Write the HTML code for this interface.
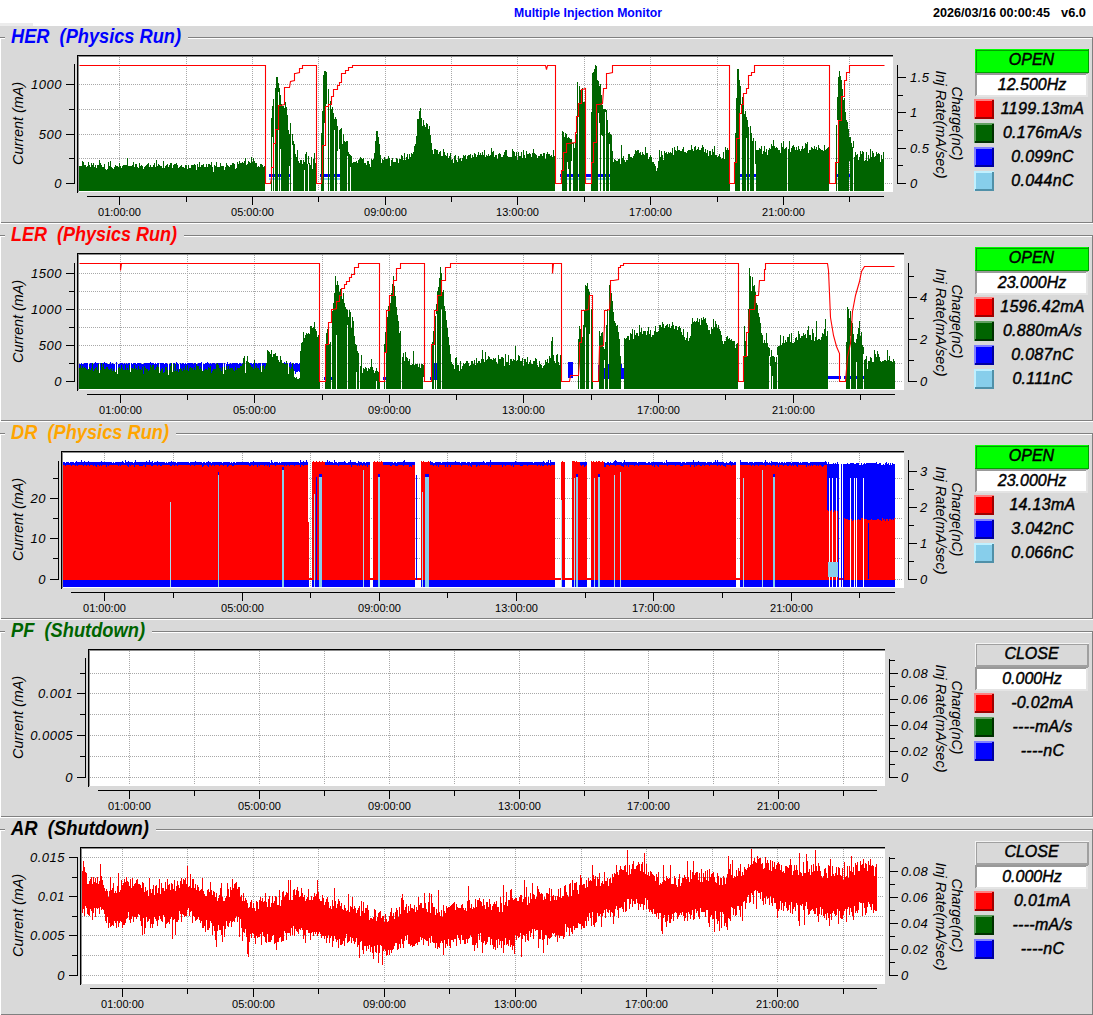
<!DOCTYPE html><html><head><meta charset="utf-8"><style>html,body{margin:0;padding:0;background:#d9d9d9;width:1093px;height:1015px;overflow:hidden}svg{position:absolute;left:0;top:0;display:block}text{font-family:'Liberation Sans', sans-serif}</style></head><body><svg width="1093" height="1015" viewBox="0 0 1093 1015"><rect x="0" y="0" width="1093" height="1015" fill="#d9d9d9"/><rect x="0" y="0" width="1093" height="26" fill="#ffffff"/><rect x="0" y="23" width="33" height="3" fill="#ececec"/><text x="514" y="17" font-size="12" font-weight="bold" fill="#0000ff" textLength="148" lengthAdjust="spacingAndGlyphs">Multiple Injection Monitor</text><text x="933" y="17" font-size="12" font-weight="bold" fill="#000" textLength="117" lengthAdjust="spacingAndGlyphs">2026/03/16 00:00:45</text><text x="1061" y="17" font-size="12" font-weight="bold" fill="#000" textLength="25" lengthAdjust="spacingAndGlyphs">v6.0</text><g shape-rendering="crispEdges"><rect x="0" y="37" width="1092" height="1" fill="#808080"/><rect x="0" y="222" width="1092" height="1" fill="#808080"/><rect x="1092" y="37" width="1" height="186" fill="#808080"/><rect x="0" y="38" width="1092" height="1" fill="#fff"/><rect x="0" y="223" width="1093" height="1" fill="#fff"/><rect x="0" y="38" width="1" height="185" fill="#fff"/><rect x="5" y="36" width="183" height="3" fill="#d9d9d9"/></g><text x="11" y="43" font-size="20" font-weight="bold" font-style="italic" fill="#0000ff" textLength="170" lengthAdjust="spacingAndGlyphs" xml:space="preserve">HER  (Physics Run)</text><g shape-rendering="crispEdges"><rect x="0" y="235" width="1092" height="1" fill="#808080"/><rect x="0" y="420" width="1092" height="1" fill="#808080"/><rect x="1092" y="235" width="1" height="186" fill="#808080"/><rect x="0" y="236" width="1092" height="1" fill="#fff"/><rect x="0" y="421" width="1093" height="1" fill="#fff"/><rect x="0" y="236" width="1" height="185" fill="#fff"/><rect x="5" y="234" width="179" height="3" fill="#d9d9d9"/></g><text x="11" y="241" font-size="20" font-weight="bold" font-style="italic" fill="#ff0000" textLength="166" lengthAdjust="spacingAndGlyphs" xml:space="preserve">LER  (Physics Run)</text><g shape-rendering="crispEdges"><rect x="0" y="433" width="1092" height="1" fill="#808080"/><rect x="0" y="618" width="1092" height="1" fill="#808080"/><rect x="1092" y="433" width="1" height="186" fill="#808080"/><rect x="0" y="434" width="1092" height="1" fill="#fff"/><rect x="0" y="619" width="1093" height="1" fill="#fff"/><rect x="0" y="434" width="1" height="185" fill="#fff"/><rect x="5" y="432" width="171" height="3" fill="#d9d9d9"/></g><text x="11" y="439" font-size="20" font-weight="bold" font-style="italic" fill="#ffa500" textLength="158" lengthAdjust="spacingAndGlyphs" xml:space="preserve">DR  (Physics Run)</text><g shape-rendering="crispEdges"><rect x="0" y="631" width="1092" height="1" fill="#808080"/><rect x="0" y="816" width="1092" height="1" fill="#808080"/><rect x="1092" y="631" width="1" height="186" fill="#808080"/><rect x="0" y="632" width="1092" height="1" fill="#fff"/><rect x="0" y="817" width="1093" height="1" fill="#fff"/><rect x="0" y="632" width="1" height="185" fill="#fff"/><rect x="5" y="630" width="147" height="3" fill="#d9d9d9"/></g><text x="11" y="637" font-size="20" font-weight="bold" font-style="italic" fill="#006400" textLength="134" lengthAdjust="spacingAndGlyphs" xml:space="preserve">PF  (Shutdown)</text><g shape-rendering="crispEdges"><rect x="0" y="829" width="1092" height="1" fill="#808080"/><rect x="0" y="1014" width="1092" height="1" fill="#808080"/><rect x="1092" y="829" width="1" height="186" fill="#808080"/><rect x="0" y="830" width="1092" height="1" fill="#fff"/><rect x="0" y="1015" width="1093" height="1" fill="#fff"/><rect x="0" y="830" width="1" height="185" fill="#fff"/><rect x="5" y="828" width="151" height="3" fill="#d9d9d9"/></g><text x="11" y="835" font-size="20" font-weight="bold" font-style="italic" fill="#000000" textLength="138" lengthAdjust="spacingAndGlyphs" xml:space="preserve">AR  (Shutdown)</text><rect x="77" y="55" width="816" height="137" fill="#fff"/><line x1="79" y1="84.5" x2="892" y2="84.5" stroke="#a8a8a8" stroke-width="1" stroke-dasharray="1 1" shape-rendering="crispEdges"/><line x1="79" y1="109.5" x2="892" y2="109.5" stroke="#a8a8a8" stroke-width="1" stroke-dasharray="1 1" shape-rendering="crispEdges"/><line x1="79" y1="134.5" x2="892" y2="134.5" stroke="#a8a8a8" stroke-width="1" stroke-dasharray="1 1" shape-rendering="crispEdges"/><line x1="79" y1="158.5" x2="892" y2="158.5" stroke="#a8a8a8" stroke-width="1" stroke-dasharray="1 1" shape-rendering="crispEdges"/><line x1="79" y1="183.5" x2="892" y2="183.5" stroke="#a8a8a8" stroke-width="1" stroke-dasharray="1 1" shape-rendering="crispEdges"/><line x1="119.5" y1="57" x2="119.5" y2="191" stroke="#a8a8a8" stroke-width="1" stroke-dasharray="1 1" shape-rendering="crispEdges"/><line x1="186.5" y1="57" x2="186.5" y2="191" stroke="#a8a8a8" stroke-width="1" stroke-dasharray="1 1" shape-rendering="crispEdges"/><line x1="252.5" y1="57" x2="252.5" y2="191" stroke="#a8a8a8" stroke-width="1" stroke-dasharray="1 1" shape-rendering="crispEdges"/><line x1="318.5" y1="57" x2="318.5" y2="191" stroke="#a8a8a8" stroke-width="1" stroke-dasharray="1 1" shape-rendering="crispEdges"/><line x1="385.5" y1="57" x2="385.5" y2="191" stroke="#a8a8a8" stroke-width="1" stroke-dasharray="1 1" shape-rendering="crispEdges"/><line x1="451.5" y1="57" x2="451.5" y2="191" stroke="#a8a8a8" stroke-width="1" stroke-dasharray="1 1" shape-rendering="crispEdges"/><line x1="517.5" y1="57" x2="517.5" y2="191" stroke="#a8a8a8" stroke-width="1" stroke-dasharray="1 1" shape-rendering="crispEdges"/><line x1="584.5" y1="57" x2="584.5" y2="191" stroke="#a8a8a8" stroke-width="1" stroke-dasharray="1 1" shape-rendering="crispEdges"/><line x1="650.5" y1="57" x2="650.5" y2="191" stroke="#a8a8a8" stroke-width="1" stroke-dasharray="1 1" shape-rendering="crispEdges"/><line x1="717.5" y1="57" x2="717.5" y2="191" stroke="#a8a8a8" stroke-width="1" stroke-dasharray="1 1" shape-rendering="crispEdges"/><line x1="783.5" y1="57" x2="783.5" y2="191" stroke="#a8a8a8" stroke-width="1" stroke-dasharray="1 1" shape-rendering="crispEdges"/><line x1="849.5" y1="57" x2="849.5" y2="191" stroke="#a8a8a8" stroke-width="1" stroke-dasharray="1 1" shape-rendering="crispEdges"/><rect x="269" y="178" width="21" height="2" fill="#87ceeb" shape-rendering="crispEdges"/><rect x="269" y="174" width="21" height="3" fill="#0000ff" shape-rendering="crispEdges"/><rect x="320" y="178" width="22" height="2" fill="#87ceeb" shape-rendering="crispEdges"/><rect x="320" y="174" width="22" height="3" fill="#0000ff" shape-rendering="crispEdges"/><rect x="560" y="178" width="53" height="2" fill="#87ceeb" shape-rendering="crispEdges"/><rect x="560" y="174" width="53" height="3" fill="#0000ff" shape-rendering="crispEdges"/><rect x="734" y="178" width="23" height="2" fill="#87ceeb" shape-rendering="crispEdges"/><rect x="734" y="174" width="23" height="3" fill="#0000ff" shape-rendering="crispEdges"/><rect x="835" y="178" width="17" height="2" fill="#87ceeb" shape-rendering="crispEdges"/><rect x="835" y="174" width="17" height="3" fill="#0000ff" shape-rendering="crispEdges"/><path d="M78,162.6h1V191h-1zM79,165.8h1V191h-1zM80,166h1V191h-1zM81,165.5h1V191h-1zM82,160.7h1V191h-1zM83,162.2h1V191h-1zM84,165.3h1V191h-1zM85,165.4h1V191h-1zM86,167.3h1V191h-1zM87,165.5h1V191h-1zM88,162.2h1V191h-1zM89,165.1h1V191h-1zM90,166.8h1V191h-1zM91,162.5h1V191h-1zM92,165.4h1V191h-1zM93,163.2h1V191h-1zM94,166.6h1V191h-1zM95,165.2h1V191h-1zM96,167.7h1V191h-1zM97,164.6h1V191h-1zM98,165.3h1V191h-1zM99,159.8h1V191h-1zM100,163.2h1V191h-1zM101,164.5h1V191h-1zM102,166.8h1V191h-1zM103,166.7h1V191h-1zM104,163.9h1V191h-1zM105,169.2h1V191h-1zM106,170.2h1V191h-1zM107,168.9h1V191h-1zM108,161.9h1V191h-1zM109,166.1h1V191h-1zM110,160.5h1V191h-1zM111,166.9h1V191h-1zM112,167.9h1V191h-1zM113,169h1V191h-1zM114,166.7h1V191h-1zM115,165h1V191h-1zM116,165.9h1V191h-1zM117,165.8h1V191h-1zM118,166.7h1V191h-1zM119,163.1h1V191h-1zM120,165.9h1V191h-1zM121,168h1V191h-1zM122,165.6h1V191h-1zM123,164.9h1V191h-1zM124,164.6h1V191h-1zM125,165.1h1V191h-1zM126,164.6h1V191h-1zM127,158h1V191h-1zM128,166h1V191h-1zM129,165.5h1V191h-1zM130,166.4h1V191h-1zM131,165.6h1V191h-1zM132,164.6h1V191h-1zM133,162.2h1V191h-1zM134,167.1h1V191h-1zM135,164.1h1V191h-1zM136,163.7h1V191h-1zM137,167.4h1V191h-1zM138,168h1V191h-1zM139,163.4h1V191h-1zM140,166.1h1V191h-1zM141,165h1V191h-1zM142,166.1h1V191h-1zM143,168.8h1V191h-1zM144,167.4h1V191h-1zM145,165.8h1V191h-1zM146,164.6h1V191h-1zM147,163.9h1V191h-1zM148,162.5h1V191h-1zM149,167.3h1V191h-1zM150,165.3h1V191h-1zM151,166.8h1V191h-1zM152,167.3h1V191h-1zM153,165.3h1V191h-1zM154,163.4h1V191h-1zM155,167.2h1V191h-1zM156,160.2h1V191h-1zM157,166h1V191h-1zM158,163.8h1V191h-1zM159,164.5h1V191h-1zM160,166.2h1V191h-1zM161,166.3h1V191h-1zM162,167.6h1V191h-1zM163,161.1h1V191h-1zM164,168.1h1V191h-1zM165,166h1V191h-1zM166,165.1h1V191h-1zM167,163.6h1V191h-1zM168,166.6h1V191h-1zM169,165.4h1V191h-1zM170,162.8h1V191h-1zM171,162.8h1V191h-1zM172,168h1V191h-1zM173,165.2h1V191h-1zM174,164h1V191h-1zM175,163.5h1V191h-1zM176,162.5h1V191h-1zM177,165.2h1V191h-1zM178,167.9h1V191h-1zM179,167.1h1V191h-1zM180,166.3h1V191h-1zM181,165.3h1V191h-1zM182,166.7h1V191h-1zM183,166.8h1V191h-1zM184,168.1h1V191h-1zM185,165.1h1V191h-1zM186,165.1h1V191h-1zM187,169h1V191h-1zM188,165.1h1V191h-1zM189,167.6h1V191h-1zM190,168.2h1V191h-1zM191,165.3h1V191h-1zM192,165.4h1V191h-1zM193,165.4h1V191h-1zM194,163.6h1V191h-1zM195,164.8h1V191h-1zM196,170h1V191h-1zM197,164.4h1V191h-1zM198,167.4h1V191h-1zM199,161.7h1V191h-1zM200,166.5h1V191h-1zM201,165.1h1V191h-1zM202,164.9h1V191h-1zM203,163.9h1V191h-1zM204,167.2h1V191h-1zM205,167.2h1V191h-1zM206,164h1V191h-1zM207,166.9h1V191h-1zM208,163.8h1V191h-1zM209,163.5h1V191h-1zM210,165.2h1V191h-1zM211,161.7h1V191h-1zM212,166.8h1V191h-1zM213,172.3h1V191h-1zM214,165.3h1V191h-1zM215,166.2h1V191h-1zM216,161.7h1V191h-1zM217,167h1V191h-1zM218,167h1V191h-1zM219,166.8h1V191h-1zM220,163h1V191h-1zM221,165.6h1V191h-1zM222,165.7h1V191h-1zM223,166.4h1V191h-1zM224,169.7h1V191h-1zM225,167h1V191h-1zM226,163h1V191h-1zM227,164.8h1V191h-1zM228,166h1V191h-1zM229,167h1V191h-1zM230,164.6h1V191h-1zM231,164.8h1V191h-1zM232,163.4h1V191h-1zM233,163.2h1V191h-1zM234,164.3h1V191h-1zM235,168.8h1V191h-1zM236,167.6h1V191h-1zM237,161.8h1V191h-1zM238,164h1V191h-1zM239,161.3h1V191h-1zM240,162.9h1V191h-1zM241,162.8h1V191h-1zM242,161.5h1V191h-1zM243,162.6h1V191h-1zM244,160.5h1V191h-1zM245,157.9h1V191h-1zM246,164.6h1V191h-1zM247,163.7h1V191h-1zM248,160.9h1V191h-1zM249,162.3h1V191h-1zM250,163.4h1V191h-1zM251,157.2h1V191h-1zM252,162.1h1V191h-1zM253,158.4h1V191h-1zM254,160.9h1V191h-1zM255,163.3h1V191h-1zM256,163.2h1V191h-1zM257,167.1h1V191h-1zM258,166h1V191h-1zM259,167.1h1V191h-1zM260,164.1h1V191h-1zM261,164.2h1V191h-1zM262,164.8h1V191h-1zM263,167.2h1V191h-1zM264,166h1V191h-1zM271,118.2h1V191h-1zM272,105.7h1V136.5h-1zM273,98.8h1V191h-1zM275,88.3h1V191h-1zM276,76.7h1V191h-1zM277,77.2h1V191h-1zM278,83.1h1V91.6h-1zM279,88.3h1V191h-1zM280,95.1h1V148.7h-1zM281,104h1V191h-1zM282,105.9h1V191h-1zM283,106.1h1V191h-1zM284,107.6h1V191h-1zM285,102.4h1V191h-1zM286,106.6h1V191h-1zM287,115h1V191h-1zM288,129.9h1V191h-1zM289,133.9h1V165.6h-1zM290,123.1h1V191h-1zM292,133.8h1V144.5h-1zM293,140.5h1V191h-1zM294,143.8h1V191h-1zM295,154.4h1V191h-1zM296,156.6h1V191h-1zM297,149.7h1V191h-1zM298,160.5h1V191h-1zM299,162.8h1V191h-1zM300,160.4h1V191h-1zM301,160.4h1V191h-1zM302,163.8h1V191h-1zM303,160.4h1V191h-1zM304,161.7h1V170.2h-1zM305,154.4h1V191h-1zM306,152.2h1V191h-1zM307,164.2h1V191h-1zM308,155.6h1V163.7h-1zM309,162.5h1V191h-1zM310,164.5h1V191h-1zM311,156.9h1V191h-1zM312,169.1h1V191h-1zM313,158.9h1V191h-1zM314,153.1h1V191h-1zM315,162.5h1V191h-1zM321,132.8h1V191h-1zM322,110.9h1V191h-1zM323,75.4h1V191h-1zM324,71.2h1V123.2h-1zM325,71.3h1V135.3h-1zM326,71.5h1V103.5h-1zM328,88.9h1V191h-1zM330,101.1h1V191h-1zM331,109.4h1V191h-1zM332,107.3h1V191h-1zM333,113.1h1V191h-1zM334,119.3h1V129.6h-1zM335,117.1h1V191h-1zM336,118.9h1V191h-1zM337,125.9h1V151.2h-1zM339,129.8h1V148.5h-1zM340,129.1h1V191h-1zM341,128.3h1V191h-1zM342,143.6h1V191h-1zM343,134.1h1V191h-1zM344,141.1h1V191h-1zM345,141.8h1V191h-1zM346,140.6h1V191h-1zM347,141.1h1V156.1h-1zM348,152.4h1V191h-1zM349,153.6h1V191h-1zM350,154.8h1V167h-1zM351,156h1V191h-1zM352,162.8h1V191h-1zM353,162.3h1V191h-1zM354,161.8h1V191h-1zM355,161.9h1V191h-1zM356,160.7h1V191h-1zM357,163.3h1V191h-1zM358,159.6h1V191h-1zM359,158.5h1V191h-1zM360,156.5h1V191h-1zM361,158h1V191h-1zM362,159.2h1V191h-1zM363,157.7h1V191h-1zM364,163h1V191h-1zM365,162.8h1V191h-1zM366,164.5h1V191h-1zM367,161.2h1V191h-1zM368,161.1h1V191h-1zM369,164.2h1V191h-1zM370,166.5h1V191h-1zM371,158.7h1V191h-1zM372,160.2h1V191h-1zM373,159.3h1V191h-1zM374,152.8h1V191h-1zM375,140.8h1V191h-1zM376,130.5h1V191h-1zM377,131.3h1V191h-1zM378,136.7h1V191h-1zM379,144.1h1V191h-1zM380,155.3h1V191h-1zM381,163.3h1V191h-1zM382,158.7h1V191h-1zM383,160.3h1V191h-1zM384,157h1V191h-1zM385,158.8h1V191h-1zM386,159h1V191h-1zM387,159.2h1V191h-1zM388,155.8h1V191h-1zM389,157.7h1V191h-1zM390,165.9h1V191h-1zM391,159.5h1V191h-1zM392,157.5h1V191h-1zM393,162.3h1V191h-1zM394,161.5h1V191h-1zM395,161.9h1V191h-1zM396,157.9h1V191h-1zM397,158.8h1V191h-1zM398,162.8h1V191h-1zM399,158.5h1V191h-1zM400,159.3h1V191h-1zM401,154.7h1V191h-1zM402,156.4h1V191h-1zM403,159.9h1V191h-1zM404,153.3h1V191h-1zM405,160.2h1V191h-1zM406,157.4h1V191h-1zM407,154.2h1V191h-1zM408,159.3h1V191h-1zM409,154.2h1V191h-1zM410,157.1h1V191h-1zM411,152.5h1V191h-1zM412,153.9h1V191h-1zM413,151.9h1V191h-1zM414,145.6h1V191h-1zM415,144.1h1V191h-1zM416,136h1V191h-1zM417,119.4h1V191h-1zM418,119.1h1V191h-1zM419,111.4h1V191h-1zM420,108.2h1V191h-1zM421,117.7h1V191h-1zM422,125.9h1V191h-1zM423,120.3h1V191h-1zM424,124.9h1V191h-1zM425,126.7h1V191h-1zM426,123.4h1V191h-1zM427,124h1V191h-1zM428,128.9h1V191h-1zM429,126.1h1V191h-1zM430,134.6h1V191h-1zM431,143.3h1V191h-1zM432,150.4h1V191h-1zM433,153.8h1V191h-1zM434,148.7h1V191h-1zM435,149.4h1V191h-1zM436,149.7h1V191h-1zM437,149.7h1V191h-1zM438,153.8h1V191h-1zM439,152.1h1V191h-1zM440,150.8h1V191h-1zM441,156.4h1V191h-1zM442,155.5h1V191h-1zM443,148.9h1V191h-1zM444,152.4h1V191h-1zM445,154.5h1V191h-1zM446,155.7h1V191h-1zM447,152.7h1V191h-1zM448,157.6h1V191h-1zM449,156.3h1V191h-1zM450,153.3h1V191h-1zM451,159.6h1V191h-1zM452,159.4h1V191h-1zM453,162.7h1V191h-1zM454,155.7h1V191h-1zM455,155.2h1V191h-1zM456,159.8h1V191h-1zM457,162.3h1V191h-1zM458,156.4h1V191h-1zM459,158.7h1V191h-1zM460,157.6h1V191h-1zM461,161.3h1V191h-1zM462,157.9h1V191h-1zM463,155h1V191h-1zM464,156.1h1V191h-1zM465,154.9h1V191h-1zM466,158.5h1V191h-1zM467,156.3h1V191h-1zM468,155.4h1V191h-1zM469,154.6h1V191h-1zM470,154.2h1V191h-1zM471,157.6h1V191h-1zM472,155.2h1V191h-1zM473,156.7h1V191h-1zM474,153.2h1V191h-1zM475,153.5h1V191h-1zM476,156.6h1V191h-1zM477,155.1h1V191h-1zM478,151.8h1V191h-1zM479,154.6h1V191h-1zM480,153.1h1V191h-1zM481,155.4h1V191h-1zM482,152h1V191h-1zM483,154.6h1V191h-1zM484,150.1h1V191h-1zM485,156.6h1V191h-1zM486,155.1h1V191h-1zM487,156.2h1V191h-1zM488,153.5h1V191h-1zM489,155.6h1V191h-1zM490,154.9h1V191h-1zM491,148.1h1V191h-1zM492,152.3h1V191h-1zM493,150.6h1V191h-1zM494,156.8h1V191h-1zM495,155.2h1V191h-1zM496,154.6h1V191h-1zM497,158.9h1V191h-1zM498,154.3h1V191h-1zM499,152.5h1V191h-1zM500,153.9h1V191h-1zM501,156.5h1V191h-1zM502,157.1h1V191h-1zM503,154.8h1V191h-1zM504,152h1V191h-1zM505,149.7h1V191h-1zM506,150.2h1V191h-1zM507,156.3h1V191h-1zM508,156.6h1V191h-1zM509,157.4h1V191h-1zM510,157.2h1V191h-1zM511,156.5h1V191h-1zM512,148.9h1V191h-1zM513,151.2h1V191h-1zM514,152h1V191h-1zM515,155.5h1V191h-1zM516,152.4h1V191h-1zM517,159.8h1V191h-1zM518,152.1h1V191h-1zM519,156.2h1V191h-1zM520,156h1V191h-1zM521,152h1V191h-1zM522,157.9h1V191h-1zM523,150h1V191h-1zM524,154.6h1V191h-1zM525,157.6h1V191h-1zM526,150.8h1V191h-1zM527,153.7h1V191h-1zM528,153.5h1V191h-1zM529,152.8h1V191h-1zM530,154.2h1V191h-1zM531,157.3h1V191h-1zM532,152.8h1V191h-1zM533,149.4h1V191h-1zM534,153.1h1V191h-1zM535,154.3h1V191h-1zM536,155.3h1V191h-1zM537,157.5h1V191h-1zM538,156.3h1V191h-1zM539,155.7h1V191h-1zM540,153.7h1V191h-1zM541,153.6h1V191h-1zM542,155.9h1V191h-1zM543,152.8h1V191h-1zM544,153h1V191h-1zM545,158.8h1V191h-1zM546,154.2h1V191h-1zM547,151.7h1V191h-1zM548,154.2h1V191h-1zM549,153.5h1V191h-1zM550,156.4h1V191h-1zM551,154.8h1V191h-1zM552,156.9h1V191h-1zM553,150h1V191h-1zM554,156.3h1V191h-1zM562,131.2h1V191h-1zM563,131.9h1V191h-1zM564,137.3h1V191h-1zM565,132.5h1V191h-1zM566,133.6h1V191h-1zM567,138.4h1V162.4h-1zM568,136.9h1V168.8h-1zM569,137.6h1V191h-1zM570,139h1V191h-1zM571,138.7h1V160.9h-1zM572,142.6h1V144.1h-1zM573,143.2h1V191h-1zM574,147.8h1V191h-1zM575,140.8h1V191h-1zM576,133.8h1V191h-1zM577,81.9h1V191h-1zM579,86.2h1V191h-1zM580,90.1h1V191h-1zM581,89.8h1V191h-1zM582,88.4h1V191h-1zM583,101.8h1V191h-1zM584,102.1h1V191h-1zM591,111.7h1V191h-1zM592,72.7h1V191h-1zM593,71.7h1V191h-1zM594,69h1V191h-1zM595,64.7h1V191h-1zM596,66.3h1V191h-1zM597,79.6h1V191h-1zM598,81.1h1V112.8h-1zM599,86.1h1V123.3h-1zM600,84h1V191h-1zM601,94.8h1V134.9h-1zM602,105.4h1V135.7h-1zM603,109.3h1V191h-1zM604,109.3h1V191h-1zM605,109h1V112h-1zM606,109.6h1V191h-1zM607,120.2h1V191h-1zM608,133.4h1V191h-1zM609,132.3h1V144.4h-1zM610,133.7h1V191h-1zM611,135.1h1V191h-1zM612,150.9h1V191h-1zM613,162.2h1V191h-1zM614,159.4h1V191h-1zM615,160.4h1V191h-1zM616,161.1h1V191h-1zM617,161.3h1V191h-1zM618,158.7h1V191h-1zM619,159.3h1V191h-1zM620,163.7h1V191h-1zM621,144.9h1V191h-1zM622,158.4h1V191h-1zM623,156h1V191h-1zM624,159.9h1V191h-1zM625,161.6h1V191h-1zM626,159.7h1V191h-1zM627,160.4h1V191h-1zM628,153.9h1V191h-1zM629,153.6h1V191h-1zM630,157.1h1V191h-1zM631,156.8h1V191h-1zM632,157.5h1V191h-1zM633,156.4h1V191h-1zM634,154.1h1V191h-1zM635,150.1h1V191h-1zM636,150.9h1V191h-1zM637,149.7h1V191h-1zM638,149.9h1V191h-1zM639,152.6h1V191h-1zM640,152.2h1V191h-1zM641,155.1h1V191h-1zM642,151.5h1V191h-1zM643,154.3h1V191h-1zM644,155.4h1V191h-1zM645,147h1V191h-1zM646,153.2h1V191h-1zM647,152.8h1V191h-1zM648,159.3h1V191h-1zM649,157h1V191h-1zM650,155.1h1V191h-1zM651,156.7h1V191h-1zM652,161.7h1V191h-1zM653,162.1h1V191h-1zM654,163.6h1V191h-1zM655,165.6h1V191h-1zM656,171h1V191h-1zM657,168.3h1V191h-1zM658,160.6h1V191h-1zM659,150h1V191h-1zM660,157.3h1V191h-1zM661,150.9h1V191h-1zM662,154.7h1V191h-1zM663,160.2h1V191h-1zM664,151.2h1V191h-1zM665,153.1h1V191h-1zM666,152.1h1V191h-1zM667,153.7h1V191h-1zM668,151.7h1V191h-1zM669,153h1V191h-1zM670,152.4h1V191h-1zM671,153h1V191h-1zM672,147.6h1V191h-1zM673,155.1h1V191h-1zM674,146.5h1V191h-1zM675,149.8h1V191h-1zM676,150.6h1V191h-1zM677,146h1V191h-1zM678,150.1h1V191h-1zM679,149.8h1V191h-1zM680,150.8h1V191h-1zM681,151h1V191h-1zM682,149.2h1V191h-1zM683,147.1h1V191h-1zM684,151.8h1V191h-1zM685,152.4h1V191h-1zM686,153.4h1V191h-1zM687,150.7h1V191h-1zM688,149.6h1V191h-1zM689,149.9h1V191h-1zM690,149.9h1V191h-1zM691,145.4h1V191h-1zM692,149.2h1V191h-1zM693,150.9h1V191h-1zM694,147.2h1V191h-1zM695,146h1V191h-1zM696,149.7h1V191h-1zM697,148.8h1V191h-1zM698,147.4h1V191h-1zM699,150h1V191h-1zM700,149.6h1V191h-1zM701,148.3h1V191h-1zM702,144.9h1V191h-1zM703,147.2h1V191h-1zM704,152.3h1V191h-1zM705,149h1V191h-1zM706,152.6h1V191h-1zM707,150.4h1V191h-1zM708,155.8h1V191h-1zM709,151.3h1V191h-1zM710,151.3h1V191h-1zM711,154.6h1V191h-1zM712,149.3h1V191h-1zM713,151.5h1V191h-1zM714,145.5h1V191h-1zM715,154.5h1V191h-1zM716,155.1h1V191h-1zM717,156.6h1V191h-1zM718,155.8h1V191h-1zM719,154.2h1V191h-1zM720,157.4h1V191h-1zM721,159.2h1V191h-1zM722,157.9h1V191h-1zM723,151.6h1V191h-1zM724,158.7h1V191h-1zM725,147.4h1V191h-1zM726,150.1h1V191h-1zM727,148h1V191h-1zM728,150.4h1V191h-1zM729,145.1h1V191h-1zM735,132.6h1V191h-1zM736,98.4h1V191h-1zM737,68.6h1V191h-1zM738,68.6h1V191h-1zM739,79.7h1V191h-1zM740,85.8h1V105.1h-1zM742,97.1h1V191h-1zM743,98.9h1V191h-1zM744,113.7h1V191h-1zM745,110.7h1V191h-1zM746,117.3h1V137.6h-1zM747,120.3h1V191h-1zM748,126.9h1V191h-1zM750,126.2h1V191h-1zM751,133.2h1V191h-1zM752,141.3h1V191h-1zM753,137.7h1V191h-1zM755,141.2h1V163.9h-1zM756,149.8h1V191h-1zM757,150.4h1V191h-1zM758,149.6h1V191h-1zM759,147.8h1V191h-1zM760,148.7h1V191h-1zM761,145.8h1V191h-1zM762,154.4h1V191h-1zM763,150.8h1V191h-1zM764,146h1V191h-1zM765,151.7h1V191h-1zM766,149.4h1V191h-1zM767,154.7h1V191h-1zM768,149.5h1V191h-1zM769,147.9h1V191h-1zM770,149.1h1V191h-1zM771,143.8h1V191h-1zM772,146.4h1V191h-1zM773,140.1h1V191h-1zM774,146h1V191h-1zM775,147.8h1V191h-1zM776,147.2h1V191h-1zM777,148.2h1V191h-1zM778,149.5h1V191h-1zM779,149.6h1V191h-1zM780,153.4h1V191h-1zM781,142.7h1V191h-1zM782,146.5h1V191h-1zM783,141h1V191h-1zM784,149h1V191h-1zM785,147.7h1V191h-1zM786,146.5h1V191h-1zM788,149.4h1V191h-1zM789,141h1V191h-1zM790,151.7h1V191h-1zM791,147.8h1V191h-1zM792,146.1h1V191h-1zM793,144.9h1V191h-1zM794,147.2h1V191h-1zM795,150.1h1V191h-1zM796,147h1V191h-1zM797,150.2h1V191h-1zM798,146.4h1V191h-1zM799,149.1h1V191h-1zM800,150.8h1V191h-1zM801,149.1h1V191h-1zM802,145.6h1V191h-1zM803,148.9h1V191h-1zM804,148.4h1V191h-1zM805,143.1h1V191h-1zM806,144h1V191h-1zM807,141.7h1V191h-1zM808,152.7h1V191h-1zM809,149.9h1V191h-1zM810,149.8h1V191h-1zM811,146.8h1V191h-1zM812,148.3h1V191h-1zM813,149.2h1V191h-1zM814,145.7h1V191h-1zM815,148.8h1V191h-1zM816,146.9h1V191h-1zM817,150.3h1V191h-1zM818,145.1h1V191h-1zM819,147.5h1V191h-1zM820,148.6h1V191h-1zM821,149.5h1V191h-1zM822,149.7h1V191h-1zM823,150.5h1V191h-1zM824,145.4h1V191h-1zM825,149.6h1V191h-1zM826,149.4h1V191h-1zM827,147.7h1V191h-1zM828,147.3h1V191h-1zM836,125.3h1V191h-1zM837,96.8h1V120.1h-1zM838,77h1V191h-1zM839,70.6h1V191h-1zM840,75.7h1V191h-1zM841,80h1V191h-1zM842,88.9h1V191h-1zM843,100h1V191h-1zM844,97.8h1V191h-1zM845,111.6h1V191h-1zM846,119.8h1V191h-1zM847,121.6h1V191h-1zM848,129.1h1V191h-1zM849,136.6h1V160.9h-1zM850,137.4h1V191h-1zM851,142.7h1V191h-1zM852,147.4h1V191h-1zM853,141h1V148.3h-1zM854,156.6h1V191h-1zM855,152.4h1V191h-1zM856,155h1V191h-1zM857,153.9h1V191h-1zM858,159.8h1V191h-1zM859,157.4h1V191h-1zM860,151.3h1V191h-1zM861,154.1h1V191h-1zM862,150.8h1V191h-1zM863,151.9h1V191h-1zM864,160.9h1V191h-1zM865,160.3h1V191h-1zM866,152.3h1V191h-1zM867,160.5h1V191h-1zM868,154.9h1V191h-1zM869,159h1V191h-1zM870,149.1h1V191h-1zM871,156.7h1V191h-1zM872,150.6h1V191h-1zM873,152.8h1V191h-1zM874,157.2h1V191h-1zM875,156.3h1V191h-1zM876,151.9h1V191h-1zM877,153.5h1V191h-1zM878,152.8h1V191h-1zM879,154.3h1V191h-1zM880,161.8h1V191h-1zM881,155.4h1V191h-1zM882,158.9h1V191h-1zM883,151.9h1V191h-1z" fill="#006400" shape-rendering="crispEdges"/><path d="M79.5,65.5 L265.5,65.5 L265.5,183.5 L270.5,183.5 L271.5,178.5 L271.5,167.5 L273.5,167.5 L273.5,143.5 L275.5,143.5 L275.5,129.5 L278.5,129.5 L278.5,105.5 L280.5,105.5 L284.5,104.5 L284.5,89.5 L284.5,87.5 L289.5,87.5 L290.5,81.5 L294.5,80.5 L294.5,73.5 L295.5,73.5 L299.5,72.5 L299.5,68.5 L302.5,68.5 L302.5,65.5 L305.5,65.5 L316.5,65.5 L316.5,183.5 L321.5,183.5 L322.5,174.5 L322.5,145.5 L325.5,145.5 L325.5,106.5 L328.5,106.5 L328.5,104.5 L331.5,104.5 L331.5,96.5 L333.5,96.5 L333.5,89.5 L337.5,89.5 L337.5,85.5 L339.5,85.5 L339.5,82.5 L341.5,82.5 L341.5,73.5 L345.5,73.5 L345.5,70.5 L348.5,70.5 L348.5,67.5 L352.5,67.5 L352.5,65.5 L356.5,65.5 L545.5,65.5 L546.5,69.5 L547.5,65.5 L555.5,65.5 L555.5,183.5 L561.5,183.5 L561.5,170.5 L563.5,170.5 L563.5,152.5 L566.5,152.5 L566.5,143.5 L568.5,143.5 L575.5,142.5 L575.5,132.5 L576.5,132.5 L576.5,116.5 L578.5,116.5 L578.5,103.5 L581.5,103.5 L581.5,89.5 L582.5,89.5 L585.5,88.5 L585.5,183.5 L591.5,183.5 L591.5,162.5 L593.5,162.5 L593.5,142.5 L596.5,142.5 L596.5,104.5 L599.5,104.5 L602.5,103.5 L603.5,90.5 L603.5,88.5 L606.5,88.5 L606.5,73.5 L608.5,73.5 L612.5,72.5 L612.5,65.5 L613.5,65.5 L729.5,65.5 L729.5,183.5 L734.5,183.5 L734.5,162.5 L736.5,162.5 L736.5,138.5 L739.5,138.5 L739.5,113.5 L741.5,113.5 L741.5,104.5 L743.5,104.5 L743.5,93.5 L746.5,93.5 L746.5,88.5 L748.5,88.5 L748.5,75.5 L751.5,75.5 L751.5,72.5 L754.5,72.5 L754.5,65.5 L756.5,65.5 L829.5,65.5 L829.5,183.5 L835.5,183.5 L835.5,162.5 L838.5,162.5 L838.5,120.5 L841.5,120.5 L841.5,96.5 L844.5,96.5 L844.5,80.5 L846.5,80.5 L846.5,72.5 L849.5,72.5 L849.5,65.5 L851.5,65.5 L884.5,65.5" fill="none" stroke="#ff0000" stroke-width="1.1" stroke-linejoin="miter"/><rect x="77" y="55" width="816" height="1" fill="#000" shape-rendering="crispEdges"/><rect x="78" y="56" width="815" height="1" fill="#8c8c8c" shape-rendering="crispEdges"/><rect x="77" y="55" width="1" height="138" fill="#000" shape-rendering="crispEdges"/><rect x="78" y="56" width="1" height="136" fill="#8c8c8c" shape-rendering="crispEdges"/><rect x="74" y="64" width="1" height="120" fill="#000" shape-rendering="crispEdges"/><rect x="66" y="84" width="8" height="1" fill="#000" shape-rendering="crispEdges"/><text x="62" y="88.5" font-size="13" font-style="italic" fill="#000" text-anchor="end" letter-spacing="0.5">1000</text><rect x="69" y="109" width="5" height="1" fill="#000" shape-rendering="crispEdges"/><rect x="66" y="134" width="8" height="1" fill="#000" shape-rendering="crispEdges"/><text x="62" y="138.5" font-size="13" font-style="italic" fill="#000" text-anchor="end" letter-spacing="0.5">500</text><rect x="69" y="158" width="5" height="1" fill="#000" shape-rendering="crispEdges"/><rect x="66" y="183" width="8" height="1" fill="#000" shape-rendering="crispEdges"/><text x="62" y="187.5" font-size="13" font-style="italic" fill="#000" text-anchor="end" letter-spacing="0.5">0</text><rect x="897" y="65" width="1" height="119" fill="#000" shape-rendering="crispEdges"/><rect x="898" y="183" width="8" height="1" fill="#000" shape-rendering="crispEdges"/><text x="910" y="187.5" font-size="13" font-style="italic" fill="#000" text-anchor="start" letter-spacing="0.5">0</text><rect x="898" y="165" width="5" height="1" fill="#000" shape-rendering="crispEdges"/><rect x="898" y="148" width="8" height="1" fill="#000" shape-rendering="crispEdges"/><text x="910" y="152.5" font-size="13" font-style="italic" fill="#000" text-anchor="start" letter-spacing="0.5">0.5</text><rect x="898" y="130" width="5" height="1" fill="#000" shape-rendering="crispEdges"/><rect x="898" y="112" width="8" height="1" fill="#000" shape-rendering="crispEdges"/><text x="910" y="116.5" font-size="13" font-style="italic" fill="#000" text-anchor="start" letter-spacing="0.5">1</text><rect x="898" y="95" width="5" height="1" fill="#000" shape-rendering="crispEdges"/><rect x="898" y="77" width="8" height="1" fill="#000" shape-rendering="crispEdges"/><text x="910" y="81.5" font-size="13" font-style="italic" fill="#000" text-anchor="start" letter-spacing="0.5">1.5</text><rect x="87" y="196" width="797" height="1" fill="#000" shape-rendering="crispEdges"/><rect x="119" y="197" width="1" height="8" fill="#000" shape-rendering="crispEdges"/><text x="119.5" y="216" font-size="11" fill="#000" text-anchor="middle">01:00:00</text><rect x="186" y="197" width="1" height="5" fill="#000" shape-rendering="crispEdges"/><rect x="252" y="197" width="1" height="8" fill="#000" shape-rendering="crispEdges"/><text x="252.5" y="216" font-size="11" fill="#000" text-anchor="middle">05:00:00</text><rect x="318" y="197" width="1" height="5" fill="#000" shape-rendering="crispEdges"/><rect x="385" y="197" width="1" height="8" fill="#000" shape-rendering="crispEdges"/><text x="385.5" y="216" font-size="11" fill="#000" text-anchor="middle">09:00:00</text><rect x="451" y="197" width="1" height="5" fill="#000" shape-rendering="crispEdges"/><rect x="517" y="197" width="1" height="8" fill="#000" shape-rendering="crispEdges"/><text x="517.5" y="216" font-size="11" fill="#000" text-anchor="middle">13:00:00</text><rect x="584" y="197" width="1" height="5" fill="#000" shape-rendering="crispEdges"/><rect x="650" y="197" width="1" height="8" fill="#000" shape-rendering="crispEdges"/><text x="650.5" y="216" font-size="11" fill="#000" text-anchor="middle">17:00:00</text><rect x="717" y="197" width="1" height="5" fill="#000" shape-rendering="crispEdges"/><rect x="783" y="197" width="1" height="8" fill="#000" shape-rendering="crispEdges"/><text x="783.5" y="216" font-size="11" fill="#000" text-anchor="middle">21:00:00</text><rect x="849" y="197" width="1" height="5" fill="#000" shape-rendering="crispEdges"/><text transform="translate(22.5,123.5) rotate(-90)" font-size="14" font-style="italic" text-anchor="middle" fill="#000" textLength="83" lengthAdjust="spacingAndGlyphs">Current (mA)</text><text transform="translate(935.5,124.5) rotate(90)" font-size="14" font-style="italic" text-anchor="middle" fill="#000" textLength="108" lengthAdjust="spacingAndGlyphs">Inj Rate(mA/sec)</text><text transform="translate(952,123.5) rotate(90)" font-size="14" font-style="italic" text-anchor="middle" fill="#000" textLength="74" lengthAdjust="spacingAndGlyphs">Charge(nC)</text><rect x="77" y="253" width="827" height="137" fill="#fff"/><line x1="79" y1="273.5" x2="903" y2="273.5" stroke="#a8a8a8" stroke-width="1" stroke-dasharray="1 1" shape-rendering="crispEdges"/><line x1="79" y1="291.5" x2="903" y2="291.5" stroke="#a8a8a8" stroke-width="1" stroke-dasharray="1 1" shape-rendering="crispEdges"/><line x1="79" y1="309.5" x2="903" y2="309.5" stroke="#a8a8a8" stroke-width="1" stroke-dasharray="1 1" shape-rendering="crispEdges"/><line x1="79" y1="327.5" x2="903" y2="327.5" stroke="#a8a8a8" stroke-width="1" stroke-dasharray="1 1" shape-rendering="crispEdges"/><line x1="79" y1="345.5" x2="903" y2="345.5" stroke="#a8a8a8" stroke-width="1" stroke-dasharray="1 1" shape-rendering="crispEdges"/><line x1="79" y1="363.5" x2="903" y2="363.5" stroke="#a8a8a8" stroke-width="1" stroke-dasharray="1 1" shape-rendering="crispEdges"/><line x1="79" y1="381.5" x2="903" y2="381.5" stroke="#a8a8a8" stroke-width="1" stroke-dasharray="1 1" shape-rendering="crispEdges"/><line x1="120.5" y1="255" x2="120.5" y2="389" stroke="#a8a8a8" stroke-width="1" stroke-dasharray="1 1" shape-rendering="crispEdges"/><line x1="187.5" y1="255" x2="187.5" y2="389" stroke="#a8a8a8" stroke-width="1" stroke-dasharray="1 1" shape-rendering="crispEdges"/><line x1="254.5" y1="255" x2="254.5" y2="389" stroke="#a8a8a8" stroke-width="1" stroke-dasharray="1 1" shape-rendering="crispEdges"/><line x1="322.5" y1="255" x2="322.5" y2="389" stroke="#a8a8a8" stroke-width="1" stroke-dasharray="1 1" shape-rendering="crispEdges"/><line x1="389.5" y1="255" x2="389.5" y2="389" stroke="#a8a8a8" stroke-width="1" stroke-dasharray="1 1" shape-rendering="crispEdges"/><line x1="456.5" y1="255" x2="456.5" y2="389" stroke="#a8a8a8" stroke-width="1" stroke-dasharray="1 1" shape-rendering="crispEdges"/><line x1="523.5" y1="255" x2="523.5" y2="389" stroke="#a8a8a8" stroke-width="1" stroke-dasharray="1 1" shape-rendering="crispEdges"/><line x1="591.5" y1="255" x2="591.5" y2="389" stroke="#a8a8a8" stroke-width="1" stroke-dasharray="1 1" shape-rendering="crispEdges"/><line x1="658.5" y1="255" x2="658.5" y2="389" stroke="#a8a8a8" stroke-width="1" stroke-dasharray="1 1" shape-rendering="crispEdges"/><line x1="725.5" y1="255" x2="725.5" y2="389" stroke="#a8a8a8" stroke-width="1" stroke-dasharray="1 1" shape-rendering="crispEdges"/><line x1="793.5" y1="255" x2="793.5" y2="389" stroke="#a8a8a8" stroke-width="1" stroke-dasharray="1 1" shape-rendering="crispEdges"/><line x1="860.5" y1="255" x2="860.5" y2="389" stroke="#a8a8a8" stroke-width="1" stroke-dasharray="1 1" shape-rendering="crispEdges"/><path d="M78,363h1V374h-1zM79,364h1V372h-1zM80,364h1V372h-1zM81,363h1V373.8h-1zM82,364h1V372.8h-1zM83,364h1V372.7h-1zM84,363h1V372.7h-1zM85,363h1V373.9h-1zM86,363h1V373h-1zM87,363h1V371.6h-1zM89,364h1V372.5h-1zM90,363h1V373.7h-1zM91,363h1V371.9h-1zM92,363h1V373h-1zM93,364h1V372.1h-1zM94,363h1V373.9h-1zM95,362h1V373.7h-1zM96,363h1V372h-1zM97,363h1V372.6h-1zM98,363h1V373.1h-1zM100,363h1V372.4h-1zM101,363h1V372.8h-1zM102,363h1V373.2h-1zM103,363h1V373.5h-1zM104,362h1V372.5h-1zM105,363h1V373.1h-1zM106,363h1V373.9h-1zM107,364h1V371.8h-1zM108,364h1V371.3h-1zM109,364h1V373.2h-1zM110,362h1V372.1h-1zM111,364h1V372.5h-1zM112,363h1V372.4h-1zM113,364h1V371.2h-1zM114,364h1V372.9h-1zM116,362h1V372.5h-1zM118,364h1V374h-1zM119,364h1V371.4h-1zM120,363h1V371h-1zM121,363h1V373.4h-1zM122,363h1V373.5h-1zM123,364h1V371.5h-1zM124,363h1V373.5h-1zM125,364h1V373.6h-1zM126,363h1V371.6h-1zM127,364h1V371.7h-1zM128,363h1V372.7h-1zM129,363h1V373.3h-1zM131,363h1V373.5h-1zM132,364h1V372.5h-1zM133,363h1V372.9h-1zM134,363h1V373.8h-1zM135,363h1V373h-1zM136,364h1V371.2h-1zM137,363h1V371.9h-1zM138,363h1V371.5h-1zM139,363h1V373.4h-1zM140,363h1V373.9h-1zM141,364h1V372.5h-1zM142,364h1V371.9h-1zM143,364h1V373.5h-1zM144,363h1V372.5h-1zM145,363h1V373.7h-1zM146,363h1V371.1h-1zM147,363h1V372.1h-1zM148,363h1V371.5h-1zM149,363h1V372.4h-1zM150,362h1V373.8h-1zM151,363h1V373.1h-1zM152,363h1V372.7h-1zM153,363h1V372.7h-1zM154,364h1V373.3h-1zM155,363h1V372.7h-1zM156,364h1V372.1h-1zM157,363h1V372.7h-1zM158,363h1V373.2h-1zM160,363h1V371.4h-1zM161,363h1V371.4h-1zM162,363h1V371h-1zM163,363h1V373.8h-1zM164,364h1V372.1h-1zM165,363h1V372.5h-1zM166,363h1V373.1h-1zM167,364h1V373.6h-1zM169,364h1V372.6h-1zM170,363h1V372.3h-1zM171,364h1V372.2h-1zM173,363h1V373.7h-1zM174,363h1V373.1h-1zM175,364h1V373.8h-1zM176,362h1V372.9h-1zM177,363h1V372.8h-1zM178,364h1V372.9h-1zM180,363h1V372.4h-1zM181,364h1V371.8h-1zM182,363h1V371.9h-1zM183,363h1V371.2h-1zM184,364h1V372.2h-1zM185,363h1V373.7h-1zM186,364h1V373.4h-1zM187,363h1V371.1h-1zM188,363h1V373.5h-1zM189,363h1V371.7h-1zM190,363h1V373h-1zM191,363h1V372.3h-1zM192,363h1V371.4h-1zM193,364h1V372.1h-1zM194,363h1V371.9h-1zM195,363h1V371.6h-1zM196,364h1V373.8h-1zM197,364h1V372.8h-1zM198,363h1V371h-1zM199,363h1V372.5h-1zM200,363h1V372.5h-1zM201,362h1V371.5h-1zM203,364h1V372.5h-1zM204,364h1V373h-1zM205,363h1V371.1h-1zM206,363h1V371.3h-1zM207,362h1V371.3h-1zM208,363h1V371.7h-1zM209,364h1V372.8h-1zM210,363h1V371.8h-1zM211,364h1V373.3h-1zM212,363h1V373.2h-1zM213,363h1V373.2h-1zM214,363h1V374h-1zM215,364h1V371.3h-1zM216,363h1V372.6h-1zM217,364h1V372.5h-1zM218,363h1V373.4h-1zM219,363h1V374h-1zM220,363h1V372.3h-1zM221,363h1V373.2h-1zM222,363h1V372.1h-1zM224,363h1V373.3h-1zM226,364h1V373.6h-1zM227,362h1V371.5h-1zM228,364h1V371.1h-1zM229,364h1V373.9h-1zM230,363h1V373.4h-1zM231,364h1V373.6h-1zM232,363h1V373.9h-1zM233,363h1V373.5h-1zM234,363h1V373.2h-1zM235,363h1V371.6h-1zM236,363h1V372.1h-1zM237,363h1V371.8h-1zM238,364h1V373h-1zM239,363h1V373h-1zM240,363h1V373.2h-1zM241,364h1V373h-1zM242,363h1V371.1h-1zM243,363h1V372.6h-1zM244,363h1V371.3h-1zM246,363h1V374h-1zM247,363h1V372.7h-1zM248,363h1V373.7h-1zM249,363h1V371.3h-1zM250,363h1V373.1h-1zM251,363h1V373.9h-1zM252,364h1V372.9h-1zM253,363h1V373.9h-1zM254,362h1V374h-1zM255,363h1V372.3h-1zM256,363h1V372.5h-1zM257,364h1V372.9h-1zM258,363h1V373.9h-1zM259,363h1V373.1h-1zM260,363h1V373.4h-1zM262,363h1V371.3h-1zM263,363h1V372.3h-1zM264,363h1V373.5h-1zM265,363h1V371.9h-1zM266,363h1V372.4h-1zM267,362h1V372.9h-1zM268,364h1V372.9h-1zM269,362h1V371.8h-1zM270,363h1V372.8h-1zM271,363h1V373.6h-1zM272,364h1V373.3h-1zM273,363h1V372.9h-1zM274,363h1V374h-1zM275,363h1V371.8h-1zM276,363h1V372.6h-1zM277,364h1V373.3h-1zM278,363h1V371.8h-1zM279,363h1V371.4h-1zM280,364h1V372.4h-1zM281,363h1V371.5h-1zM282,363h1V371h-1zM283,363h1V371.2h-1zM284,362h1V372.9h-1zM285,363h1V373.7h-1zM286,364h1V373.8h-1zM287,363h1V372.6h-1zM289,363h1V371.4h-1zM290,362h1V371.1h-1zM291,364h1V372.4h-1zM292,364h1V371.6h-1zM293,363h1V371.7h-1zM294,364h1V371.4h-1zM295,363h1V373.7h-1zM296,363h1V372.3h-1zM297,363h1V371.8h-1zM298,364h1V371.1h-1zM299,363h1V371.6h-1zM568,362h1V378h-1zM569,362h1V378h-1zM570,362h1V378h-1zM571,362h1V378h-1zM572,362h1V378h-1zM598,365.2h1V379h-1zM599,364.4h1V379h-1zM600,362.1h1V379h-1zM601,362.4h1V379h-1zM602,363.6h1V379h-1zM603,368.3h1V379h-1zM604,368.2h1V379h-1zM605,368.4h1V379h-1zM606,367.6h1V379h-1zM607,370h1V379h-1zM608,364.1h1V379h-1zM609,367.7h1V379h-1zM610,365.6h1V379h-1zM611,369.7h1V379h-1zM612,365.5h1V379h-1zM613,367.8h1V379h-1zM614,368.2h1V379h-1zM615,369.7h1V379h-1zM616,368.1h1V379h-1zM617,364.6h1V379h-1zM618,367.2h1V379h-1zM619,368.4h1V379h-1zM620,369.5h1V379h-1zM621,364h1V379h-1zM622,367.8h1V379h-1zM623,367.8h1V379h-1zM624,363.3h1V379h-1zM625,363h1V379h-1z" fill="#0000ff" shape-rendering="crispEdges"/><rect x="828" y="376" width="13" height="3" fill="#0000ff" shape-rendering="crispEdges"/><rect x="324" y="377" width="9" height="3" fill="#0000ff" shape-rendering="crispEdges"/><rect x="383" y="377" width="7" height="3" fill="#0000ff" shape-rendering="crispEdges"/><rect x="430" y="377" width="8" height="3" fill="#0000ff" shape-rendering="crispEdges"/><rect x="434" y="363" width="3" height="17" fill="#0000ff" shape-rendering="crispEdges"/><rect x="844" y="376" width="20" height="3" fill="#0000ff" shape-rendering="crispEdges"/><path d="M78,366.3h1V389h-1zM79,367.6h1V389h-1zM80,365.3h1V389h-1zM81,367.8h1V389h-1zM82,365.9h1V389h-1zM83,368.1h1V389h-1zM84,366.5h1V389h-1zM85,368.4h1V389h-1zM86,368.5h1V389h-1zM87,369.7h1V389h-1zM88,369.3h1V389h-1zM89,366.8h1V389h-1zM90,370h1V389h-1zM91,368.3h1V389h-1zM92,363.4h1V389h-1zM93,371.2h1V389h-1zM94,369.3h1V389h-1zM95,368.2h1V389h-1zM96,367h1V389h-1zM97,369.7h1V389h-1zM98,363.7h1V389h-1zM99,373.4h1V389h-1zM100,369.6h1V389h-1zM101,362.7h1V389h-1zM102,367h1V389h-1zM103,364h1V389h-1zM104,368.8h1V389h-1zM105,368.8h1V389h-1zM106,366.9h1V389h-1zM107,366.5h1V389h-1zM108,368.7h1V389h-1zM109,370.2h1V389h-1zM110,368.5h1V389h-1zM111,368.3h1V389h-1zM112,370.6h1V389h-1zM113,369.4h1V389h-1zM114,370.7h1V389h-1zM115,371.7h1V389h-1zM116,369.6h1V389h-1zM117,373.8h1V389h-1zM118,367.8h1V389h-1zM119,366.6h1V389h-1zM120,368.6h1V389h-1zM121,365h1V389h-1zM122,367.8h1V389h-1zM123,369.7h1V389h-1zM124,369.6h1V389h-1zM125,365h1V389h-1zM126,369.5h1V389h-1zM127,367.6h1V389h-1zM128,370.1h1V389h-1zM129,365h1V389h-1zM130,372.4h1V389h-1zM131,368.3h1V389h-1zM132,367.9h1V389h-1zM133,369.2h1V389h-1zM134,364.5h1V389h-1zM135,368.6h1V389h-1zM136,368h1V389h-1zM137,369.5h1V389h-1zM138,366h1V389h-1zM139,368.5h1V389h-1zM140,369h1V389h-1zM141,369.9h1V389h-1zM142,366.6h1V389h-1zM143,373.7h1V389h-1zM144,365.8h1V389h-1zM145,367.9h1V389h-1zM146,368.8h1V389h-1zM147,369h1V389h-1zM148,370.5h1V389h-1zM149,370.1h1V389h-1zM150,365.2h1V389h-1zM151,367.2h1V389h-1zM152,365.3h1V389h-1zM153,365.4h1V389h-1zM154,370.1h1V389h-1zM155,368.7h1V389h-1zM156,367h1V389h-1zM157,365.3h1V389h-1zM158,367.1h1V389h-1zM159,372.5h1V389h-1zM160,370.5h1V389h-1zM161,368.9h1V389h-1zM162,367.8h1V389h-1zM163,373h1V389h-1zM164,371.8h1V389h-1zM165,366.9h1V389h-1zM166,366.5h1V389h-1zM167,369.9h1V389h-1zM168,374.6h1V389h-1zM169,369.9h1V389h-1zM170,365.9h1V389h-1zM171,363h1V389h-1zM172,371.5h1V389h-1zM173,364.3h1V389h-1zM174,371.1h1V389h-1zM175,364.3h1V389h-1zM176,370.8h1V389h-1zM177,368.7h1V389h-1zM178,371.6h1V389h-1zM179,369.1h1V389h-1zM180,368.3h1V389h-1zM181,368.8h1V389h-1zM182,371h1V389h-1zM183,367.9h1V389h-1zM184,370.3h1V389h-1zM185,365.5h1V389h-1zM186,370h1V389h-1zM187,365.2h1V389h-1zM188,371.3h1V389h-1zM189,367.6h1V389h-1zM190,366.8h1V389h-1zM191,367.7h1V389h-1zM192,368.4h1V389h-1zM193,370.4h1V389h-1zM194,366.7h1V389h-1zM195,370.3h1V389h-1zM196,364.2h1V389h-1zM197,365.9h1V389h-1zM198,366h1V389h-1zM199,369.1h1V389h-1zM200,367.1h1V389h-1zM201,369h1V389h-1zM202,371.2h1V389h-1zM203,370.9h1V389h-1zM204,370.4h1V389h-1zM205,368.5h1V389h-1zM206,368.8h1V389h-1zM207,369.5h1V389h-1zM208,367.2h1V389h-1zM209,368.1h1V389h-1zM210,366.4h1V389h-1zM211,372.6h1V389h-1zM212,370.5h1V389h-1zM213,369h1V389h-1zM214,368.9h1V389h-1zM215,369.4h1V389h-1zM216,364.4h1V389h-1zM217,363.1h1V389h-1zM218,364.9h1V389h-1zM219,367.5h1V389h-1zM220,368.2h1V389h-1zM221,370.7h1V389h-1zM222,366.8h1V389h-1zM223,373.8h1V389h-1zM224,367.3h1V389h-1zM225,369.7h1V389h-1zM226,365.8h1V389h-1zM227,369h1V389h-1zM228,365.9h1V389h-1zM229,368.5h1V389h-1zM230,368.1h1V389h-1zM231,368.1h1V389h-1zM232,368.3h1V389h-1zM233,369.6h1V389h-1zM234,371.2h1V389h-1zM235,366.7h1V389h-1zM236,369.5h1V389h-1zM237,368.2h1V389h-1zM238,368.1h1V389h-1zM239,368.3h1V389h-1zM240,365.9h1V389h-1zM241,365.6h1V389h-1zM242,364.1h1V389h-1zM243,357.7h1V389h-1zM244,356.1h1V389h-1zM245,372.6h1V389h-1zM246,360.7h1V389h-1zM247,355.9h1V389h-1zM248,361.5h1V389h-1zM249,362.9h1V389h-1zM250,365.2h1V389h-1zM251,366.5h1V389h-1zM252,366.8h1V389h-1zM253,368.7h1V389h-1zM254,360.3h1V389h-1zM255,367.5h1V389h-1zM256,365.6h1V389h-1zM257,368.3h1V389h-1zM258,367.5h1V389h-1zM259,369.8h1V389h-1zM260,365.7h1V389h-1zM261,372h1V389h-1zM262,365.7h1V389h-1zM263,364.5h1V389h-1zM264,369.4h1V389h-1zM265,366.3h1V389h-1zM266,362.5h1V389h-1zM267,349.9h1V389h-1zM268,351h1V389h-1zM269,351.9h1V389h-1zM270,354h1V389h-1zM271,350.1h1V389h-1zM272,356.7h1V389h-1zM273,353.6h1V389h-1zM274,353.7h1V389h-1zM275,352.5h1V389h-1zM276,356.4h1V389h-1zM277,356.1h1V389h-1zM278,360.1h1V389h-1zM279,361.6h1V389h-1zM280,355.5h1V389h-1zM281,360.3h1V389h-1zM282,363.3h1V389h-1zM283,362.6h1V389h-1zM284,363.5h1V389h-1zM285,364.4h1V389h-1zM286,361.1h1V389h-1zM287,363.6h1V389h-1zM288,374.1h1V389h-1zM289,367h1V389h-1zM290,368.6h1V389h-1zM291,367.3h1V389h-1zM292,362.5h1V389h-1zM293,368.5h1V389h-1zM294,377.3h1V389h-1zM295,377.9h1V389h-1zM296,377h1V389h-1zM297,378.6h1V389h-1zM298,378.5h1V389h-1zM299,378.2h1V389h-1zM300,351.3h1V389h-1zM301,342.9h1V389h-1zM302,342.3h1V389h-1zM303,331.7h1V389h-1zM304,337.8h1V389h-1zM305,335.3h1V389h-1zM306,332.8h1V389h-1zM307,334.1h1V389h-1zM308,332.7h1V389h-1zM309,333.8h1V389h-1zM310,326.2h1V389h-1zM311,326.3h1V389h-1zM312,327.6h1V389h-1zM313,327.1h1V389h-1zM314,321.7h1V389h-1zM315,329.1h1V389h-1zM316,330.7h1V389h-1zM317,336.9h1V389h-1zM318,334.9h1V389h-1zM319,327h1V389h-1zM325,361.5h1V389h-1zM326,333.3h1V389h-1zM327,328.7h1V389h-1zM328,334.6h1V389h-1zM329,344.1h1V389h-1zM330,342h1V389h-1zM332,310.9h1V389h-1zM333,303.1h1V389h-1zM334,292.6h1V389h-1zM335,275.9h1V389h-1zM336,284.5h1V334.5h-1zM337,281.2h1V389h-1zM338,284.6h1V389h-1zM339,292.4h1V389h-1zM340,288.7h1V389h-1zM341,288.2h1V389h-1zM342,298.9h1V389h-1zM343,293.3h1V389h-1zM344,303.4h1V389h-1zM345,306.9h1V389h-1zM346,309.3h1V389h-1zM347,309.9h1V324.6h-1zM348,316.9h1V389h-1zM349,310.3h1V389h-1zM350,312h1V389h-1zM351,327.9h1V389h-1zM352,316.7h1V389h-1zM353,320.5h1V389h-1zM354,336.3h1V389h-1zM355,344.4h1V389h-1zM356,345.4h1V371.5h-1zM357,351.2h1V389h-1zM358,353.1h1V389h-1zM360,365.5h1V389h-1zM361,354.9h1V389h-1zM362,373.1h1V389h-1zM363,368.2h1V389h-1zM364,369.3h1V389h-1zM365,366.5h1V389h-1zM366,368.1h1V389h-1zM367,371.1h1V389h-1zM368,368.2h1V389h-1zM369,369.3h1V389h-1zM370,366.5h1V389h-1zM371,358.6h1V389h-1zM372,366.8h1V389h-1zM373,369.5h1V389h-1zM374,373.2h1V389h-1zM375,370.6h1V389h-1zM376,368.2h1V380.5h-1zM377,370.7h1V389h-1zM378,371.7h1V389h-1zM379,372.5h1V389h-1zM384,343.9h1V389h-1zM385,332h1V353.1h-1zM386,327.1h1V389h-1zM387,316.5h1V389h-1zM388,306.1h1V389h-1zM389,305.3h1V389h-1zM390,303.3h1V389h-1zM391,293h1V389h-1zM392,284.4h1V389h-1zM393,275.8h1V389h-1zM394,286.3h1V389h-1zM395,295.5h1V389h-1zM396,307.1h1V389h-1zM397,314.5h1V389h-1zM398,320.9h1V389h-1zM399,332.5h1V389h-1zM400,331.3h1V389h-1zM402,356.7h1V389h-1zM403,352.9h1V389h-1zM404,361h1V389h-1zM405,351.8h1V389h-1zM406,357.1h1V389h-1zM407,357.9h1V389h-1zM408,361.1h1V389h-1zM409,359.3h1V389h-1zM410,365h1V389h-1zM411,364.7h1V389h-1zM412,363.6h1V389h-1zM413,351.1h1V389h-1zM414,365.1h1V389h-1zM415,364.2h1V389h-1zM416,364.3h1V389h-1zM417,364.3h1V389h-1zM418,367h1V389h-1zM419,363.6h1V389h-1zM420,368.3h1V389h-1zM421,363.6h1V389h-1zM422,364.2h1V389h-1zM423,364.8h1V377.1h-1zM432,341.9h1V389h-1zM433,330.5h1V389h-1zM434,321.1h1V328.8h-1zM435,315.8h1V389h-1zM436,303.7h1V313.5h-1zM437,291h1V389h-1zM438,286.8h1V389h-1zM439,277.9h1V389h-1zM440,266.9h1V389h-1zM441,272.5h1V309.3h-1zM442,291.7h1V389h-1zM443,290h1V389h-1zM444,306.4h1V389h-1zM445,310.9h1V389h-1zM446,320.3h1V389h-1zM447,327.8h1V389h-1zM448,337h1V389h-1zM449,344.8h1V389h-1zM450,354.4h1V389h-1zM451,362.1h1V389h-1zM452,363.9h1V389h-1zM453,364.5h1V389h-1zM454,368.9h1V389h-1zM455,358.1h1V389h-1zM456,356.7h1V389h-1zM457,365.3h1V389h-1zM458,364.6h1V389h-1zM459,370.9h1V389h-1zM460,360.9h1V389h-1zM461,368.7h1V389h-1zM462,365.7h1V389h-1zM463,363h1V389h-1zM464,364.4h1V389h-1zM465,362.7h1V389h-1zM466,360.9h1V389h-1zM467,361h1V389h-1zM468,363.2h1V389h-1zM469,365.5h1V389h-1zM470,365.3h1V389h-1zM471,361.1h1V389h-1zM472,360.7h1V389h-1zM473,364.1h1V389h-1zM474,360.1h1V389h-1zM475,364.5h1V389h-1zM476,358.4h1V389h-1zM477,363.4h1V389h-1zM478,360.8h1V389h-1zM479,360.8h1V389h-1zM480,362.5h1V389h-1zM481,359.2h1V389h-1zM482,350.1h1V389h-1zM483,358.9h1V389h-1zM484,361.5h1V389h-1zM485,351.7h1V389h-1zM486,359.9h1V389h-1zM487,359.2h1V389h-1zM488,356h1V389h-1zM489,356.6h1V389h-1zM490,358.9h1V389h-1zM491,358.5h1V389h-1zM492,359.6h1V389h-1zM493,358.2h1V389h-1zM494,358.7h1V389h-1zM495,357.6h1V389h-1zM496,361.6h1V389h-1zM497,364h1V389h-1zM498,355h1V389h-1zM499,358.7h1V389h-1zM500,359h1V389h-1zM501,356.6h1V389h-1zM502,356.5h1V389h-1zM503,358.4h1V389h-1zM504,365.8h1V389h-1zM505,354.2h1V389h-1zM506,362h1V389h-1zM507,362.3h1V389h-1zM508,354.7h1V389h-1zM509,364.5h1V389h-1zM510,358.5h1V389h-1zM511,359.4h1V389h-1zM512,361h1V389h-1zM513,359.2h1V389h-1zM514,360.3h1V389h-1zM515,346.2h1V389h-1zM516,361.3h1V389h-1zM517,359.9h1V389h-1zM518,355.4h1V389h-1zM519,355.8h1V389h-1zM520,360.5h1V389h-1zM521,361.1h1V389h-1zM522,357.9h1V389h-1zM523,365.6h1V389h-1zM524,358.5h1V389h-1zM525,359.2h1V389h-1zM526,361.5h1V389h-1zM527,356.6h1V389h-1zM528,364h1V389h-1zM529,361.8h1V389h-1zM530,359.6h1V389h-1zM531,364.3h1V389h-1zM532,363.8h1V389h-1zM533,361.2h1V389h-1zM534,361.1h1V389h-1zM535,357.5h1V389h-1zM536,358.6h1V389h-1zM537,365.4h1V389h-1zM538,366.6h1V389h-1zM539,360.8h1V389h-1zM540,363.7h1V389h-1zM541,365.3h1V389h-1zM542,368.1h1V389h-1zM543,365.5h1V389h-1zM544,364.8h1V389h-1zM545,360h1V389h-1zM546,362.1h1V389h-1zM547,359.4h1V389h-1zM548,363.4h1V389h-1zM549,355.9h1V389h-1zM550,358.4h1V389h-1zM551,341.3h1V389h-1zM552,337.2h1V389h-1zM553,355h1V389h-1zM554,361h1V389h-1zM555,362.7h1V389h-1zM556,354.7h1V389h-1zM557,353.9h1V389h-1zM558,362.3h1V389h-1zM559,364.8h1V389h-1zM560,355.2h1V389h-1zM578,338.6h1V389h-1zM579,325.7h1V341.6h-1zM580,329.1h1V389h-1zM581,334.4h1V389h-1zM582,337.3h1V389h-1zM583,325h1V389h-1zM584,310.6h1V389h-1zM585,284.6h1V326.7h-1zM586,286.1h1V389h-1zM587,283h1V389h-1zM588,289.3h1V389h-1zM589,292.3h1V333.9h-1zM591,308.6h1V389h-1zM592,311.5h1V389h-1zM599,330.6h1V389h-1zM600,336.3h1V389h-1zM601,333.3h1V389h-1zM602,332.1h1V389h-1zM603,346.6h1V389h-1zM604,348.8h1V359.5h-1zM605,341.6h1V389h-1zM606,324.8h1V389h-1zM607,308.5h1V389h-1zM609,284.5h1V389h-1zM610,287.8h1V389h-1zM611,293.1h1V389h-1zM612,301.4h1V389h-1zM613,311.5h1V389h-1zM614,321.2h1V389h-1zM615,323.2h1V389h-1zM616,326h1V389h-1zM617,325.4h1V389h-1zM618,332.1h1V389h-1zM619,339.4h1V389h-1zM620,356.1h1V389h-1zM624,337.7h1V389h-1zM625,338.6h1V389h-1zM626,337.5h1V389h-1zM627,336.1h1V389h-1zM628,335.8h1V389h-1zM629,339.7h1V389h-1zM630,333.4h1V389h-1zM631,333.9h1V389h-1zM632,329h1V389h-1zM633,339.2h1V389h-1zM634,330.1h1V389h-1zM635,334.8h1V389h-1zM636,333.2h1V389h-1zM637,332.7h1V389h-1zM638,336h1V389h-1zM639,324.6h1V389h-1zM640,332.3h1V389h-1zM641,328h1V389h-1zM642,333.7h1V389h-1zM643,330.5h1V389h-1zM644,330.9h1V389h-1zM645,331.2h1V389h-1zM646,334.7h1V389h-1zM647,331.4h1V389h-1zM648,326.7h1V389h-1zM649,333.7h1V389h-1zM650,330.3h1V389h-1zM651,336.9h1V389h-1zM652,334.6h1V389h-1zM653,334.9h1V389h-1zM654,330.8h1V389h-1zM655,325.8h1V389h-1zM656,331.8h1V389h-1zM657,331.7h1V389h-1zM658,331h1V389h-1zM659,324.5h1V389h-1zM660,324.8h1V389h-1zM661,327.3h1V389h-1zM662,322.3h1V389h-1zM663,323.6h1V389h-1zM664,327.9h1V389h-1zM665,325.8h1V389h-1zM666,324.5h1V389h-1zM667,323.7h1V389h-1zM668,326.8h1V389h-1zM669,323.8h1V389h-1zM670,327.8h1V389h-1zM671,326.1h1V389h-1zM672,322.2h1V389h-1zM673,325.4h1V389h-1zM674,328.6h1V389h-1zM675,326.3h1V389h-1zM676,326h1V389h-1zM677,330.4h1V389h-1zM678,327.4h1V389h-1zM679,325.9h1V389h-1zM680,327.6h1V389h-1zM681,332h1V389h-1zM682,335.4h1V389h-1zM683,329.4h1V389h-1zM684,336.6h1V389h-1zM685,340h1V389h-1zM686,338.4h1V389h-1zM687,331.9h1V389h-1zM688,340.7h1V389h-1zM689,338.1h1V389h-1zM690,335.6h1V389h-1zM691,324.1h1V389h-1zM692,318.2h1V389h-1zM693,321.5h1V389h-1zM694,321.2h1V389h-1zM695,322.4h1V389h-1zM696,320.6h1V389h-1zM697,317.8h1V389h-1zM698,322.4h1V389h-1zM699,318.8h1V389h-1zM700,325.2h1V389h-1zM701,317.5h1V389h-1zM702,319.9h1V389h-1zM703,316.7h1V389h-1zM704,319.4h1V389h-1zM705,317.8h1V389h-1zM706,322.5h1V389h-1zM707,324.8h1V389h-1zM708,329.5h1V389h-1zM709,329.7h1V389h-1zM710,333.7h1V389h-1zM711,327.1h1V389h-1zM712,329.3h1V389h-1zM713,318.6h1V389h-1zM714,327h1V389h-1zM715,321h1V389h-1zM716,323.9h1V389h-1zM717,327.6h1V389h-1zM718,325.4h1V389h-1zM719,329.2h1V389h-1zM720,330.7h1V389h-1zM721,334.8h1V389h-1zM722,340.8h1V389h-1zM723,343.8h1V389h-1zM724,341.1h1V389h-1zM725,341.3h1V389h-1zM726,336.8h1V389h-1zM727,336h1V389h-1zM728,339.4h1V389h-1zM729,338.1h1V389h-1zM730,339.9h1V389h-1zM731,339.1h1V389h-1zM732,340.8h1V389h-1zM733,341.1h1V389h-1zM734,341.3h1V389h-1zM735,348.1h1V389h-1zM736,344.3h1V389h-1zM737,342.9h1V389h-1zM744,325.5h1V389h-1zM745,341h1V389h-1zM746,347h1V389h-1zM747,356.4h1V389h-1zM748,309.2h1V389h-1zM749,268.2h1V389h-1zM750,275.7h1V389h-1zM751,290.6h1V389h-1zM752,276.8h1V389h-1zM753,286.2h1V389h-1zM754,284.6h1V389h-1zM755,291.8h1V389h-1zM756,303.1h1V389h-1zM757,305.4h1V389h-1zM758,313.2h1V389h-1zM759,317.3h1V389h-1zM760,323h1V389h-1zM761,333.3h1V389h-1zM762,335.4h1V389h-1zM763,342.6h1V389h-1zM764,339.6h1V389h-1zM765,342.5h1V389h-1zM766,333.2h1V389h-1zM767,342.5h1V389h-1zM768,347.2h1V389h-1zM769,348.1h1V355.6h-1zM770,356.7h1V365.9h-1zM771,349.6h1V389h-1zM772,356.3h1V375.8h-1zM773,355.5h1V389h-1zM774,356.8h1V389h-1zM775,361.6h1V389h-1zM776,357.1h1V389h-1zM777,346.8h1V354.5h-1zM778,346.1h1V389h-1zM779,345.5h1V389h-1zM780,335.1h1V389h-1zM781,345.1h1V389h-1zM782,343.1h1V389h-1zM783,335.5h1V389h-1zM784,342.7h1V389h-1zM785,340.2h1V389h-1zM786,342.1h1V389h-1zM787,336.9h1V389h-1zM788,337.3h1V389h-1zM789,334.3h1V389h-1zM790,341.6h1V389h-1zM791,332.7h1V389h-1zM792,342.8h1V389h-1zM793,342.8h1V389h-1zM794,341.6h1V389h-1zM795,338h1V389h-1zM796,336.9h1V389h-1zM797,339.7h1V389h-1zM798,331.2h1V389h-1zM799,334.2h1V389h-1zM800,338.3h1V389h-1zM801,335.9h1V389h-1zM802,335.7h1V389h-1zM803,333.3h1V389h-1zM804,334.7h1V389h-1zM805,334.2h1V389h-1zM806,338.4h1V389h-1zM807,330.3h1V389h-1zM808,326.2h1V389h-1zM809,334.7h1V389h-1zM810,335.3h1V389h-1zM811,340.2h1V389h-1zM812,329.4h1V389h-1zM813,332.9h1V389h-1zM814,340.6h1V389h-1zM815,337.1h1V389h-1zM816,321.2h1V389h-1zM817,340.1h1V389h-1zM818,338.8h1V389h-1zM819,338.6h1V389h-1zM820,339.5h1V389h-1zM821,337.2h1V389h-1zM822,333h1V389h-1zM823,333.6h1V389h-1zM824,329.4h1V389h-1zM825,318.9h1V389h-1zM826,336.1h1V389h-1zM827,331h1V389h-1zM846,342h1V389h-1zM847,307h1V389h-1zM848,308.8h1V389h-1zM849,318.1h1V389h-1zM850,310.6h1V336.4h-1zM851,321.2h1V389h-1zM852,323.3h1V389h-1zM853,333.8h1V389h-1zM854,342.4h1V389h-1zM855,342.8h1V389h-1zM856,339.3h1V361.9h-1zM857,334.1h1V389h-1zM858,328.2h1V389h-1zM859,320.6h1V389h-1zM860,336.4h1V389h-1zM861,332.2h1V389h-1zM862,345.3h1V389h-1zM863,347.1h1V353.7h-1zM864,359.9h1V389h-1zM865,358.8h1V389h-1zM866,356.2h1V389h-1zM867,368.6h1V389h-1zM868,361h1V389h-1zM869,360.6h1V389h-1zM870,357.3h1V389h-1zM871,357.7h1V389h-1zM872,362.2h1V389h-1zM873,361.5h1V389h-1zM874,349.5h1V389h-1zM875,353.9h1V389h-1zM876,357.2h1V389h-1zM877,351.4h1V389h-1zM878,353.9h1V389h-1zM879,356.8h1V389h-1zM880,360.8h1V389h-1zM881,361.8h1V389h-1zM882,361.1h1V389h-1zM883,360.9h1V389h-1zM884,359.9h1V389h-1zM885,359.7h1V389h-1zM886,361.2h1V389h-1zM887,350.1h1V389h-1zM888,359.8h1V389h-1zM889,356.4h1V389h-1zM890,360.7h1V389h-1zM891,361.3h1V389h-1zM892,361.9h1V389h-1zM893,359.2h1V389h-1zM894,361.4h1V389h-1z" fill="#006400" shape-rendering="crispEdges"/><path d="M79.5,263.5 L120.5,263.5 L120.5,270.5 L121.5,263.5 L319.5,263.5 L319.5,381.5 L325.5,381.5 L325.5,344.5 L328.5,344.5 L328.5,322.5 L331.5,322.5 L331.5,309.5 L333.5,309.5 L336.5,308.5 L336.5,301.5 L339.5,301.5 L339.5,295.5 L341.5,295.5 L341.5,288.5 L344.5,288.5 L344.5,284.5 L346.5,284.5 L346.5,281.5 L349.5,281.5 L349.5,277.5 L351.5,277.5 L351.5,274.5 L354.5,274.5 L354.5,267.5 L358.5,267.5 L358.5,263.5 L361.5,263.5 L379.5,263.5 L379.5,381.5 L384.5,381.5 L384.5,352.5 L386.5,352.5 L386.5,310.5 L389.5,310.5 L389.5,295.5 L393.5,295.5 L393.5,280.5 L396.5,280.5 L396.5,268.5 L400.5,268.5 L400.5,263.5 L404.5,263.5 L424.5,263.5 L424.5,381.5 L431.5,381.5 L431.5,344.5 L434.5,344.5 L434.5,310.5 L437.5,310.5 L437.5,295.5 L441.5,295.5 L441.5,280.5 L445.5,280.5 L445.5,267.5 L450.5,267.5 L450.5,263.5 L454.5,263.5 L552.5,263.5 L552.5,273.5 L553.5,263.5 L561.5,263.5 L561.5,381.5 L569.5,381.5 L570.5,375.5 L578.5,375.5 L579.5,360.5 L579.5,342.5 L581.5,342.5 L581.5,310.5 L584.5,310.5 L588.5,309.5 L589.5,295.5 L592.5,295.5 L592.5,381.5 L598.5,381.5 L599.5,346.5 L603.5,345.5 L604.5,324.5 L604.5,310.5 L606.5,310.5 L609.5,309.5 L610.5,295.5 L610.5,280.5 L613.5,280.5 L618.5,279.5 L618.5,267.5 L620.5,267.5 L620.5,265.5 L623.5,265.5 L623.5,263.5 L625.5,263.5 L738.5,263.5 L738.5,381.5 L743.5,381.5 L743.5,356.5 L746.5,356.5 L746.5,332.5 L748.5,332.5 L749.5,309.5 L754.5,309.5 L755.5,295.5 L758.5,295.5 L759.5,280.5 L764.5,280.5 L764.5,269.5 L765.5,269.5 L765.5,263.5 L769.5,263.5 L827.5,263.5 L828.5,270.5 L829.5,293.5 L830.5,317.5 L833.5,335.5 L836.5,346.5 L839.5,353.5 L839.5,381.5 L845.5,381.5 L847.5,357.5 L850.5,343.5 L852.5,311.5 L855.5,295.5 L859.5,281.5 L861.5,271.5 L864.5,266.5 L894.5,266.5" fill="none" stroke="#ff0000" stroke-width="1.1" stroke-linejoin="miter"/><rect x="77" y="253" width="827" height="1" fill="#000" shape-rendering="crispEdges"/><rect x="78" y="254" width="826" height="1" fill="#8c8c8c" shape-rendering="crispEdges"/><rect x="77" y="253" width="1" height="138" fill="#000" shape-rendering="crispEdges"/><rect x="78" y="254" width="1" height="136" fill="#8c8c8c" shape-rendering="crispEdges"/><rect x="74" y="263" width="1" height="119" fill="#000" shape-rendering="crispEdges"/><rect x="66" y="273" width="8" height="1" fill="#000" shape-rendering="crispEdges"/><text x="62" y="277.5" font-size="13" font-style="italic" fill="#000" text-anchor="end" letter-spacing="0.5">1500</text><rect x="69" y="291" width="5" height="1" fill="#000" shape-rendering="crispEdges"/><rect x="66" y="309" width="8" height="1" fill="#000" shape-rendering="crispEdges"/><text x="62" y="313.5" font-size="13" font-style="italic" fill="#000" text-anchor="end" letter-spacing="0.5">1000</text><rect x="69" y="327" width="5" height="1" fill="#000" shape-rendering="crispEdges"/><rect x="66" y="345" width="8" height="1" fill="#000" shape-rendering="crispEdges"/><text x="62" y="349.5" font-size="13" font-style="italic" fill="#000" text-anchor="end" letter-spacing="0.5">500</text><rect x="69" y="363" width="5" height="1" fill="#000" shape-rendering="crispEdges"/><rect x="66" y="381" width="8" height="1" fill="#000" shape-rendering="crispEdges"/><text x="62" y="385.5" font-size="13" font-style="italic" fill="#000" text-anchor="end" letter-spacing="0.5">0</text><rect x="908" y="263" width="1" height="119" fill="#000" shape-rendering="crispEdges"/><rect x="909" y="381" width="8" height="1" fill="#000" shape-rendering="crispEdges"/><text x="920" y="385.5" font-size="13" font-style="italic" fill="#000" text-anchor="start" letter-spacing="0.5">0</text><rect x="909" y="360" width="5" height="1" fill="#000" shape-rendering="crispEdges"/><rect x="909" y="339" width="8" height="1" fill="#000" shape-rendering="crispEdges"/><text x="920" y="343.5" font-size="13" font-style="italic" fill="#000" text-anchor="start" letter-spacing="0.5">2</text><rect x="909" y="318" width="5" height="1" fill="#000" shape-rendering="crispEdges"/><rect x="909" y="297" width="8" height="1" fill="#000" shape-rendering="crispEdges"/><text x="920" y="301.5" font-size="13" font-style="italic" fill="#000" text-anchor="start" letter-spacing="0.5">4</text><rect x="909" y="276" width="5" height="1" fill="#000" shape-rendering="crispEdges"/><rect x="87" y="394" width="808" height="1" fill="#000" shape-rendering="crispEdges"/><rect x="120" y="395" width="1" height="8" fill="#000" shape-rendering="crispEdges"/><text x="120.5" y="414" font-size="11" fill="#000" text-anchor="middle">01:00:00</text><rect x="187" y="395" width="1" height="5" fill="#000" shape-rendering="crispEdges"/><rect x="254" y="395" width="1" height="8" fill="#000" shape-rendering="crispEdges"/><text x="254.5" y="414" font-size="11" fill="#000" text-anchor="middle">05:00:00</text><rect x="322" y="395" width="1" height="5" fill="#000" shape-rendering="crispEdges"/><rect x="389" y="395" width="1" height="8" fill="#000" shape-rendering="crispEdges"/><text x="389.5" y="414" font-size="11" fill="#000" text-anchor="middle">09:00:00</text><rect x="456" y="395" width="1" height="5" fill="#000" shape-rendering="crispEdges"/><rect x="523" y="395" width="1" height="8" fill="#000" shape-rendering="crispEdges"/><text x="523.5" y="414" font-size="11" fill="#000" text-anchor="middle">13:00:00</text><rect x="591" y="395" width="1" height="5" fill="#000" shape-rendering="crispEdges"/><rect x="658" y="395" width="1" height="8" fill="#000" shape-rendering="crispEdges"/><text x="658.5" y="414" font-size="11" fill="#000" text-anchor="middle">17:00:00</text><rect x="725" y="395" width="1" height="5" fill="#000" shape-rendering="crispEdges"/><rect x="793" y="395" width="1" height="8" fill="#000" shape-rendering="crispEdges"/><text x="793.5" y="414" font-size="11" fill="#000" text-anchor="middle">21:00:00</text><rect x="860" y="395" width="1" height="5" fill="#000" shape-rendering="crispEdges"/><text transform="translate(22.5,321.5) rotate(-90)" font-size="14" font-style="italic" text-anchor="middle" fill="#000" textLength="83" lengthAdjust="spacingAndGlyphs">Current (mA)</text><text transform="translate(935.5,322.5) rotate(90)" font-size="14" font-style="italic" text-anchor="middle" fill="#000" textLength="108" lengthAdjust="spacingAndGlyphs">Inj Rate(mA/sec)</text><text transform="translate(952,321.5) rotate(90)" font-size="14" font-style="italic" text-anchor="middle" fill="#000" textLength="74" lengthAdjust="spacingAndGlyphs">Charge(nC)</text><rect x="61" y="451" width="843" height="137" fill="#fff"/><line x1="63" y1="478.5" x2="903" y2="478.5" stroke="#a8a8a8" stroke-width="1" stroke-dasharray="1 1" shape-rendering="crispEdges"/><line x1="63" y1="498.5" x2="903" y2="498.5" stroke="#a8a8a8" stroke-width="1" stroke-dasharray="1 1" shape-rendering="crispEdges"/><line x1="63" y1="518.5" x2="903" y2="518.5" stroke="#a8a8a8" stroke-width="1" stroke-dasharray="1 1" shape-rendering="crispEdges"/><line x1="63" y1="538.5" x2="903" y2="538.5" stroke="#a8a8a8" stroke-width="1" stroke-dasharray="1 1" shape-rendering="crispEdges"/><line x1="63" y1="558.5" x2="903" y2="558.5" stroke="#a8a8a8" stroke-width="1" stroke-dasharray="1 1" shape-rendering="crispEdges"/><line x1="63" y1="579.5" x2="903" y2="579.5" stroke="#a8a8a8" stroke-width="1" stroke-dasharray="1 1" shape-rendering="crispEdges"/><line x1="104.5" y1="453" x2="104.5" y2="587" stroke="#a8a8a8" stroke-width="1" stroke-dasharray="1 1" shape-rendering="crispEdges"/><line x1="173.5" y1="453" x2="173.5" y2="587" stroke="#a8a8a8" stroke-width="1" stroke-dasharray="1 1" shape-rendering="crispEdges"/><line x1="242.5" y1="453" x2="242.5" y2="587" stroke="#a8a8a8" stroke-width="1" stroke-dasharray="1 1" shape-rendering="crispEdges"/><line x1="310.5" y1="453" x2="310.5" y2="587" stroke="#a8a8a8" stroke-width="1" stroke-dasharray="1 1" shape-rendering="crispEdges"/><line x1="379.5" y1="453" x2="379.5" y2="587" stroke="#a8a8a8" stroke-width="1" stroke-dasharray="1 1" shape-rendering="crispEdges"/><line x1="447.5" y1="453" x2="447.5" y2="587" stroke="#a8a8a8" stroke-width="1" stroke-dasharray="1 1" shape-rendering="crispEdges"/><line x1="516.5" y1="453" x2="516.5" y2="587" stroke="#a8a8a8" stroke-width="1" stroke-dasharray="1 1" shape-rendering="crispEdges"/><line x1="585.5" y1="453" x2="585.5" y2="587" stroke="#a8a8a8" stroke-width="1" stroke-dasharray="1 1" shape-rendering="crispEdges"/><line x1="653.5" y1="453" x2="653.5" y2="587" stroke="#a8a8a8" stroke-width="1" stroke-dasharray="1 1" shape-rendering="crispEdges"/><line x1="722.5" y1="453" x2="722.5" y2="587" stroke="#a8a8a8" stroke-width="1" stroke-dasharray="1 1" shape-rendering="crispEdges"/><line x1="791.5" y1="453" x2="791.5" y2="587" stroke="#a8a8a8" stroke-width="1" stroke-dasharray="1 1" shape-rendering="crispEdges"/><line x1="859.5" y1="453" x2="859.5" y2="587" stroke="#a8a8a8" stroke-width="1" stroke-dasharray="1 1" shape-rendering="crispEdges"/><path d="M62,462h1V465h-1zM62,580h1V587h-1zM63,462h1V465h-1zM63,580h1V587h-1zM64,462h1V465h-1zM64,580h1V587h-1zM65,463h1V466h-1zM65,580h1V587h-1zM66,462h1V465h-1zM66,580h1V587h-1zM67,462h1V465h-1zM67,580h1V587h-1zM68,462h1V465h-1zM68,580h1V587h-1zM69,463h1V465h-1zM69,580h1V587h-1zM70,462h1V465h-1zM70,580h1V587h-1zM71,462h1V466h-1zM71,580h1V587h-1zM72,462h1V465h-1zM72,580h1V587h-1zM73,462h1V465h-1zM73,580h1V587h-1zM74,463h1V465h-1zM74,580h1V587h-1zM75,462h1V466h-1zM75,580h1V587h-1zM76,461h1V465h-1zM76,580h1V587h-1zM77,462h1V466h-1zM77,580h1V587h-1zM78,462h1V465h-1zM78,580h1V587h-1zM79,462h1V465h-1zM79,580h1V587h-1zM80,462h1V465h-1zM80,580h1V587h-1zM81,460h1V465h-1zM81,580h1V587h-1zM82,462h1V465h-1zM82,580h1V587h-1zM83,462h1V466h-1zM83,580h1V587h-1zM84,461h1V465h-1zM84,580h1V587h-1zM85,462h1V465h-1zM85,580h1V587h-1zM86,462h1V466h-1zM86,580h1V587h-1zM87,462h1V465h-1zM87,580h1V587h-1zM88,461h1V465h-1zM88,580h1V587h-1zM89,462h1V466h-1zM89,580h1V587h-1zM90,462h1V465h-1zM90,580h1V587h-1zM91,462h1V465h-1zM91,580h1V587h-1zM92,462h1V465h-1zM92,580h1V587h-1zM93,462h1V466h-1zM93,580h1V587h-1zM94,462h1V465h-1zM94,580h1V587h-1zM95,462h1V466h-1zM95,580h1V587h-1zM96,462h1V467h-1zM96,580h1V587h-1zM97,462h1V465h-1zM97,580h1V587h-1zM98,462h1V465h-1zM98,580h1V587h-1zM99,462h1V466h-1zM99,580h1V587h-1zM100,462h1V465h-1zM100,580h1V587h-1zM101,461h1V466h-1zM101,580h1V587h-1zM102,462h1V465h-1zM102,580h1V587h-1zM103,462h1V465h-1zM103,580h1V587h-1zM104,462h1V465h-1zM104,580h1V587h-1zM105,462h1V465h-1zM105,580h1V587h-1zM106,462h1V467h-1zM106,580h1V587h-1zM107,462h1V465h-1zM107,580h1V587h-1zM108,462h1V466h-1zM108,580h1V587h-1zM109,462h1V465h-1zM109,580h1V587h-1zM110,462h1V465h-1zM110,580h1V587h-1zM111,462h1V465h-1zM111,580h1V587h-1zM112,463h1V465h-1zM112,580h1V587h-1zM113,462h1V465h-1zM113,580h1V587h-1zM114,463h1V465h-1zM114,580h1V587h-1zM115,462h1V465h-1zM115,580h1V587h-1zM116,462h1V465h-1zM116,580h1V587h-1zM117,462h1V465h-1zM117,580h1V587h-1zM118,462h1V466h-1zM118,580h1V587h-1zM119,462h1V465h-1zM119,580h1V587h-1zM120,462h1V466h-1zM120,580h1V587h-1zM121,462h1V465h-1zM121,580h1V587h-1zM122,461h1V465h-1zM122,580h1V587h-1zM123,462h1V465h-1zM123,580h1V587h-1zM124,463h1V465h-1zM124,580h1V587h-1zM125,460h1V465h-1zM125,580h1V587h-1zM126,462h1V465h-1zM126,580h1V587h-1zM127,462h1V466h-1zM127,580h1V587h-1zM128,461h1V467h-1zM128,580h1V587h-1zM129,462h1V465h-1zM129,580h1V587h-1zM130,462h1V466h-1zM130,580h1V587h-1zM131,462h1V465h-1zM131,580h1V587h-1zM132,462h1V465h-1zM132,580h1V587h-1zM133,463h1V465h-1zM133,580h1V587h-1zM134,462h1V467h-1zM134,580h1V587h-1zM135,460h1V465h-1zM135,580h1V587h-1zM136,462h1V465h-1zM136,580h1V587h-1zM137,462h1V465h-1zM137,580h1V587h-1zM138,462h1V465h-1zM138,580h1V587h-1zM139,462h1V466h-1zM139,580h1V587h-1zM140,462h1V466h-1zM140,580h1V587h-1zM141,462h1V466h-1zM141,580h1V587h-1zM142,462h1V466h-1zM142,580h1V587h-1zM143,462h1V465h-1zM143,580h1V587h-1zM144,462h1V465h-1zM144,580h1V587h-1zM145,462h1V467h-1zM145,580h1V587h-1zM146,461h1V465h-1zM146,580h1V587h-1zM147,462h1V465h-1zM147,580h1V587h-1zM148,462h1V465h-1zM148,580h1V587h-1zM149,460h1V465h-1zM149,580h1V587h-1zM150,462h1V465h-1zM150,580h1V587h-1zM151,462h1V466h-1zM151,580h1V587h-1zM152,461h1V466h-1zM152,580h1V587h-1zM153,463h1V465h-1zM153,580h1V587h-1zM154,462h1V465h-1zM154,580h1V587h-1zM155,462h1V465h-1zM155,580h1V587h-1zM156,462h1V465h-1zM156,580h1V587h-1zM157,461h1V466h-1zM157,580h1V587h-1zM158,462h1V465h-1zM158,580h1V587h-1zM159,462h1V465h-1zM159,580h1V587h-1zM160,462h1V466h-1zM160,580h1V587h-1zM161,462h1V466h-1zM161,580h1V587h-1zM162,462h1V465h-1zM162,580h1V587h-1zM163,462h1V465h-1zM163,580h1V587h-1zM164,462h1V465h-1zM164,580h1V587h-1zM165,463h1V465h-1zM165,580h1V587h-1zM166,462h1V465h-1zM166,580h1V587h-1zM167,463h1V465h-1zM167,580h1V587h-1zM168,462h1V465h-1zM168,580h1V587h-1zM169,462h1V465h-1zM169,580h1V587h-1zM170,462h1V466h-1zM170,580h1V587h-1zM171,461h1V466h-1zM171,580h1V587h-1zM172,462h1V465h-1zM172,580h1V587h-1zM173,462h1V465h-1zM173,580h1V587h-1zM174,462h1V466h-1zM174,580h1V587h-1zM175,462h1V465h-1zM175,580h1V587h-1zM176,463h1V465h-1zM176,580h1V587h-1zM177,462h1V466h-1zM177,580h1V587h-1zM178,462h1V465h-1zM178,580h1V587h-1zM179,462h1V465h-1zM179,580h1V587h-1zM180,462h1V465h-1zM180,580h1V587h-1zM181,462h1V465h-1zM181,580h1V587h-1zM182,462h1V465h-1zM182,580h1V587h-1zM183,462h1V465h-1zM183,580h1V587h-1zM184,462h1V465h-1zM184,580h1V587h-1zM185,462h1V465h-1zM185,580h1V587h-1zM186,462h1V465h-1zM186,580h1V587h-1zM187,462h1V465h-1zM187,580h1V587h-1zM188,462h1V465h-1zM188,580h1V587h-1zM189,463h1V465h-1zM189,580h1V587h-1zM190,462h1V466h-1zM190,580h1V587h-1zM191,462h1V465h-1zM191,580h1V587h-1zM192,462h1V465h-1zM192,580h1V587h-1zM193,462h1V465h-1zM193,580h1V587h-1zM194,462h1V466h-1zM194,580h1V587h-1zM195,461h1V465h-1zM195,580h1V587h-1zM196,462h1V465h-1zM196,580h1V587h-1zM197,462h1V465h-1zM197,580h1V587h-1zM198,462h1V465h-1zM198,580h1V587h-1zM199,462h1V465h-1zM199,580h1V587h-1zM200,462h1V465h-1zM200,580h1V587h-1zM201,462h1V465h-1zM201,580h1V587h-1zM202,463h1V467h-1zM202,580h1V587h-1zM203,462h1V466h-1zM203,580h1V587h-1zM204,462h1V465h-1zM204,580h1V587h-1zM205,463h1V465h-1zM205,580h1V587h-1zM206,462h1V465h-1zM206,580h1V587h-1zM207,462h1V466h-1zM207,580h1V587h-1zM208,461h1V467h-1zM208,580h1V587h-1zM209,462h1V465h-1zM209,580h1V587h-1zM210,462h1V465h-1zM210,580h1V587h-1zM211,463h1V466h-1zM211,580h1V587h-1zM212,462h1V465h-1zM212,580h1V587h-1zM213,462h1V465h-1zM213,580h1V587h-1zM214,462h1V466h-1zM214,580h1V587h-1zM215,462h1V465h-1zM215,580h1V587h-1zM216,462h1V465h-1zM216,580h1V587h-1zM217,462h1V465h-1zM217,580h1V587h-1zM218,462h1V465h-1zM218,580h1V587h-1zM219,462h1V466h-1zM219,580h1V587h-1zM220,462h1V465h-1zM220,580h1V587h-1zM221,462h1V465h-1zM221,580h1V587h-1zM222,463h1V465h-1zM222,580h1V587h-1zM223,462h1V466h-1zM223,580h1V587h-1zM224,462h1V465h-1zM224,580h1V587h-1zM225,462h1V465h-1zM225,580h1V587h-1zM226,462h1V465h-1zM226,580h1V587h-1zM227,462h1V467h-1zM227,580h1V587h-1zM228,462h1V466h-1zM228,580h1V587h-1zM229,462h1V465h-1zM229,580h1V587h-1zM230,463h1V465h-1zM230,580h1V587h-1zM231,462h1V465h-1zM231,580h1V587h-1zM232,463h1V466h-1zM232,580h1V587h-1zM233,462h1V466h-1zM233,580h1V587h-1zM234,462h1V465h-1zM234,580h1V587h-1zM235,463h1V465h-1zM235,580h1V587h-1zM236,462h1V465h-1zM236,580h1V587h-1zM237,462h1V465h-1zM237,580h1V587h-1zM238,462h1V465h-1zM238,580h1V587h-1zM239,462h1V465h-1zM239,580h1V587h-1zM240,462h1V465h-1zM240,580h1V587h-1zM241,462h1V465h-1zM241,580h1V587h-1zM242,462h1V465h-1zM242,580h1V587h-1zM243,462h1V465h-1zM243,580h1V587h-1zM244,462h1V465h-1zM244,580h1V587h-1zM245,462h1V465h-1zM245,580h1V587h-1zM246,462h1V465h-1zM246,580h1V587h-1zM247,462h1V465h-1zM247,580h1V587h-1zM248,462h1V465h-1zM248,580h1V587h-1zM249,463h1V466h-1zM249,580h1V587h-1zM250,462h1V466h-1zM250,580h1V587h-1zM251,462h1V465h-1zM251,580h1V587h-1zM252,462h1V465h-1zM252,580h1V587h-1zM253,461h1V466h-1zM253,580h1V587h-1zM254,462h1V465h-1zM254,580h1V587h-1zM255,462h1V465h-1zM255,580h1V587h-1zM256,462h1V465h-1zM256,580h1V587h-1zM257,462h1V467h-1zM257,580h1V587h-1zM258,462h1V465h-1zM258,580h1V587h-1zM259,462h1V466h-1zM259,580h1V587h-1zM260,462h1V465h-1zM260,580h1V587h-1zM261,462h1V465h-1zM261,580h1V587h-1zM262,462h1V465h-1zM262,580h1V587h-1zM263,462h1V465h-1zM263,580h1V587h-1zM264,462h1V466h-1zM264,580h1V587h-1zM265,462h1V465h-1zM265,580h1V587h-1zM266,462h1V465h-1zM266,580h1V587h-1zM267,462h1V466h-1zM267,580h1V587h-1zM268,462h1V465h-1zM268,580h1V587h-1zM269,462h1V467h-1zM269,580h1V587h-1zM270,463h1V465h-1zM270,580h1V587h-1zM271,460h1V465h-1zM271,580h1V587h-1zM272,462h1V465h-1zM272,580h1V587h-1zM273,463h1V465h-1zM273,580h1V587h-1zM274,462h1V465h-1zM274,580h1V587h-1zM275,462h1V466h-1zM275,580h1V587h-1zM276,462h1V465h-1zM276,580h1V587h-1zM277,462h1V465h-1zM277,580h1V587h-1zM278,463h1V465h-1zM278,580h1V587h-1zM279,462h1V465h-1zM279,580h1V587h-1zM280,463h1V465h-1zM280,580h1V587h-1zM281,462h1V465h-1zM281,580h1V587h-1zM282,462h1V465h-1zM282,580h1V587h-1zM283,462h1V465h-1zM283,580h1V587h-1zM284,462h1V466h-1zM284,580h1V587h-1zM285,462h1V465h-1zM285,580h1V587h-1zM286,462h1V466h-1zM286,580h1V587h-1zM287,462h1V465h-1zM287,580h1V587h-1zM288,462h1V465h-1zM288,580h1V587h-1zM289,462h1V466h-1zM289,580h1V587h-1zM290,462h1V465h-1zM290,580h1V587h-1zM291,462h1V465h-1zM291,580h1V587h-1zM292,462h1V465h-1zM292,580h1V587h-1zM293,462h1V465h-1zM293,580h1V587h-1zM294,462h1V466h-1zM294,580h1V587h-1zM295,462h1V465h-1zM295,580h1V587h-1zM296,462h1V465h-1zM296,580h1V587h-1zM297,462h1V465h-1zM297,580h1V587h-1zM298,462h1V465h-1zM298,580h1V587h-1zM299,463h1V465h-1zM299,580h1V587h-1zM300,460h1V467h-1zM300,580h1V587h-1zM301,462h1V465h-1zM301,580h1V587h-1zM302,462h1V465h-1zM302,580h1V587h-1zM303,461h1V466h-1zM303,580h1V587h-1zM304,462h1V465h-1zM304,580h1V587h-1zM305,462h1V465h-1zM305,580h1V587h-1zM306,460h1V465h-1zM306,580h1V587h-1zM307,462h1V465h-1zM307,580h1V587h-1zM308,580h1V587h-1zM312,580h1V587h-1zM313,580h1V587h-1zM314,580h1V587h-1zM315,580h1V587h-1zM316,580h1V587h-1zM317,580h1V587h-1zM318,580h1V587h-1zM319,580h1V587h-1zM320,580h1V587h-1zM321,580h1V587h-1zM322,580h1V587h-1zM323,580h1V587h-1zM324,580h1V587h-1zM325,462h1V465h-1zM325,580h1V587h-1zM326,462h1V465h-1zM326,580h1V587h-1zM327,460h1V465h-1zM327,580h1V587h-1zM328,462h1V465h-1zM328,580h1V587h-1zM329,461h1V465h-1zM329,580h1V587h-1zM330,462h1V465h-1zM330,580h1V587h-1zM331,462h1V465h-1zM331,580h1V587h-1zM332,462h1V465h-1zM332,580h1V587h-1zM333,463h1V465h-1zM333,580h1V587h-1zM334,460h1V465h-1zM334,580h1V587h-1zM335,462h1V465h-1zM335,580h1V587h-1zM336,462h1V465h-1zM336,580h1V587h-1zM337,463h1V465h-1zM337,580h1V587h-1zM338,462h1V466h-1zM338,580h1V587h-1zM339,462h1V465h-1zM339,580h1V587h-1zM340,462h1V465h-1zM340,580h1V587h-1zM341,462h1V465h-1zM341,580h1V587h-1zM342,462h1V465h-1zM342,580h1V587h-1zM343,462h1V465h-1zM343,580h1V587h-1zM344,461h1V465h-1zM344,580h1V587h-1zM345,462h1V465h-1zM345,580h1V587h-1zM346,463h1V465h-1zM346,580h1V587h-1zM347,463h1V465h-1zM347,580h1V587h-1zM348,462h1V465h-1zM348,580h1V587h-1zM349,462h1V465h-1zM349,580h1V587h-1zM350,460h1V465h-1zM350,580h1V587h-1zM351,462h1V467h-1zM351,580h1V587h-1zM352,462h1V465h-1zM352,580h1V587h-1zM353,462h1V465h-1zM353,580h1V587h-1zM354,462h1V465h-1zM354,580h1V587h-1zM355,462h1V465h-1zM355,580h1V587h-1zM356,463h1V465h-1zM356,580h1V587h-1zM357,463h1V466h-1zM357,580h1V587h-1zM358,461h1V465h-1zM358,580h1V587h-1zM359,462h1V466h-1zM359,580h1V587h-1zM360,462h1V465h-1zM360,580h1V587h-1zM361,462h1V465h-1zM361,580h1V587h-1zM362,463h1V466h-1zM362,580h1V587h-1zM363,462h1V465h-1zM363,580h1V587h-1zM364,462h1V465h-1zM364,580h1V587h-1zM365,463h1V466h-1zM365,580h1V587h-1zM366,462h1V465h-1zM366,580h1V587h-1zM367,462h1V467h-1zM367,580h1V587h-1zM368,462h1V465h-1zM368,580h1V587h-1zM369,462h1V465h-1zM369,580h1V587h-1zM373,580h1V587h-1zM374,580h1V587h-1zM375,580h1V587h-1zM376,580h1V587h-1zM377,580h1V587h-1zM378,580h1V587h-1zM379,580h1V587h-1zM380,580h1V587h-1zM381,580h1V587h-1zM382,580h1V587h-1zM383,462h1V465h-1zM383,580h1V587h-1zM384,462h1V465h-1zM384,580h1V587h-1zM385,462h1V465h-1zM385,580h1V587h-1zM386,462h1V465h-1zM386,580h1V587h-1zM387,462h1V465h-1zM387,580h1V587h-1zM388,462h1V465h-1zM388,580h1V587h-1zM389,462h1V465h-1zM389,580h1V587h-1zM390,462h1V466h-1zM390,580h1V587h-1zM391,462h1V466h-1zM391,580h1V587h-1zM392,462h1V465h-1zM392,580h1V587h-1zM393,463h1V465h-1zM393,580h1V587h-1zM394,462h1V465h-1zM394,580h1V587h-1zM395,462h1V466h-1zM395,580h1V587h-1zM396,463h1V466h-1zM396,580h1V587h-1zM397,462h1V466h-1zM397,580h1V587h-1zM398,462h1V465h-1zM398,580h1V587h-1zM399,462h1V465h-1zM399,580h1V587h-1zM400,462h1V465h-1zM400,580h1V587h-1zM401,462h1V465h-1zM401,580h1V587h-1zM402,462h1V465h-1zM402,580h1V587h-1zM403,461h1V466h-1zM403,580h1V587h-1zM404,460h1V465h-1zM404,580h1V587h-1zM405,462h1V465h-1zM405,580h1V587h-1zM406,462h1V465h-1zM406,580h1V587h-1zM407,462h1V465h-1zM407,580h1V587h-1zM408,462h1V465h-1zM408,580h1V587h-1zM409,462h1V467h-1zM409,580h1V587h-1zM410,462h1V466h-1zM410,580h1V587h-1zM411,462h1V467h-1zM411,580h1V587h-1zM412,462h1V465h-1zM412,580h1V587h-1zM413,462h1V465h-1zM413,580h1V587h-1zM414,462h1V465h-1zM414,580h1V587h-1zM421,580h1V587h-1zM422,580h1V587h-1zM423,580h1V587h-1zM424,580h1V587h-1zM425,580h1V587h-1zM426,580h1V587h-1zM427,580h1V587h-1zM428,580h1V587h-1zM429,580h1V587h-1zM430,461h1V465h-1zM430,580h1V587h-1zM431,462h1V465h-1zM431,580h1V587h-1zM432,462h1V465h-1zM432,580h1V587h-1zM433,463h1V466h-1zM433,580h1V587h-1zM434,463h1V465h-1zM434,580h1V587h-1zM435,462h1V465h-1zM435,580h1V587h-1zM436,462h1V466h-1zM436,580h1V587h-1zM437,462h1V465h-1zM437,580h1V587h-1zM438,462h1V467h-1zM438,580h1V587h-1zM439,462h1V465h-1zM439,580h1V587h-1zM440,462h1V465h-1zM440,580h1V587h-1zM441,463h1V465h-1zM441,580h1V587h-1zM442,462h1V465h-1zM442,580h1V587h-1zM443,462h1V465h-1zM443,580h1V587h-1zM444,462h1V465h-1zM444,580h1V587h-1zM445,462h1V467h-1zM445,580h1V587h-1zM446,462h1V465h-1zM446,580h1V587h-1zM447,462h1V467h-1zM447,580h1V587h-1zM448,462h1V465h-1zM448,580h1V587h-1zM449,462h1V465h-1zM449,580h1V587h-1zM450,462h1V467h-1zM450,580h1V587h-1zM451,462h1V465h-1zM451,580h1V587h-1zM452,462h1V465h-1zM452,580h1V587h-1zM453,462h1V465h-1zM453,580h1V587h-1zM454,462h1V465h-1zM454,580h1V587h-1zM455,461h1V465h-1zM455,580h1V587h-1zM456,462h1V465h-1zM456,580h1V587h-1zM457,462h1V465h-1zM457,580h1V587h-1zM458,462h1V465h-1zM458,580h1V587h-1zM459,462h1V465h-1zM459,580h1V587h-1zM460,463h1V465h-1zM460,580h1V587h-1zM461,462h1V466h-1zM461,580h1V587h-1zM462,462h1V465h-1zM462,580h1V587h-1zM463,462h1V465h-1zM463,580h1V587h-1zM464,462h1V465h-1zM464,580h1V587h-1zM465,462h1V465h-1zM465,580h1V587h-1zM466,463h1V465h-1zM466,580h1V587h-1zM467,462h1V465h-1zM467,580h1V587h-1zM468,462h1V466h-1zM468,580h1V587h-1zM469,462h1V465h-1zM469,580h1V587h-1zM470,463h1V466h-1zM470,580h1V587h-1zM471,462h1V467h-1zM471,580h1V587h-1zM472,462h1V465h-1zM472,580h1V587h-1zM473,462h1V465h-1zM473,580h1V587h-1zM474,462h1V465h-1zM474,580h1V587h-1zM475,462h1V465h-1zM475,580h1V587h-1zM476,462h1V467h-1zM476,580h1V587h-1zM477,462h1V466h-1zM477,580h1V587h-1zM478,462h1V465h-1zM478,580h1V587h-1zM479,462h1V466h-1zM479,580h1V587h-1zM480,462h1V465h-1zM480,580h1V587h-1zM481,462h1V465h-1zM481,580h1V587h-1zM482,462h1V465h-1zM482,580h1V587h-1zM483,461h1V465h-1zM483,580h1V587h-1zM484,462h1V465h-1zM484,580h1V587h-1zM485,463h1V465h-1zM485,580h1V587h-1zM486,462h1V465h-1zM486,580h1V587h-1zM487,462h1V465h-1zM487,580h1V587h-1zM488,462h1V466h-1zM488,580h1V587h-1zM489,462h1V465h-1zM489,580h1V587h-1zM490,460h1V467h-1zM490,580h1V587h-1zM491,462h1V465h-1zM491,580h1V587h-1zM492,462h1V465h-1zM492,580h1V587h-1zM493,462h1V465h-1zM493,580h1V587h-1zM494,462h1V465h-1zM494,580h1V587h-1zM495,462h1V465h-1zM495,580h1V587h-1zM496,462h1V465h-1zM496,580h1V587h-1zM497,462h1V465h-1zM497,580h1V587h-1zM498,462h1V465h-1zM498,580h1V587h-1zM499,462h1V465h-1zM499,580h1V587h-1zM500,462h1V465h-1zM500,580h1V587h-1zM501,462h1V465h-1zM501,580h1V587h-1zM502,462h1V467h-1zM502,580h1V587h-1zM503,462h1V465h-1zM503,580h1V587h-1zM504,462h1V465h-1zM504,580h1V587h-1zM505,462h1V466h-1zM505,580h1V587h-1zM506,462h1V465h-1zM506,580h1V587h-1zM507,462h1V465h-1zM507,580h1V587h-1zM508,462h1V465h-1zM508,580h1V587h-1zM509,462h1V465h-1zM509,580h1V587h-1zM510,462h1V465h-1zM510,580h1V587h-1zM511,462h1V466h-1zM511,580h1V587h-1zM512,462h1V465h-1zM512,580h1V587h-1zM513,462h1V467h-1zM513,580h1V587h-1zM514,462h1V465h-1zM514,580h1V587h-1zM515,461h1V465h-1zM515,580h1V587h-1zM516,462h1V465h-1zM516,580h1V587h-1zM517,462h1V465h-1zM517,580h1V587h-1zM518,462h1V465h-1zM518,580h1V587h-1zM519,462h1V465h-1zM519,580h1V587h-1zM520,462h1V466h-1zM520,580h1V587h-1zM521,462h1V466h-1zM521,580h1V587h-1zM522,462h1V466h-1zM522,580h1V587h-1zM523,462h1V465h-1zM523,580h1V587h-1zM524,462h1V465h-1zM524,580h1V587h-1zM525,462h1V465h-1zM525,580h1V587h-1zM526,462h1V465h-1zM526,580h1V587h-1zM527,462h1V466h-1zM527,580h1V587h-1zM528,462h1V465h-1zM528,580h1V587h-1zM529,462h1V465h-1zM529,580h1V587h-1zM530,462h1V465h-1zM530,580h1V587h-1zM531,462h1V465h-1zM531,580h1V587h-1zM532,462h1V465h-1zM532,580h1V587h-1zM533,463h1V465h-1zM533,580h1V587h-1zM534,462h1V465h-1zM534,580h1V587h-1zM535,462h1V465h-1zM535,580h1V587h-1zM536,462h1V465h-1zM536,580h1V587h-1zM537,462h1V466h-1zM537,580h1V587h-1zM538,462h1V465h-1zM538,580h1V587h-1zM539,462h1V465h-1zM539,580h1V587h-1zM540,462h1V466h-1zM540,580h1V587h-1zM541,462h1V465h-1zM541,580h1V587h-1zM542,462h1V466h-1zM542,580h1V587h-1zM543,461h1V466h-1zM543,580h1V587h-1zM544,462h1V465h-1zM544,580h1V587h-1zM545,463h1V465h-1zM545,580h1V587h-1zM546,462h1V465h-1zM546,580h1V587h-1zM547,462h1V466h-1zM547,580h1V587h-1zM548,460h1V465h-1zM548,580h1V587h-1zM549,463h1V465h-1zM549,580h1V587h-1zM550,460h1V466h-1zM550,580h1V587h-1zM551,462h1V465h-1zM551,580h1V587h-1zM552,462h1V465h-1zM552,580h1V587h-1zM553,462h1V465h-1zM553,580h1V587h-1zM554,462h1V465h-1zM554,580h1V587h-1zM561,580h1V587h-1zM562,580h1V587h-1zM563,580h1V587h-1zM564,580h1V587h-1zM572,580h1V587h-1zM573,580h1V587h-1zM574,580h1V587h-1zM575,580h1V587h-1zM576,580h1V587h-1zM577,580h1V587h-1zM578,580h1V587h-1zM579,580h1V587h-1zM580,462h1V465h-1zM580,580h1V587h-1zM581,462h1V466h-1zM581,580h1V587h-1zM582,462h1V465h-1zM582,580h1V587h-1zM583,462h1V465h-1zM583,580h1V587h-1zM584,462h1V467h-1zM584,580h1V587h-1zM585,462h1V466h-1zM585,580h1V587h-1zM586,462h1V465h-1zM586,580h1V587h-1zM591,580h1V587h-1zM592,580h1V587h-1zM593,580h1V587h-1zM594,580h1V587h-1zM595,580h1V587h-1zM596,580h1V587h-1zM597,580h1V587h-1zM598,580h1V587h-1zM599,580h1V587h-1zM600,580h1V587h-1zM601,580h1V587h-1zM602,580h1V587h-1zM603,580h1V587h-1zM604,462h1V467h-1zM604,580h1V587h-1zM605,463h1V467h-1zM605,580h1V587h-1zM606,463h1V465h-1zM606,580h1V587h-1zM607,462h1V465h-1zM607,580h1V587h-1zM608,462h1V465h-1zM608,580h1V587h-1zM609,463h1V466h-1zM609,580h1V587h-1zM610,462h1V465h-1zM610,580h1V587h-1zM611,463h1V465h-1zM611,580h1V587h-1zM612,463h1V465h-1zM612,580h1V587h-1zM613,462h1V465h-1zM613,580h1V587h-1zM614,461h1V465h-1zM614,580h1V587h-1zM615,460h1V466h-1zM615,580h1V587h-1zM616,461h1V465h-1zM616,580h1V587h-1zM617,462h1V465h-1zM617,580h1V587h-1zM618,462h1V465h-1zM618,580h1V587h-1zM619,462h1V465h-1zM619,580h1V587h-1zM620,462h1V465h-1zM620,580h1V587h-1zM621,462h1V466h-1zM621,580h1V587h-1zM622,463h1V466h-1zM622,580h1V587h-1zM623,462h1V467h-1zM623,580h1V587h-1zM624,460h1V465h-1zM624,580h1V587h-1zM625,462h1V465h-1zM625,580h1V587h-1zM626,462h1V466h-1zM626,580h1V587h-1zM627,462h1V465h-1zM627,580h1V587h-1zM628,462h1V467h-1zM628,580h1V587h-1zM629,462h1V465h-1zM629,580h1V587h-1zM630,462h1V465h-1zM630,580h1V587h-1zM631,462h1V465h-1zM631,580h1V587h-1zM632,462h1V465h-1zM632,580h1V587h-1zM633,462h1V465h-1zM633,580h1V587h-1zM634,462h1V466h-1zM634,580h1V587h-1zM635,462h1V465h-1zM635,580h1V587h-1zM636,462h1V465h-1zM636,580h1V587h-1zM637,463h1V465h-1zM637,580h1V587h-1zM638,462h1V466h-1zM638,580h1V587h-1zM639,462h1V465h-1zM639,580h1V587h-1zM640,462h1V465h-1zM640,580h1V587h-1zM641,462h1V465h-1zM641,580h1V587h-1zM642,462h1V465h-1zM642,580h1V587h-1zM643,462h1V465h-1zM643,580h1V587h-1zM644,462h1V465h-1zM644,580h1V587h-1zM645,462h1V465h-1zM645,580h1V587h-1zM646,463h1V465h-1zM646,580h1V587h-1zM647,463h1V465h-1zM647,580h1V587h-1zM648,462h1V465h-1zM648,580h1V587h-1zM649,462h1V465h-1zM649,580h1V587h-1zM650,463h1V465h-1zM650,580h1V587h-1zM651,462h1V465h-1zM651,580h1V587h-1zM652,462h1V466h-1zM652,580h1V587h-1zM653,462h1V465h-1zM653,580h1V587h-1zM654,462h1V467h-1zM654,580h1V587h-1zM655,462h1V465h-1zM655,580h1V587h-1zM656,462h1V465h-1zM656,580h1V587h-1zM657,462h1V466h-1zM657,580h1V587h-1zM658,462h1V467h-1zM658,580h1V587h-1zM659,462h1V465h-1zM659,580h1V587h-1zM660,462h1V465h-1zM660,580h1V587h-1zM661,462h1V465h-1zM661,580h1V587h-1zM662,462h1V465h-1zM662,580h1V587h-1zM663,463h1V465h-1zM663,580h1V587h-1zM664,462h1V465h-1zM664,580h1V587h-1zM665,463h1V465h-1zM665,580h1V587h-1zM666,460h1V465h-1zM666,580h1V587h-1zM667,462h1V466h-1zM667,580h1V587h-1zM668,462h1V465h-1zM668,580h1V587h-1zM669,462h1V465h-1zM669,580h1V587h-1zM670,462h1V465h-1zM670,580h1V587h-1zM671,462h1V465h-1zM671,580h1V587h-1zM672,462h1V465h-1zM672,580h1V587h-1zM673,462h1V465h-1zM673,580h1V587h-1zM674,462h1V465h-1zM674,580h1V587h-1zM675,462h1V466h-1zM675,580h1V587h-1zM676,462h1V465h-1zM676,580h1V587h-1zM677,462h1V465h-1zM677,580h1V587h-1zM678,462h1V465h-1zM678,580h1V587h-1zM679,462h1V465h-1zM679,580h1V587h-1zM680,462h1V466h-1zM680,580h1V587h-1zM681,463h1V466h-1zM681,580h1V587h-1zM682,462h1V466h-1zM682,580h1V587h-1zM683,462h1V465h-1zM683,580h1V587h-1zM684,462h1V465h-1zM684,580h1V587h-1zM685,463h1V465h-1zM685,580h1V587h-1zM686,462h1V465h-1zM686,580h1V587h-1zM687,462h1V465h-1zM687,580h1V587h-1zM688,462h1V465h-1zM688,580h1V587h-1zM689,462h1V465h-1zM689,580h1V587h-1zM690,462h1V467h-1zM690,580h1V587h-1zM691,462h1V465h-1zM691,580h1V587h-1zM692,462h1V465h-1zM692,580h1V587h-1zM693,460h1V465h-1zM693,580h1V587h-1zM694,462h1V467h-1zM694,580h1V587h-1zM695,462h1V465h-1zM695,580h1V587h-1zM696,462h1V466h-1zM696,580h1V587h-1zM697,462h1V465h-1zM697,580h1V587h-1zM698,461h1V465h-1zM698,580h1V587h-1zM699,462h1V465h-1zM699,580h1V587h-1zM700,462h1V466h-1zM700,580h1V587h-1zM701,462h1V466h-1zM701,580h1V587h-1zM702,462h1V465h-1zM702,580h1V587h-1zM703,462h1V465h-1zM703,580h1V587h-1zM704,462h1V466h-1zM704,580h1V587h-1zM705,462h1V465h-1zM705,580h1V587h-1zM706,463h1V465h-1zM706,580h1V587h-1zM707,462h1V465h-1zM707,580h1V587h-1zM708,462h1V465h-1zM708,580h1V587h-1zM709,462h1V466h-1zM709,580h1V587h-1zM710,462h1V465h-1zM710,580h1V587h-1zM711,462h1V465h-1zM711,580h1V587h-1zM712,463h1V465h-1zM712,580h1V587h-1zM713,462h1V465h-1zM713,580h1V587h-1zM714,462h1V465h-1zM714,580h1V587h-1zM715,460h1V465h-1zM715,580h1V587h-1zM716,462h1V465h-1zM716,580h1V587h-1zM717,460h1V466h-1zM717,580h1V587h-1zM718,462h1V465h-1zM718,580h1V587h-1zM719,462h1V465h-1zM719,580h1V587h-1zM720,462h1V466h-1zM720,580h1V587h-1zM721,462h1V465h-1zM721,580h1V587h-1zM722,462h1V465h-1zM722,580h1V587h-1zM723,462h1V466h-1zM723,580h1V587h-1zM724,463h1V466h-1zM724,580h1V587h-1zM725,463h1V467h-1zM725,580h1V587h-1zM726,462h1V465h-1zM726,580h1V587h-1zM727,463h1V465h-1zM727,580h1V587h-1zM728,463h1V465h-1zM728,580h1V587h-1zM729,462h1V465h-1zM729,580h1V587h-1zM730,461h1V465h-1zM730,580h1V587h-1zM731,462h1V466h-1zM731,580h1V587h-1zM732,462h1V465h-1zM732,580h1V587h-1zM733,463h1V465h-1zM733,580h1V587h-1zM734,462h1V465h-1zM734,580h1V587h-1zM735,462h1V465h-1zM735,580h1V587h-1zM740,460h1V465h-1zM740,580h1V587h-1zM741,462h1V465h-1zM741,580h1V587h-1zM742,462h1V465h-1zM742,580h1V587h-1zM743,462h1V465h-1zM743,580h1V587h-1zM744,462h1V465h-1zM744,580h1V587h-1zM745,462h1V465h-1zM745,580h1V587h-1zM746,462h1V465h-1zM746,580h1V587h-1zM747,462h1V465h-1zM747,580h1V587h-1zM748,463h1V465h-1zM748,580h1V587h-1zM749,462h1V465h-1zM749,580h1V587h-1zM750,462h1V465h-1zM750,580h1V587h-1zM751,462h1V466h-1zM751,580h1V587h-1zM752,462h1V465h-1zM752,580h1V587h-1zM753,463h1V465h-1zM753,580h1V587h-1zM754,462h1V466h-1zM754,580h1V587h-1zM755,462h1V465h-1zM755,580h1V587h-1zM756,462h1V465h-1zM756,580h1V587h-1zM757,462h1V465h-1zM757,580h1V587h-1zM758,462h1V466h-1zM758,580h1V587h-1zM759,462h1V465h-1zM759,580h1V587h-1zM760,462h1V465h-1zM760,580h1V587h-1zM761,462h1V465h-1zM761,580h1V587h-1zM762,462h1V465h-1zM762,580h1V587h-1zM763,463h1V465h-1zM763,580h1V587h-1zM764,462h1V465h-1zM764,580h1V587h-1zM765,460h1V466h-1zM765,580h1V587h-1zM766,462h1V465h-1zM766,580h1V587h-1zM767,462h1V465h-1zM767,580h1V587h-1zM768,463h1V465h-1zM768,580h1V587h-1zM769,462h1V465h-1zM769,580h1V587h-1zM770,463h1V465h-1zM770,580h1V587h-1zM771,461h1V466h-1zM771,580h1V587h-1zM772,462h1V465h-1zM772,580h1V587h-1zM773,462h1V465h-1zM773,580h1V587h-1zM774,462h1V465h-1zM774,580h1V587h-1zM775,462h1V466h-1zM775,580h1V587h-1zM776,462h1V465h-1zM776,580h1V587h-1zM777,462h1V465h-1zM777,580h1V587h-1zM778,463h1V467h-1zM778,580h1V587h-1zM779,462h1V465h-1zM779,580h1V587h-1zM780,463h1V465h-1zM780,580h1V587h-1zM781,462h1V465h-1zM781,580h1V587h-1zM782,462h1V465h-1zM782,580h1V587h-1zM783,463h1V466h-1zM783,580h1V587h-1zM784,462h1V465h-1zM784,580h1V587h-1zM785,463h1V465h-1zM785,580h1V587h-1zM786,462h1V465h-1zM786,580h1V587h-1zM787,462h1V466h-1zM787,580h1V587h-1zM788,462h1V466h-1zM788,580h1V587h-1zM789,462h1V465h-1zM789,580h1V587h-1zM790,462h1V465h-1zM790,580h1V587h-1zM791,463h1V466h-1zM791,580h1V587h-1zM792,462h1V465h-1zM792,580h1V587h-1zM793,462h1V466h-1zM793,580h1V587h-1zM794,462h1V465h-1zM794,580h1V587h-1zM795,462h1V465h-1zM795,580h1V587h-1zM796,462h1V466h-1zM796,580h1V587h-1zM797,462h1V467h-1zM797,580h1V587h-1zM798,462h1V465h-1zM798,580h1V587h-1zM799,463h1V465h-1zM799,580h1V587h-1zM800,462h1V465h-1zM800,580h1V587h-1zM801,463h1V465h-1zM801,580h1V587h-1zM802,462h1V465h-1zM802,580h1V587h-1zM803,462h1V465h-1zM803,580h1V587h-1zM804,462h1V465h-1zM804,580h1V587h-1zM805,462h1V465h-1zM805,580h1V587h-1zM806,462h1V467h-1zM806,580h1V587h-1zM807,462h1V465h-1zM807,580h1V587h-1zM808,463h1V466h-1zM808,580h1V587h-1zM809,463h1V465h-1zM809,580h1V587h-1zM810,462h1V466h-1zM810,580h1V587h-1zM811,462h1V465h-1zM811,580h1V587h-1zM812,462h1V466h-1zM812,580h1V587h-1zM813,462h1V465h-1zM813,580h1V587h-1zM814,462h1V465h-1zM814,580h1V587h-1zM815,462h1V465h-1zM815,580h1V587h-1zM816,462h1V466h-1zM816,580h1V587h-1zM817,462h1V465h-1zM817,580h1V587h-1zM818,462h1V466h-1zM818,580h1V587h-1zM819,462h1V465h-1zM819,580h1V587h-1zM820,462h1V465h-1zM820,580h1V587h-1zM821,462h1V466h-1zM821,580h1V587h-1zM822,462h1V467h-1zM822,580h1V587h-1zM823,462h1V466h-1zM823,580h1V587h-1zM824,462h1V465h-1zM824,580h1V587h-1zM825,461h1V465h-1zM825,580h1V587h-1zM826,462h1V465h-1zM826,580h1V587h-1zM827,464.2h1V509.9h-1zM827,580h1V587h-1zM828,462.2h1V511.3h-1zM828,580h1V587h-1zM829,463.6h1V512.2h-1zM829,580h1V587h-1zM830,463.6h1V510.9h-1zM830,580h1V587h-1zM831,463.6h1V510.4h-1zM831,580h1V587h-1zM832,463.8h1V511.3h-1zM832,580h1V587h-1zM833,463.3h1V512.3h-1zM833,580h1V587h-1zM834,464.2h1V510.2h-1zM834,580h1V587h-1zM835,463.1h1V511.4h-1zM835,580h1V587h-1zM836,463.6h1V511.3h-1zM836,580h1V587h-1zM837,462.4h1V511.3h-1zM837,580h1V587h-1zM844,464h1V518.4h-1zM844,580h1V587h-1zM845,464.3h1V518.9h-1zM845,580h1V587h-1zM846,463.5h1V518.5h-1zM846,580h1V587h-1zM847,462.7h1V518.5h-1zM847,580h1V587h-1zM848,463.7h1V519.6h-1zM848,580h1V587h-1zM849,463.7h1V520.2h-1zM849,580h1V587h-1zM850,463.2h1V519.6h-1zM850,580h1V587h-1zM851,462.9h1V518.7h-1zM851,580h1V587h-1zM852,462.5h1V520.7h-1zM852,580h1V587h-1zM853,463.4h1V520.1h-1zM853,580h1V587h-1zM854,464.1h1V519.4h-1zM854,580h1V587h-1zM855,463.6h1V519.7h-1zM855,580h1V587h-1zM856,462.8h1V520.2h-1zM856,580h1V587h-1zM857,462.8h1V520.2h-1zM857,580h1V587h-1zM858,462.9h1V518.8h-1zM858,580h1V587h-1zM859,464.8h1V519.5h-1zM859,580h1V587h-1zM860,465.1h1V520.2h-1zM860,580h1V587h-1zM861,463.2h1V518.3h-1zM861,580h1V587h-1zM862,464.5h1V518.4h-1zM862,580h1V587h-1zM863,463.6h1V520.2h-1zM863,580h1V587h-1zM864,463h1V518.8h-1zM864,580h1V587h-1zM865,463.6h1V518.8h-1zM865,580h1V587h-1zM866,463.3h1V518.9h-1zM866,580h1V587h-1zM867,462.9h1V520.3h-1zM867,580h1V587h-1zM868,462.8h1V519.7h-1zM868,580h1V587h-1zM869,462.8h1V519.8h-1zM869,580h1V587h-1zM870,463.1h1V520.1h-1zM870,580h1V587h-1zM871,463.1h1V519.4h-1zM871,580h1V587h-1zM872,462.7h1V520.2h-1zM872,580h1V587h-1zM873,462.6h1V520.4h-1zM873,580h1V587h-1zM874,463.3h1V520.3h-1zM874,580h1V587h-1zM875,462.8h1V519.7h-1zM875,580h1V587h-1zM876,461.8h1V519.5h-1zM876,580h1V587h-1zM877,463.9h1V519.3h-1zM877,580h1V587h-1zM878,463.9h1V518.6h-1zM878,580h1V587h-1zM879,463h1V519.5h-1zM879,580h1V587h-1zM880,463.4h1V520.2h-1zM880,580h1V587h-1zM881,464.6h1V520.6h-1zM881,580h1V587h-1zM882,465.2h1V518.3h-1zM882,580h1V587h-1zM883,463.9h1V519.7h-1zM883,580h1V587h-1zM884,464.5h1V519.3h-1zM884,580h1V587h-1zM885,463.4h1V520.6h-1zM885,580h1V587h-1zM886,462.4h1V518.9h-1zM886,580h1V587h-1zM887,463.9h1V519.1h-1zM887,580h1V587h-1zM888,463.3h1V520.5h-1zM888,580h1V587h-1zM889,464.5h1V519.3h-1zM889,580h1V587h-1zM890,462.8h1V519h-1zM890,580h1V587h-1zM891,465.2h1V519.7h-1zM891,580h1V587h-1zM892,463h1V519.4h-1zM892,580h1V587h-1zM893,464.2h1V519.9h-1zM893,580h1V587h-1zM894,464.1h1V518.3h-1zM894,580h1V587h-1z" fill="#0000ff" shape-rendering="crispEdges"/><path d="M62,465h1V580h-1zM63,465h1V580h-1zM64,465h1V580h-1zM65,466h1V580h-1zM66,465h1V580h-1zM67,465h1V580h-1zM68,465h1V580h-1zM69,465h1V580h-1zM70,465h1V580h-1zM71,466h1V580h-1zM72,465h1V580h-1zM73,465h1V580h-1zM74,465h1V580h-1zM75,466h1V580h-1zM76,465h1V580h-1zM77,466h1V580h-1zM78,465h1V580h-1zM79,465h1V580h-1zM80,465h1V580h-1zM81,465h1V580h-1zM82,465h1V580h-1zM83,466h1V580h-1zM84,465h1V580h-1zM85,465h1V580h-1zM86,466h1V580h-1zM87,465h1V580h-1zM88,465h1V580h-1zM89,466h1V580h-1zM90,465h1V580h-1zM91,465h1V580h-1zM92,465h1V580h-1zM93,466h1V580h-1zM94,465h1V580h-1zM95,466h1V580h-1zM96,467h1V580h-1zM97,465h1V580h-1zM98,465h1V580h-1zM99,466h1V580h-1zM100,465h1V580h-1zM101,466h1V580h-1zM102,465h1V580h-1zM103,465h1V580h-1zM104,465h1V580h-1zM105,465h1V580h-1zM106,467h1V580h-1zM107,465h1V580h-1zM108,466h1V580h-1zM109,465h1V580h-1zM110,465h1V580h-1zM111,465h1V580h-1zM112,465h1V580h-1zM113,465h1V580h-1zM114,465h1V580h-1zM115,465h1V580h-1zM116,465h1V580h-1zM117,465h1V580h-1zM118,466h1V580h-1zM119,465h1V580h-1zM120,466h1V580h-1zM121,465h1V580h-1zM122,465h1V580h-1zM123,465h1V580h-1zM124,465h1V580h-1zM125,465h1V580h-1zM126,465h1V580h-1zM127,466h1V580h-1zM128,467h1V580h-1zM129,465h1V580h-1zM130,466h1V580h-1zM131,465h1V580h-1zM132,465h1V580h-1zM133,465h1V580h-1zM134,467h1V580h-1zM135,465h1V580h-1zM136,465h1V580h-1zM137,465h1V580h-1zM138,465h1V580h-1zM139,466h1V580h-1zM140,466h1V580h-1zM141,466h1V580h-1zM142,466h1V580h-1zM143,465h1V580h-1zM144,465h1V580h-1zM145,467h1V580h-1zM146,465h1V580h-1zM147,465h1V580h-1zM148,465h1V580h-1zM149,465h1V580h-1zM150,465h1V580h-1zM151,466h1V580h-1zM152,466h1V580h-1zM153,465h1V580h-1zM154,465h1V580h-1zM155,465h1V580h-1zM156,465h1V580h-1zM157,466h1V580h-1zM158,465h1V580h-1zM159,465h1V580h-1zM160,466h1V580h-1zM161,466h1V580h-1zM162,465h1V580h-1zM163,465h1V580h-1zM164,465h1V580h-1zM165,465h1V580h-1zM166,465h1V580h-1zM167,465h1V580h-1zM168,465h1V580h-1zM169,465h1V580h-1zM170,466h1V580h-1zM171,466h1V580h-1zM172,465h1V580h-1zM173,465h1V580h-1zM174,466h1V580h-1zM175,465h1V580h-1zM176,465h1V580h-1zM177,466h1V580h-1zM178,465h1V580h-1zM179,465h1V580h-1zM180,465h1V580h-1zM181,465h1V580h-1zM182,465h1V580h-1zM183,465h1V580h-1zM184,465h1V580h-1zM185,465h1V580h-1zM186,465h1V580h-1zM187,465h1V580h-1zM188,465h1V580h-1zM189,465h1V580h-1zM190,466h1V580h-1zM191,465h1V580h-1zM192,465h1V580h-1zM193,465h1V580h-1zM194,466h1V580h-1zM195,465h1V580h-1zM196,465h1V580h-1zM197,465h1V580h-1zM198,465h1V580h-1zM199,465h1V580h-1zM200,465h1V580h-1zM201,465h1V580h-1zM202,467h1V580h-1zM203,466h1V580h-1zM204,465h1V580h-1zM205,465h1V580h-1zM206,465h1V580h-1zM207,466h1V580h-1zM208,467h1V580h-1zM209,465h1V580h-1zM210,465h1V580h-1zM211,466h1V580h-1zM212,465h1V580h-1zM213,465h1V580h-1zM214,466h1V580h-1zM215,465h1V580h-1zM216,465h1V580h-1zM217,465h1V580h-1zM218,465h1V580h-1zM219,466h1V580h-1zM220,465h1V580h-1zM221,465h1V580h-1zM222,465h1V580h-1zM223,466h1V580h-1zM224,465h1V580h-1zM225,465h1V580h-1zM226,465h1V580h-1zM227,467h1V580h-1zM228,466h1V580h-1zM229,465h1V580h-1zM230,465h1V580h-1zM231,465h1V580h-1zM232,466h1V580h-1zM233,466h1V580h-1zM234,465h1V580h-1zM235,465h1V580h-1zM236,465h1V580h-1zM237,465h1V580h-1zM238,465h1V580h-1zM239,465h1V580h-1zM240,465h1V580h-1zM241,465h1V580h-1zM242,465h1V580h-1zM243,465h1V580h-1zM244,465h1V580h-1zM245,465h1V580h-1zM246,465h1V580h-1zM247,465h1V580h-1zM248,465h1V580h-1zM249,466h1V580h-1zM250,466h1V580h-1zM251,465h1V580h-1zM252,465h1V580h-1zM253,466h1V580h-1zM254,465h1V580h-1zM255,465h1V580h-1zM256,465h1V580h-1zM257,467h1V580h-1zM258,465h1V580h-1zM259,466h1V580h-1zM260,465h1V580h-1zM261,465h1V580h-1zM262,465h1V580h-1zM263,465h1V580h-1zM264,466h1V580h-1zM265,465h1V580h-1zM266,465h1V580h-1zM267,466h1V580h-1zM268,465h1V580h-1zM269,467h1V580h-1zM270,465h1V580h-1zM271,465h1V580h-1zM272,465h1V580h-1zM273,465h1V580h-1zM274,465h1V580h-1zM275,466h1V580h-1zM276,465h1V580h-1zM277,465h1V580h-1zM278,465h1V580h-1zM279,465h1V580h-1zM280,465h1V580h-1zM281,465h1V580h-1zM282,465h1V580h-1zM283,465h1V580h-1zM284,466h1V580h-1zM285,465h1V580h-1zM286,466h1V580h-1zM287,465h1V580h-1zM288,465h1V580h-1zM289,466h1V580h-1zM290,465h1V580h-1zM291,465h1V580h-1zM292,465h1V580h-1zM293,465h1V580h-1zM294,466h1V580h-1zM295,465h1V580h-1zM296,465h1V580h-1zM297,465h1V580h-1zM298,465h1V580h-1zM299,465h1V580h-1zM300,467h1V580h-1zM301,465h1V580h-1zM302,465h1V580h-1zM303,466h1V580h-1zM304,465h1V580h-1zM305,465h1V580h-1zM306,465h1V580h-1zM307,465h1V580h-1zM308,521.8h1V580h-1zM309,578h1V580h-1zM310,578h1V580h-1zM311,578h1V580h-1zM312,462.1h1V580h-1zM313,461.3h1V580h-1zM314,461.7h1V580h-1zM315,462.2h1V580h-1zM316,461.2h1V580h-1zM317,461.5h1V580h-1zM318,462.2h1V580h-1zM319,461.2h1V580h-1zM320,461.9h1V580h-1zM321,461.9h1V580h-1zM322,461.3h1V580h-1zM323,462.2h1V580h-1zM324,461.9h1V580h-1zM325,465h1V580h-1zM326,465h1V580h-1zM327,465h1V580h-1zM328,465h1V580h-1zM329,465h1V580h-1zM330,465h1V580h-1zM331,465h1V580h-1zM332,465h1V580h-1zM333,465h1V580h-1zM334,465h1V580h-1zM335,465h1V580h-1zM336,465h1V580h-1zM337,465h1V580h-1zM338,466h1V580h-1zM339,465h1V580h-1zM340,465h1V580h-1zM341,465h1V580h-1zM342,465h1V580h-1zM343,465h1V580h-1zM344,465h1V580h-1zM345,465h1V580h-1zM346,465h1V580h-1zM347,465h1V580h-1zM348,465h1V580h-1zM349,465h1V580h-1zM350,465h1V580h-1zM351,467h1V580h-1zM352,465h1V580h-1zM353,465h1V580h-1zM354,465h1V580h-1zM355,465h1V580h-1zM356,465h1V580h-1zM357,466h1V580h-1zM358,465h1V580h-1zM359,466h1V580h-1zM360,465h1V580h-1zM361,465h1V580h-1zM362,466h1V580h-1zM363,465h1V580h-1zM364,465h1V580h-1zM365,466h1V580h-1zM366,465h1V580h-1zM367,467h1V580h-1zM368,465h1V580h-1zM369,465h1V580h-1zM370,578h1V580h-1zM371,578h1V580h-1zM372,578h1V580h-1zM373,461.9h1V580h-1zM374,461.1h1V580h-1zM375,462.1h1V580h-1zM376,462.1h1V580h-1zM377,461.4h1V580h-1zM378,461.9h1V580h-1zM379,462.1h1V580h-1zM380,461.5h1V580h-1zM381,461.4h1V580h-1zM382,461.7h1V580h-1zM383,465h1V580h-1zM384,465h1V580h-1zM385,465h1V580h-1zM386,465h1V580h-1zM387,465h1V580h-1zM388,465h1V580h-1zM389,465h1V580h-1zM390,466h1V580h-1zM391,466h1V580h-1zM392,465h1V580h-1zM393,465h1V580h-1zM394,465h1V580h-1zM395,466h1V580h-1zM396,466h1V580h-1zM397,466h1V580h-1zM398,465h1V580h-1zM399,465h1V580h-1zM400,465h1V580h-1zM401,465h1V580h-1zM402,465h1V580h-1zM403,466h1V580h-1zM404,465h1V580h-1zM405,465h1V580h-1zM406,465h1V580h-1zM407,465h1V580h-1zM408,465h1V580h-1zM409,467h1V580h-1zM410,466h1V580h-1zM411,467h1V580h-1zM412,465h1V580h-1zM413,465h1V580h-1zM414,465h1V580h-1zM415,578h1V580h-1zM416,578h1V580h-1zM417,578h1V580h-1zM418,578h1V580h-1zM419,578h1V580h-1zM420,578h1V580h-1zM421,461.2h1V580h-1zM422,462.2h1V580h-1zM423,461.3h1V580h-1zM424,461.8h1V580h-1zM425,462.1h1V580h-1zM426,461.8h1V580h-1zM427,462h1V580h-1zM428,461.1h1V580h-1zM429,462.2h1V580h-1zM430,465h1V580h-1zM431,465h1V580h-1zM432,465h1V580h-1zM433,466h1V580h-1zM434,465h1V580h-1zM435,465h1V580h-1zM436,466h1V580h-1zM437,465h1V580h-1zM438,467h1V580h-1zM439,465h1V580h-1zM440,465h1V580h-1zM441,465h1V580h-1zM442,465h1V580h-1zM443,465h1V580h-1zM444,465h1V580h-1zM445,467h1V580h-1zM446,465h1V580h-1zM447,467h1V580h-1zM448,465h1V580h-1zM449,465h1V580h-1zM450,467h1V580h-1zM451,465h1V580h-1zM452,465h1V580h-1zM453,465h1V580h-1zM454,465h1V580h-1zM455,465h1V580h-1zM456,465h1V580h-1zM457,465h1V580h-1zM458,465h1V580h-1zM459,465h1V580h-1zM460,465h1V580h-1zM461,466h1V580h-1zM462,465h1V580h-1zM463,465h1V580h-1zM464,465h1V580h-1zM465,465h1V580h-1zM466,465h1V580h-1zM467,465h1V580h-1zM468,466h1V580h-1zM469,465h1V580h-1zM470,466h1V580h-1zM471,467h1V580h-1zM472,465h1V580h-1zM473,465h1V580h-1zM474,465h1V580h-1zM475,465h1V580h-1zM476,467h1V580h-1zM477,466h1V580h-1zM478,465h1V580h-1zM479,466h1V580h-1zM480,465h1V580h-1zM481,465h1V580h-1zM482,465h1V580h-1zM483,465h1V580h-1zM484,465h1V580h-1zM485,465h1V580h-1zM486,465h1V580h-1zM487,465h1V580h-1zM488,466h1V580h-1zM489,465h1V580h-1zM490,467h1V580h-1zM491,465h1V580h-1zM492,465h1V580h-1zM493,465h1V580h-1zM494,465h1V580h-1zM495,465h1V580h-1zM496,465h1V580h-1zM497,465h1V580h-1zM498,465h1V580h-1zM499,465h1V580h-1zM500,465h1V580h-1zM501,465h1V580h-1zM502,467h1V580h-1zM503,465h1V580h-1zM504,465h1V580h-1zM505,466h1V580h-1zM506,465h1V580h-1zM507,465h1V580h-1zM508,465h1V580h-1zM509,465h1V580h-1zM510,465h1V580h-1zM511,466h1V580h-1zM512,465h1V580h-1zM513,467h1V580h-1zM514,465h1V580h-1zM515,465h1V580h-1zM516,465h1V580h-1zM517,465h1V580h-1zM518,465h1V580h-1zM519,465h1V580h-1zM520,466h1V580h-1zM521,466h1V580h-1zM522,466h1V580h-1zM523,465h1V580h-1zM524,465h1V580h-1zM525,465h1V580h-1zM526,465h1V580h-1zM527,466h1V580h-1zM528,465h1V580h-1zM529,465h1V580h-1zM530,465h1V580h-1zM531,465h1V580h-1zM532,465h1V580h-1zM533,465h1V580h-1zM534,465h1V580h-1zM535,465h1V580h-1zM536,465h1V580h-1zM537,466h1V580h-1zM538,465h1V580h-1zM539,465h1V580h-1zM540,466h1V580h-1zM541,465h1V580h-1zM542,466h1V580h-1zM543,466h1V580h-1zM544,465h1V580h-1zM545,465h1V580h-1zM546,465h1V580h-1zM547,466h1V580h-1zM548,465h1V580h-1zM549,465h1V580h-1zM550,466h1V580h-1zM551,465h1V580h-1zM552,465h1V580h-1zM553,465h1V580h-1zM554,465h1V580h-1zM555,578h1V580h-1zM556,578h1V580h-1zM557,578h1V580h-1zM558,578h1V580h-1zM559,578h1V580h-1zM560,578h1V580h-1zM561,461.8h1V580h-1zM562,461.2h1V580h-1zM563,462h1V580h-1zM564,461.8h1V580h-1zM565,578h1V580h-1zM566,578h1V580h-1zM567,578h1V580h-1zM568,578h1V580h-1zM569,578h1V580h-1zM570,578h1V580h-1zM571,578h1V580h-1zM572,461.4h1V580h-1zM573,461.4h1V580h-1zM574,461.1h1V580h-1zM575,462.1h1V580h-1zM576,461.2h1V580h-1zM577,461.7h1V580h-1zM578,461.8h1V580h-1zM579,461.7h1V580h-1zM580,465h1V580h-1zM581,466h1V580h-1zM582,465h1V580h-1zM583,465h1V580h-1zM584,467h1V580h-1zM585,466h1V580h-1zM586,465h1V580h-1zM587,578h1V580h-1zM588,578h1V580h-1zM589,578h1V580h-1zM590,578h1V580h-1zM591,461.3h1V580h-1zM592,462.1h1V580h-1zM593,461.2h1V580h-1zM594,461.5h1V580h-1zM595,462h1V580h-1zM596,461.3h1V580h-1zM597,462h1V580h-1zM598,461.1h1V580h-1zM599,461.3h1V580h-1zM600,462h1V580h-1zM601,461.8h1V580h-1zM602,461.1h1V580h-1zM603,461.6h1V580h-1zM604,467h1V580h-1zM605,467h1V580h-1zM606,465h1V580h-1zM607,465h1V580h-1zM608,465h1V580h-1zM609,466h1V580h-1zM610,465h1V580h-1zM611,465h1V580h-1zM612,465h1V580h-1zM613,465h1V580h-1zM614,465h1V580h-1zM615,466h1V580h-1zM616,465h1V580h-1zM617,465h1V580h-1zM618,465h1V580h-1zM619,465h1V580h-1zM620,465h1V580h-1zM621,466h1V580h-1zM622,466h1V580h-1zM623,467h1V580h-1zM624,465h1V580h-1zM625,465h1V580h-1zM626,466h1V580h-1zM627,465h1V580h-1zM628,467h1V580h-1zM629,465h1V580h-1zM630,465h1V580h-1zM631,465h1V580h-1zM632,465h1V580h-1zM633,465h1V580h-1zM634,466h1V580h-1zM635,465h1V580h-1zM636,465h1V580h-1zM637,465h1V580h-1zM638,466h1V580h-1zM639,465h1V580h-1zM640,465h1V580h-1zM641,465h1V580h-1zM642,465h1V580h-1zM643,465h1V580h-1zM644,465h1V580h-1zM645,465h1V580h-1zM646,465h1V580h-1zM647,465h1V580h-1zM648,465h1V580h-1zM649,465h1V580h-1zM650,465h1V580h-1zM651,465h1V580h-1zM652,466h1V580h-1zM653,465h1V580h-1zM654,467h1V580h-1zM655,465h1V580h-1zM656,465h1V580h-1zM657,466h1V580h-1zM658,467h1V580h-1zM659,465h1V580h-1zM660,465h1V580h-1zM661,465h1V580h-1zM662,465h1V580h-1zM663,465h1V580h-1zM664,465h1V580h-1zM665,465h1V580h-1zM666,465h1V580h-1zM667,466h1V580h-1zM668,465h1V580h-1zM669,465h1V580h-1zM670,465h1V580h-1zM671,465h1V580h-1zM672,465h1V580h-1zM673,465h1V580h-1zM674,465h1V580h-1zM675,466h1V580h-1zM676,465h1V580h-1zM677,465h1V580h-1zM678,465h1V580h-1zM679,465h1V580h-1zM680,466h1V580h-1zM681,466h1V580h-1zM682,466h1V580h-1zM683,465h1V580h-1zM684,465h1V580h-1zM685,465h1V580h-1zM686,465h1V580h-1zM687,465h1V580h-1zM688,465h1V580h-1zM689,465h1V580h-1zM690,467h1V580h-1zM691,465h1V580h-1zM692,465h1V580h-1zM693,465h1V580h-1zM694,467h1V580h-1zM695,465h1V580h-1zM696,466h1V580h-1zM697,465h1V580h-1zM698,465h1V580h-1zM699,465h1V580h-1zM700,466h1V580h-1zM701,466h1V580h-1zM702,465h1V580h-1zM703,465h1V580h-1zM704,466h1V580h-1zM705,465h1V580h-1zM706,465h1V580h-1zM707,465h1V580h-1zM708,465h1V580h-1zM709,466h1V580h-1zM710,465h1V580h-1zM711,465h1V580h-1zM712,465h1V580h-1zM713,465h1V580h-1zM714,465h1V580h-1zM715,465h1V580h-1zM716,465h1V580h-1zM717,466h1V580h-1zM718,465h1V580h-1zM719,465h1V580h-1zM720,466h1V580h-1zM721,465h1V580h-1zM722,465h1V580h-1zM723,466h1V580h-1zM724,466h1V580h-1zM725,467h1V580h-1zM726,465h1V580h-1zM727,465h1V580h-1zM728,465h1V580h-1zM729,465h1V580h-1zM730,465h1V580h-1zM731,466h1V580h-1zM732,465h1V580h-1zM733,465h1V580h-1zM734,465h1V580h-1zM735,465h1V580h-1zM736,578h1V580h-1zM737,578h1V580h-1zM738,578h1V580h-1zM739,578h1V580h-1zM740,465h1V580h-1zM741,465h1V580h-1zM742,465h1V580h-1zM743,465h1V580h-1zM744,465h1V580h-1zM745,465h1V580h-1zM746,465h1V580h-1zM747,465h1V580h-1zM748,465h1V580h-1zM749,465h1V580h-1zM750,465h1V580h-1zM751,466h1V580h-1zM752,465h1V580h-1zM753,465h1V580h-1zM754,466h1V580h-1zM755,465h1V580h-1zM756,465h1V580h-1zM757,465h1V580h-1zM758,466h1V580h-1zM759,465h1V580h-1zM760,465h1V580h-1zM761,465h1V580h-1zM762,465h1V580h-1zM763,465h1V580h-1zM764,465h1V580h-1zM765,466h1V580h-1zM766,465h1V580h-1zM767,465h1V580h-1zM768,465h1V580h-1zM769,465h1V580h-1zM770,465h1V580h-1zM771,466h1V580h-1zM772,465h1V580h-1zM773,465h1V580h-1zM774,465h1V580h-1zM775,466h1V580h-1zM776,465h1V580h-1zM777,465h1V580h-1zM778,467h1V580h-1zM779,465h1V580h-1zM780,465h1V580h-1zM781,465h1V580h-1zM782,465h1V580h-1zM783,466h1V580h-1zM784,465h1V580h-1zM785,465h1V580h-1zM786,465h1V580h-1zM787,466h1V580h-1zM788,466h1V580h-1zM789,465h1V580h-1zM790,465h1V580h-1zM791,466h1V580h-1zM792,465h1V580h-1zM793,466h1V580h-1zM794,465h1V580h-1zM795,465h1V580h-1zM796,466h1V580h-1zM797,467h1V580h-1zM798,465h1V580h-1zM799,465h1V580h-1zM800,465h1V580h-1zM801,465h1V580h-1zM802,465h1V580h-1zM803,465h1V580h-1zM804,465h1V580h-1zM805,465h1V580h-1zM806,467h1V580h-1zM807,465h1V580h-1zM808,466h1V580h-1zM809,465h1V580h-1zM810,466h1V580h-1zM811,465h1V580h-1zM812,466h1V580h-1zM813,465h1V580h-1zM814,465h1V580h-1zM815,465h1V580h-1zM816,466h1V580h-1zM817,465h1V580h-1zM818,466h1V580h-1zM819,465h1V580h-1zM820,465h1V580h-1zM821,466h1V580h-1zM822,467h1V580h-1zM823,466h1V580h-1zM824,465h1V580h-1zM825,465h1V580h-1zM826,465h1V580h-1zM827,509.9h1V580h-1zM828,511.3h1V580h-1zM829,512.2h1V580h-1zM830,510.9h1V580h-1zM831,510.4h1V580h-1zM832,511.3h1V580h-1zM833,512.3h1V580h-1zM834,510.2h1V580h-1zM835,511.4h1V580h-1zM836,511.3h1V580h-1zM837,511.3h1V580h-1zM838,578h1V580h-1zM839,578h1V580h-1zM840,578h1V580h-1zM841,578h1V580h-1zM842,578h1V580h-1zM843,578h1V580h-1zM844,518.4h1V580h-1zM845,518.9h1V580h-1zM846,518.5h1V580h-1zM847,518.5h1V580h-1zM848,519.6h1V580h-1zM849,520.2h1V580h-1zM850,519.6h1V580h-1zM851,518.7h1V580h-1zM852,520.7h1V580h-1zM853,520.1h1V580h-1zM854,519.4h1V580h-1zM855,519.7h1V580h-1zM856,520.2h1V580h-1zM857,520.2h1V580h-1zM858,518.8h1V580h-1zM859,519.5h1V580h-1zM860,520.2h1V580h-1zM861,518.3h1V580h-1zM862,518.4h1V580h-1zM863,520.2h1V580h-1zM864,518.8h1V580h-1zM865,518.8h1V580h-1zM866,518.9h1V580h-1zM867,520.3h1V580h-1zM868,519.7h1V580h-1zM869,519.8h1V580h-1zM870,520.1h1V580h-1zM871,519.4h1V580h-1zM872,520.2h1V580h-1zM873,520.4h1V580h-1zM874,520.3h1V580h-1zM875,519.7h1V580h-1zM876,519.5h1V580h-1zM877,519.3h1V580h-1zM878,518.6h1V580h-1zM879,519.5h1V580h-1zM880,520.2h1V580h-1zM881,520.6h1V580h-1zM882,518.3h1V580h-1zM883,519.7h1V580h-1zM884,519.3h1V580h-1zM885,520.6h1V580h-1zM886,518.9h1V580h-1zM887,519.1h1V580h-1zM888,520.5h1V580h-1zM889,519.3h1V580h-1zM890,519h1V580h-1zM891,519.7h1V580h-1zM892,519.4h1V580h-1zM893,519.9h1V580h-1zM894,518.3h1V580h-1z" fill="#ff0000" shape-rendering="crispEdges"/><rect x="829" y="478" width="1" height="109" fill="#fff" shape-rendering="crispEdges"/><rect x="832" y="478" width="1" height="109" fill="#fff" shape-rendering="crispEdges"/><rect x="836" y="478" width="1" height="109" fill="#fff" shape-rendering="crispEdges"/><rect x="828" y="561.5" width="10" height="15.5" fill="#87ceeb" shape-rendering="crispEdges"/><rect x="838" y="464" width="1" height="123" fill="#0000ff" shape-rendering="crispEdges"/><rect x="841" y="464" width="1" height="123" fill="#0000ff" shape-rendering="crispEdges"/><rect x="843" y="464" width="1" height="123" fill="#0000ff" shape-rendering="crispEdges"/><rect x="850" y="478" width="1" height="109" fill="#fff" shape-rendering="crispEdges"/><rect x="854" y="478" width="1" height="109" fill="#fff" shape-rendering="crispEdges"/><rect x="856" y="478" width="1" height="109" fill="#fff" shape-rendering="crispEdges"/><rect x="863" y="478" width="1" height="109" fill="#fff" shape-rendering="crispEdges"/><rect x="868" y="523" width="1" height="56" fill="#0000ff" shape-rendering="crispEdges"/><rect x="218" y="472" width="1" height="3" fill="#0000ff" shape-rendering="crispEdges"/><rect x="218" y="475" width="1" height="112" fill="#87ceeb" shape-rendering="crispEdges"/><rect x="282" y="467" width="2" height="3" fill="#0000ff" shape-rendering="crispEdges"/><rect x="282" y="470" width="2" height="117" fill="#87ceeb" shape-rendering="crispEdges"/><rect x="318.7" y="474" width="3" height="3" fill="#0000ff" shape-rendering="crispEdges"/><rect x="318.7" y="477" width="3" height="110" fill="#87ceeb" shape-rendering="crispEdges"/><rect x="377.9" y="474" width="2" height="3" fill="#0000ff" shape-rendering="crispEdges"/><rect x="377.9" y="477" width="2" height="110" fill="#87ceeb" shape-rendering="crispEdges"/><rect x="425" y="474" width="4" height="3" fill="#0000ff" shape-rendering="crispEdges"/><rect x="425" y="477" width="4" height="110" fill="#87ceeb" shape-rendering="crispEdges"/><rect x="575.7" y="474" width="2" height="3" fill="#0000ff" shape-rendering="crispEdges"/><rect x="575.7" y="477" width="2" height="110" fill="#87ceeb" shape-rendering="crispEdges"/><rect x="597.6" y="474" width="2" height="3" fill="#0000ff" shape-rendering="crispEdges"/><rect x="597.6" y="477" width="2" height="110" fill="#87ceeb" shape-rendering="crispEdges"/><rect x="773.3" y="474" width="2" height="3" fill="#0000ff" shape-rendering="crispEdges"/><rect x="773.3" y="477" width="2" height="110" fill="#87ceeb" shape-rendering="crispEdges"/><rect x="170" y="502" width="1" height="85" fill="#a8d8ee" shape-rendering="crispEdges"/><rect x="313.8" y="494" width="1" height="93" fill="#a8d8ee" shape-rendering="crispEdges"/><rect x="362.5" y="470" width="1" height="117" fill="#a8d8ee" shape-rendering="crispEdges"/><rect x="422.4" y="492" width="1" height="95" fill="#a8d8ee" shape-rendering="crispEdges"/><rect x="561.4" y="500" width="1" height="87" fill="#a8d8ee" shape-rendering="crispEdges"/><rect x="573.5" y="478" width="1" height="109" fill="#a8d8ee" shape-rendering="crispEdges"/><rect x="593.5" y="478" width="1" height="109" fill="#a8d8ee" shape-rendering="crispEdges"/><rect x="614.1" y="475" width="1" height="112" fill="#a8d8ee" shape-rendering="crispEdges"/><rect x="619.6" y="472" width="1" height="115" fill="#a8d8ee" shape-rendering="crispEdges"/><rect x="742.6" y="478" width="1" height="109" fill="#a8d8ee" shape-rendering="crispEdges"/><rect x="762.3" y="470" width="1" height="117" fill="#a8d8ee" shape-rendering="crispEdges"/><rect x="315.6" y="477" width="1" height="110" fill="#0000ff" shape-rendering="crispEdges"/><rect x="415.5" y="475" width="1" height="105" fill="#0000ff" shape-rendering="crispEdges"/><rect x="61" y="451" width="843" height="1" fill="#000" shape-rendering="crispEdges"/><rect x="62" y="452" width="842" height="1" fill="#8c8c8c" shape-rendering="crispEdges"/><rect x="61" y="451" width="1" height="138" fill="#000" shape-rendering="crispEdges"/><rect x="62" y="452" width="1" height="136" fill="#8c8c8c" shape-rendering="crispEdges"/><rect x="58" y="461" width="1" height="119" fill="#000" shape-rendering="crispEdges"/><rect x="53" y="478" width="5" height="1" fill="#000" shape-rendering="crispEdges"/><rect x="50" y="498" width="8" height="1" fill="#000" shape-rendering="crispEdges"/><text x="46" y="502.5" font-size="13" font-style="italic" fill="#000" text-anchor="end" letter-spacing="0.5">20</text><rect x="53" y="518" width="5" height="1" fill="#000" shape-rendering="crispEdges"/><rect x="50" y="538" width="8" height="1" fill="#000" shape-rendering="crispEdges"/><text x="46" y="542.5" font-size="13" font-style="italic" fill="#000" text-anchor="end" letter-spacing="0.5">10</text><rect x="53" y="558" width="5" height="1" fill="#000" shape-rendering="crispEdges"/><rect x="50" y="579" width="8" height="1" fill="#000" shape-rendering="crispEdges"/><text x="46" y="583.5" font-size="13" font-style="italic" fill="#000" text-anchor="end" letter-spacing="0.5">0</text><rect x="908" y="460" width="1" height="120" fill="#000" shape-rendering="crispEdges"/><rect x="909" y="579" width="8" height="1" fill="#000" shape-rendering="crispEdges"/><text x="920" y="583.5" font-size="13" font-style="italic" fill="#000" text-anchor="start" letter-spacing="0.5">0</text><rect x="909" y="561" width="5" height="1" fill="#000" shape-rendering="crispEdges"/><rect x="909" y="543" width="8" height="1" fill="#000" shape-rendering="crispEdges"/><text x="920" y="547.5" font-size="13" font-style="italic" fill="#000" text-anchor="start" letter-spacing="0.5">1</text><rect x="909" y="525" width="5" height="1" fill="#000" shape-rendering="crispEdges"/><rect x="909" y="507" width="8" height="1" fill="#000" shape-rendering="crispEdges"/><text x="920" y="511.5" font-size="13" font-style="italic" fill="#000" text-anchor="start" letter-spacing="0.5">2</text><rect x="909" y="489" width="5" height="1" fill="#000" shape-rendering="crispEdges"/><rect x="909" y="471" width="8" height="1" fill="#000" shape-rendering="crispEdges"/><text x="920" y="475.5" font-size="13" font-style="italic" fill="#000" text-anchor="start" letter-spacing="0.5">3</text><rect x="71" y="592" width="824" height="1" fill="#000" shape-rendering="crispEdges"/><rect x="104" y="593" width="1" height="8" fill="#000" shape-rendering="crispEdges"/><text x="104.5" y="612" font-size="11" fill="#000" text-anchor="middle">01:00:00</text><rect x="173" y="593" width="1" height="5" fill="#000" shape-rendering="crispEdges"/><rect x="242" y="593" width="1" height="8" fill="#000" shape-rendering="crispEdges"/><text x="242.5" y="612" font-size="11" fill="#000" text-anchor="middle">05:00:00</text><rect x="310" y="593" width="1" height="5" fill="#000" shape-rendering="crispEdges"/><rect x="379" y="593" width="1" height="8" fill="#000" shape-rendering="crispEdges"/><text x="379.5" y="612" font-size="11" fill="#000" text-anchor="middle">09:00:00</text><rect x="447" y="593" width="1" height="5" fill="#000" shape-rendering="crispEdges"/><rect x="516" y="593" width="1" height="8" fill="#000" shape-rendering="crispEdges"/><text x="516.5" y="612" font-size="11" fill="#000" text-anchor="middle">13:00:00</text><rect x="585" y="593" width="1" height="5" fill="#000" shape-rendering="crispEdges"/><rect x="653" y="593" width="1" height="8" fill="#000" shape-rendering="crispEdges"/><text x="653.5" y="612" font-size="11" fill="#000" text-anchor="middle">17:00:00</text><rect x="722" y="593" width="1" height="5" fill="#000" shape-rendering="crispEdges"/><rect x="791" y="593" width="1" height="8" fill="#000" shape-rendering="crispEdges"/><text x="791.5" y="612" font-size="11" fill="#000" text-anchor="middle">21:00:00</text><rect x="859" y="593" width="1" height="5" fill="#000" shape-rendering="crispEdges"/><text transform="translate(22.5,519.5) rotate(-90)" font-size="14" font-style="italic" text-anchor="middle" fill="#000" textLength="83" lengthAdjust="spacingAndGlyphs">Current (mA)</text><text transform="translate(935.5,520.5) rotate(90)" font-size="14" font-style="italic" text-anchor="middle" fill="#000" textLength="108" lengthAdjust="spacingAndGlyphs">Inj Rate(mA/sec)</text><text transform="translate(952,519.5) rotate(90)" font-size="14" font-style="italic" text-anchor="middle" fill="#000" textLength="74" lengthAdjust="spacingAndGlyphs">Charge(nC)</text><rect x="88" y="649" width="797" height="137" fill="#fff"/><line x1="90" y1="673.5" x2="884" y2="673.5" stroke="#a8a8a8" stroke-width="1" stroke-dasharray="1 1" shape-rendering="crispEdges"/><line x1="90" y1="693.5" x2="884" y2="693.5" stroke="#a8a8a8" stroke-width="1" stroke-dasharray="1 1" shape-rendering="crispEdges"/><line x1="90" y1="714.5" x2="884" y2="714.5" stroke="#a8a8a8" stroke-width="1" stroke-dasharray="1 1" shape-rendering="crispEdges"/><line x1="90" y1="735.5" x2="884" y2="735.5" stroke="#a8a8a8" stroke-width="1" stroke-dasharray="1 1" shape-rendering="crispEdges"/><line x1="90" y1="756.5" x2="884" y2="756.5" stroke="#a8a8a8" stroke-width="1" stroke-dasharray="1 1" shape-rendering="crispEdges"/><line x1="90" y1="777.5" x2="884" y2="777.5" stroke="#a8a8a8" stroke-width="1" stroke-dasharray="1 1" shape-rendering="crispEdges"/><line x1="129.5" y1="651" x2="129.5" y2="785" stroke="#a8a8a8" stroke-width="1" stroke-dasharray="1 1" shape-rendering="crispEdges"/><line x1="194.5" y1="651" x2="194.5" y2="785" stroke="#a8a8a8" stroke-width="1" stroke-dasharray="1 1" shape-rendering="crispEdges"/><line x1="259.5" y1="651" x2="259.5" y2="785" stroke="#a8a8a8" stroke-width="1" stroke-dasharray="1 1" shape-rendering="crispEdges"/><line x1="324.5" y1="651" x2="324.5" y2="785" stroke="#a8a8a8" stroke-width="1" stroke-dasharray="1 1" shape-rendering="crispEdges"/><line x1="389.5" y1="651" x2="389.5" y2="785" stroke="#a8a8a8" stroke-width="1" stroke-dasharray="1 1" shape-rendering="crispEdges"/><line x1="454.5" y1="651" x2="454.5" y2="785" stroke="#a8a8a8" stroke-width="1" stroke-dasharray="1 1" shape-rendering="crispEdges"/><line x1="519.5" y1="651" x2="519.5" y2="785" stroke="#a8a8a8" stroke-width="1" stroke-dasharray="1 1" shape-rendering="crispEdges"/><line x1="584.5" y1="651" x2="584.5" y2="785" stroke="#a8a8a8" stroke-width="1" stroke-dasharray="1 1" shape-rendering="crispEdges"/><line x1="648.5" y1="651" x2="648.5" y2="785" stroke="#a8a8a8" stroke-width="1" stroke-dasharray="1 1" shape-rendering="crispEdges"/><line x1="713.5" y1="651" x2="713.5" y2="785" stroke="#a8a8a8" stroke-width="1" stroke-dasharray="1 1" shape-rendering="crispEdges"/><line x1="778.5" y1="651" x2="778.5" y2="785" stroke="#a8a8a8" stroke-width="1" stroke-dasharray="1 1" shape-rendering="crispEdges"/><line x1="843.5" y1="651" x2="843.5" y2="785" stroke="#a8a8a8" stroke-width="1" stroke-dasharray="1 1" shape-rendering="crispEdges"/><rect x="88" y="649" width="797" height="1" fill="#000" shape-rendering="crispEdges"/><rect x="89" y="650" width="796" height="1" fill="#8c8c8c" shape-rendering="crispEdges"/><rect x="88" y="649" width="1" height="138" fill="#000" shape-rendering="crispEdges"/><rect x="89" y="650" width="1" height="136" fill="#8c8c8c" shape-rendering="crispEdges"/><rect x="85" y="658" width="1" height="120" fill="#000" shape-rendering="crispEdges"/><rect x="80" y="673" width="5" height="1" fill="#000" shape-rendering="crispEdges"/><rect x="77" y="693" width="8" height="1" fill="#000" shape-rendering="crispEdges"/><text x="73" y="697.5" font-size="13" font-style="italic" fill="#000" text-anchor="end" letter-spacing="0.5">0.001</text><rect x="80" y="714" width="5" height="1" fill="#000" shape-rendering="crispEdges"/><rect x="77" y="735" width="8" height="1" fill="#000" shape-rendering="crispEdges"/><text x="73" y="739.5" font-size="13" font-style="italic" fill="#000" text-anchor="end" letter-spacing="0.5">0.0005</text><rect x="80" y="756" width="5" height="1" fill="#000" shape-rendering="crispEdges"/><rect x="77" y="777" width="8" height="1" fill="#000" shape-rendering="crispEdges"/><text x="73" y="781.5" font-size="13" font-style="italic" fill="#000" text-anchor="end" letter-spacing="0.5">0</text><rect x="889" y="659" width="1" height="119" fill="#000" shape-rendering="crispEdges"/><rect x="890" y="777" width="8" height="1" fill="#000" shape-rendering="crispEdges"/><text x="901" y="781.5" font-size="13" font-style="italic" fill="#000" text-anchor="start" letter-spacing="0.5">0</text><rect x="890" y="764" width="5" height="1" fill="#000" shape-rendering="crispEdges"/><rect x="890" y="751" width="8" height="1" fill="#000" shape-rendering="crispEdges"/><text x="901" y="755.5" font-size="13" font-style="italic" fill="#000" text-anchor="start" letter-spacing="0.5">0.02</text><rect x="890" y="738" width="5" height="1" fill="#000" shape-rendering="crispEdges"/><rect x="890" y="725" width="8" height="1" fill="#000" shape-rendering="crispEdges"/><text x="901" y="729.5" font-size="13" font-style="italic" fill="#000" text-anchor="start" letter-spacing="0.5">0.04</text><rect x="890" y="712" width="5" height="1" fill="#000" shape-rendering="crispEdges"/><rect x="890" y="699" width="8" height="1" fill="#000" shape-rendering="crispEdges"/><text x="901" y="703.5" font-size="13" font-style="italic" fill="#000" text-anchor="start" letter-spacing="0.5">0.06</text><rect x="890" y="686" width="5" height="1" fill="#000" shape-rendering="crispEdges"/><rect x="890" y="673" width="8" height="1" fill="#000" shape-rendering="crispEdges"/><text x="901" y="677.5" font-size="13" font-style="italic" fill="#000" text-anchor="start" letter-spacing="0.5">0.08</text><rect x="890" y="660" width="5" height="1" fill="#000" shape-rendering="crispEdges"/><rect x="98" y="790" width="779" height="1" fill="#000" shape-rendering="crispEdges"/><rect x="129" y="791" width="1" height="8" fill="#000" shape-rendering="crispEdges"/><text x="129.5" y="810" font-size="11" fill="#000" text-anchor="middle">01:00:00</text><rect x="194" y="791" width="1" height="5" fill="#000" shape-rendering="crispEdges"/><rect x="259" y="791" width="1" height="8" fill="#000" shape-rendering="crispEdges"/><text x="259.5" y="810" font-size="11" fill="#000" text-anchor="middle">05:00:00</text><rect x="324" y="791" width="1" height="5" fill="#000" shape-rendering="crispEdges"/><rect x="389" y="791" width="1" height="8" fill="#000" shape-rendering="crispEdges"/><text x="389.5" y="810" font-size="11" fill="#000" text-anchor="middle">09:00:00</text><rect x="454" y="791" width="1" height="5" fill="#000" shape-rendering="crispEdges"/><rect x="519" y="791" width="1" height="8" fill="#000" shape-rendering="crispEdges"/><text x="519.5" y="810" font-size="11" fill="#000" text-anchor="middle">13:00:00</text><rect x="584" y="791" width="1" height="5" fill="#000" shape-rendering="crispEdges"/><rect x="648" y="791" width="1" height="8" fill="#000" shape-rendering="crispEdges"/><text x="648.5" y="810" font-size="11" fill="#000" text-anchor="middle">17:00:00</text><rect x="713" y="791" width="1" height="5" fill="#000" shape-rendering="crispEdges"/><rect x="778" y="791" width="1" height="8" fill="#000" shape-rendering="crispEdges"/><text x="778.5" y="810" font-size="11" fill="#000" text-anchor="middle">21:00:00</text><rect x="843" y="791" width="1" height="5" fill="#000" shape-rendering="crispEdges"/><text transform="translate(22.5,717.5) rotate(-90)" font-size="14" font-style="italic" text-anchor="middle" fill="#000" textLength="83" lengthAdjust="spacingAndGlyphs">Current (mA)</text><text transform="translate(935.5,718.5) rotate(90)" font-size="14" font-style="italic" text-anchor="middle" fill="#000" textLength="108" lengthAdjust="spacingAndGlyphs">Inj Rate(mA/sec)</text><text transform="translate(952,717.5) rotate(90)" font-size="14" font-style="italic" text-anchor="middle" fill="#000" textLength="74" lengthAdjust="spacingAndGlyphs">Charge(nC)</text><rect x="80" y="847" width="805" height="137" fill="#fff"/><line x1="82" y1="857.5" x2="884" y2="857.5" stroke="#a8a8a8" stroke-width="1" stroke-dasharray="1 1" shape-rendering="crispEdges"/><line x1="82" y1="877.5" x2="884" y2="877.5" stroke="#a8a8a8" stroke-width="1" stroke-dasharray="1 1" shape-rendering="crispEdges"/><line x1="82" y1="896.5" x2="884" y2="896.5" stroke="#a8a8a8" stroke-width="1" stroke-dasharray="1 1" shape-rendering="crispEdges"/><line x1="82" y1="916.5" x2="884" y2="916.5" stroke="#a8a8a8" stroke-width="1" stroke-dasharray="1 1" shape-rendering="crispEdges"/><line x1="82" y1="935.5" x2="884" y2="935.5" stroke="#a8a8a8" stroke-width="1" stroke-dasharray="1 1" shape-rendering="crispEdges"/><line x1="82" y1="955.5" x2="884" y2="955.5" stroke="#a8a8a8" stroke-width="1" stroke-dasharray="1 1" shape-rendering="crispEdges"/><line x1="82" y1="975.5" x2="884" y2="975.5" stroke="#a8a8a8" stroke-width="1" stroke-dasharray="1 1" shape-rendering="crispEdges"/><line x1="122.5" y1="849" x2="122.5" y2="983" stroke="#a8a8a8" stroke-width="1" stroke-dasharray="1 1" shape-rendering="crispEdges"/><line x1="187.5" y1="849" x2="187.5" y2="983" stroke="#a8a8a8" stroke-width="1" stroke-dasharray="1 1" shape-rendering="crispEdges"/><line x1="253.5" y1="849" x2="253.5" y2="983" stroke="#a8a8a8" stroke-width="1" stroke-dasharray="1 1" shape-rendering="crispEdges"/><line x1="318.5" y1="849" x2="318.5" y2="983" stroke="#a8a8a8" stroke-width="1" stroke-dasharray="1 1" shape-rendering="crispEdges"/><line x1="384.5" y1="849" x2="384.5" y2="983" stroke="#a8a8a8" stroke-width="1" stroke-dasharray="1 1" shape-rendering="crispEdges"/><line x1="449.5" y1="849" x2="449.5" y2="983" stroke="#a8a8a8" stroke-width="1" stroke-dasharray="1 1" shape-rendering="crispEdges"/><line x1="515.5" y1="849" x2="515.5" y2="983" stroke="#a8a8a8" stroke-width="1" stroke-dasharray="1 1" shape-rendering="crispEdges"/><line x1="581.5" y1="849" x2="581.5" y2="983" stroke="#a8a8a8" stroke-width="1" stroke-dasharray="1 1" shape-rendering="crispEdges"/><line x1="646.5" y1="849" x2="646.5" y2="983" stroke="#a8a8a8" stroke-width="1" stroke-dasharray="1 1" shape-rendering="crispEdges"/><line x1="712.5" y1="849" x2="712.5" y2="983" stroke="#a8a8a8" stroke-width="1" stroke-dasharray="1 1" shape-rendering="crispEdges"/><line x1="777.5" y1="849" x2="777.5" y2="983" stroke="#a8a8a8" stroke-width="1" stroke-dasharray="1 1" shape-rendering="crispEdges"/><line x1="843.5" y1="849" x2="843.5" y2="983" stroke="#a8a8a8" stroke-width="1" stroke-dasharray="1 1" shape-rendering="crispEdges"/><path d="M81,879.8h1V913.4h-1zM82,871h1V913.3h-1zM83,861.3h1V909h-1zM84,866.6h1V916.2h-1zM85,872.1h1V906h-1zM86,873h1V908h-1zM87,883.6h1V914h-1zM88,884h1V914.6h-1zM89,880.8h1V916.1h-1zM90,878.5h1V909.2h-1zM91,876.9h1V910.5h-1zM92,884.4h1V920.4h-1zM93,877.3h1V912.7h-1zM94,882.4h1V907.5h-1zM95,877.5h1V916.6h-1zM96,882.9h1V907.7h-1zM97,876.9h1V908.6h-1zM98,883.6h1V908h-1zM99,881.1h1V914h-1zM100,863.7h1V907h-1zM101,875.7h1V909.7h-1zM102,880.2h1V909h-1zM103,885.4h1V909.6h-1zM104,888h1V914h-1zM105,890.6h1V921.2h-1zM106,888.6h1V922.7h-1zM107,891.1h1V917.1h-1zM108,896.7h1V927.5h-1zM109,891.4h1V923.1h-1zM110,877.4h1V927.3h-1zM111,889.5h1V926.3h-1zM112,888.3h1V925.1h-1zM113,883.4h1V925.7h-1zM114,893.4h1V920.6h-1zM115,890.7h1V923h-1zM116,893.2h1V927.8h-1zM117,885.8h1V920.5h-1zM118,872.7h1V926.6h-1zM119,891.8h1V922.9h-1zM120,889.9h1V920.8h-1zM121,880.4h1V922.2h-1zM122,884.9h1V927.5h-1zM123,883.2h1V925.4h-1zM124,879.4h1V924.8h-1zM125,882.3h1V923.3h-1zM126,877.2h1V919.4h-1zM127,880.7h1V917.7h-1zM128,882.2h1V911.9h-1zM129,885.5h1V919.8h-1zM130,878.7h1V922.7h-1zM131,887.8h1V918.9h-1zM132,878.4h1V915.7h-1zM133,886.1h1V921.5h-1zM134,883.6h1V916.5h-1zM135,882.5h1V916.7h-1zM136,880.1h1V919.2h-1zM137,878.5h1V916.9h-1zM138,884h1V913.6h-1zM139,883.7h1V915.1h-1zM140,884.5h1V921.3h-1zM141,888.1h1V925.9h-1zM142,882.4h1V935.4h-1zM143,883.2h1V918.3h-1zM144,891.9h1V934h-1zM145,887.1h1V928.1h-1zM146,891h1V917.2h-1zM147,889.5h1V922.2h-1zM148,896h1V921.2h-1zM149,877.6h1V919.3h-1zM150,888.8h1V928.2h-1zM151,892.8h1V923.9h-1zM152,888.8h1V928h-1zM153,884.6h1V924.1h-1zM154,894.9h1V917.2h-1zM155,886h1V918.6h-1zM156,884.7h1V921.1h-1zM157,892.7h1V925.7h-1zM158,887.9h1V919.7h-1zM159,878.7h1V915.5h-1zM160,893.6h1V919.4h-1zM161,883.4h1V921.3h-1zM162,888.1h1V922.1h-1zM163,887.5h1V914.7h-1zM164,890.7h1V916.8h-1zM165,882.4h1V928.3h-1zM166,888.7h1V924.3h-1zM167,878.8h1V923.2h-1zM168,884.7h1V922.3h-1zM169,884.2h1V923.9h-1zM170,889.9h1V918.7h-1zM171,883.2h1V917.3h-1zM172,884.3h1V938.5h-1zM173,888.8h1V920.4h-1zM174,879.9h1V918.9h-1zM175,890.8h1V935h-1zM176,886.2h1V921.9h-1zM177,880.9h1V921.9h-1zM178,885.4h1V920.4h-1zM179,888.1h1V910.5h-1zM180,880.6h1V914.1h-1zM181,878.4h1V921.5h-1zM182,883.7h1V913.7h-1zM183,879.2h1V915.4h-1zM184,879.7h1V916.5h-1zM185,877.6h1V916.3h-1zM186,883.5h1V916.4h-1zM187,865.5h1V909.8h-1zM188,886.6h1V908.4h-1zM189,885.9h1V916.2h-1zM190,873.8h1V911.6h-1zM191,887.8h1V910.8h-1zM192,878.7h1V923h-1zM193,878.9h1V915.7h-1zM194,888h1V916.8h-1zM195,883.6h1V921.1h-1zM196,890.4h1V920.4h-1zM197,884.6h1V918.8h-1zM198,886.8h1V916.6h-1zM199,891.1h1V919.7h-1zM200,890.1h1V922.6h-1zM201,888.6h1V920.8h-1zM202,877.5h1V928.1h-1zM203,891.1h1V927.6h-1zM204,894.3h1V925.8h-1zM205,895.6h1V931.7h-1zM206,896.4h1V920.4h-1zM207,890.2h1V930.2h-1zM208,888.7h1V929.9h-1zM209,892.4h1V928.4h-1zM210,882.1h1V921.1h-1zM211,890h1V922.6h-1zM212,894.6h1V934.8h-1zM213,891.3h1V925.9h-1zM214,891.7h1V930.8h-1zM215,897.1h1V940.1h-1zM216,892.6h1V946.9h-1zM217,900.6h1V931h-1zM218,898.3h1V924.6h-1zM219,894.5h1V929.5h-1zM220,888h1V930.4h-1zM221,882.5h1V935.1h-1zM222,897.2h1V941.9h-1zM223,900.7h1V926.3h-1zM224,901h1V936.9h-1zM225,897.5h1V929.2h-1zM226,896.1h1V921h-1zM227,882.9h1V925.7h-1zM228,889.3h1V926.7h-1zM229,897.3h1V922.6h-1zM230,886.5h1V921.1h-1zM231,889.8h1V926.6h-1zM232,878.5h1V921.9h-1zM233,888.2h1V920.6h-1zM234,883.6h1V921.6h-1zM235,883h1V918.3h-1zM236,882h1V916h-1zM237,888.6h1V921.5h-1zM238,886.6h1V917.3h-1zM239,887.2h1V936.9h-1zM240,897.3h1V919.2h-1zM241,894.8h1V928h-1zM242,900.5h1V941.3h-1zM243,892.5h1V931.5h-1zM244,900.6h1V933.1h-1zM245,898.4h1V928.8h-1zM246,899.5h1V937.2h-1zM247,903.1h1V954h-1zM248,907.9h1V957.2h-1zM249,907.2h1V942.2h-1zM250,902.1h1V933.6h-1zM251,900h1V937.9h-1zM252,908.2h1V933.1h-1zM253,903.2h1V933.5h-1zM254,907.7h1V938.2h-1zM255,910.6h1V944.3h-1zM256,900.5h1V935.8h-1zM257,902h1V937.6h-1zM258,909.2h1V936.7h-1zM259,899.9h1V936.8h-1zM260,896.9h1V933.8h-1zM261,900.8h1V945.3h-1zM262,897.5h1V932.4h-1zM263,901.5h1V935.5h-1zM264,900.5h1V937h-1zM265,893.2h1V941.7h-1zM266,901.7h1V942.7h-1zM267,906.9h1V934.1h-1zM268,898.6h1V941.8h-1zM269,895.7h1V941.8h-1zM270,907.2h1V942.1h-1zM271,903.1h1V939.9h-1zM272,895.9h1V935.6h-1zM273,902.5h1V935.4h-1zM274,901h1V944h-1zM275,896.4h1V943h-1zM276,896.9h1V950.2h-1zM277,904.6h1V942.2h-1zM278,905.2h1V941.9h-1zM279,890h1V937.6h-1zM280,905.9h1V936.9h-1zM281,899.7h1V941.7h-1zM282,891.6h1V940.7h-1zM283,891h1V941.3h-1zM284,896.7h1V931.2h-1zM285,895.2h1V933.1h-1zM286,891.9h1V939.8h-1zM287,892.5h1V933.3h-1zM288,879.5h1V932.6h-1zM289,899.9h1V933h-1zM290,880.4h1V936.2h-1zM291,900h1V928.1h-1zM292,899.5h1V934.6h-1zM293,889.6h1V926.1h-1zM294,888.7h1V935.8h-1zM295,895.1h1V929.4h-1zM296,889.9h1V931.1h-1zM297,887.1h1V931.8h-1zM298,890.7h1V934.1h-1zM299,896.5h1V928.9h-1zM300,895.5h1V930.1h-1zM301,887.9h1V927.6h-1zM302,892.7h1V929.6h-1zM303,897.1h1V939.2h-1zM304,894.7h1V935.3h-1zM305,901.2h1V943.1h-1zM306,899.3h1V930h-1zM307,897.2h1V929.9h-1zM308,889.1h1V933.3h-1zM309,900.2h1V932.8h-1zM310,899.8h1V939.6h-1zM311,895.7h1V933.2h-1zM312,899.6h1V931.7h-1zM313,896.6h1V936.2h-1zM314,893.3h1V931.8h-1zM315,895.7h1V934.4h-1zM316,893.9h1V931.7h-1zM317,880.4h1V936.2h-1zM318,891.8h1V933.8h-1zM319,899.1h1V932.1h-1zM320,900.7h1V934.3h-1zM321,901.4h1V938.1h-1zM322,894.5h1V935.9h-1zM323,897.6h1V935.5h-1zM324,905.2h1V938.9h-1zM325,901.7h1V936.2h-1zM326,899.3h1V942.5h-1zM327,897.4h1V938.4h-1zM328,902.1h1V934.8h-1zM329,907.9h1V942.7h-1zM330,905.8h1V937.5h-1zM331,908.6h1V936.3h-1zM332,899.5h1V947h-1zM333,905.6h1V941h-1zM334,888h1V935.5h-1zM335,900.8h1V939h-1zM336,907.8h1V942.2h-1zM337,904.4h1V939.9h-1zM338,898.8h1V947.5h-1zM339,901h1V939.1h-1zM340,905.6h1V945.4h-1zM341,902.9h1V945.4h-1zM342,908.6h1V944.1h-1zM343,909.6h1V940.8h-1zM344,904.5h1V945.5h-1zM345,908.1h1V937.7h-1zM346,910.7h1V934.4h-1zM347,909.9h1V942.7h-1zM348,894h1V941.6h-1zM349,912.4h1V940.6h-1zM350,905.6h1V936.6h-1zM351,907.1h1V942.6h-1zM352,897.3h1V937.8h-1zM353,908.8h1V941.2h-1zM354,906.3h1V944h-1zM355,908h1V941.7h-1zM356,912.8h1V938.4h-1zM357,910.1h1V947.4h-1zM358,908h1V944.9h-1zM359,906.1h1V958.1h-1zM360,916.2h1V942.1h-1zM361,901.2h1V940.8h-1zM362,910.8h1V949.6h-1zM363,901.8h1V953.9h-1zM364,912.5h1V946h-1zM365,908.2h1V946h-1zM366,908.1h1V950.6h-1zM367,904.9h1V946.4h-1zM368,910h1V948.7h-1zM369,919.8h1V944.5h-1zM370,918h1V951.6h-1zM371,918.4h1V946.9h-1zM372,918.8h1V953.2h-1zM373,917.3h1V959.1h-1zM374,908.8h1V946.4h-1zM375,910.3h1V952.1h-1zM376,921h1V952.8h-1zM377,916.7h1V945.1h-1zM378,912.8h1V963.4h-1zM379,911.7h1V952.9h-1zM380,911.4h1V945.1h-1zM381,917.7h1V946h-1zM382,915.6h1V964.8h-1zM383,915.7h1V951.1h-1zM384,921.5h1V949.3h-1zM385,913.9h1V951.3h-1zM386,918.7h1V956h-1zM387,922h1V955.3h-1zM388,921.4h1V950.1h-1zM389,916.1h1V955h-1zM390,911.7h1V950h-1zM391,908.3h1V952.8h-1zM392,916.3h1V950.1h-1zM393,913.2h1V948.7h-1zM394,919h1V946.2h-1zM395,912.4h1V942.6h-1zM396,907.6h1V942.5h-1zM397,909.8h1V950.3h-1zM398,917.2h1V949.4h-1zM399,907.3h1V943.8h-1zM400,914.2h1V947.5h-1zM401,897.7h1V938.9h-1zM402,893.6h1V943.7h-1zM403,900.4h1V947.9h-1zM404,909.9h1V941.2h-1zM405,906.5h1V935.5h-1zM406,903.6h1V940.2h-1zM407,913.1h1V935.2h-1zM408,905.8h1V944.1h-1zM409,910.7h1V943.9h-1zM410,903.7h1V946.1h-1zM411,907.6h1V944.5h-1zM412,907.6h1V947.2h-1zM413,908.8h1V946.4h-1zM414,905.1h1V946.4h-1zM415,911.8h1V944.2h-1zM416,906.7h1V942.5h-1zM417,910.3h1V944.5h-1zM418,897.1h1V942.1h-1zM419,904.6h1V941.5h-1zM420,902.8h1V937.4h-1zM421,902.6h1V939.8h-1zM422,908.2h1V938h-1zM423,907.9h1V944.6h-1zM424,893h1V938.8h-1zM425,902.5h1V939.9h-1zM426,909.3h1V940.9h-1zM427,912.1h1V941h-1zM428,902.1h1V945.6h-1zM429,892.7h1V937.5h-1zM430,912.9h1V943.4h-1zM431,893.6h1V936.3h-1zM432,903.2h1V942.1h-1zM433,907.2h1V942.9h-1zM434,906.6h1V942.8h-1zM435,915.1h1V947.7h-1zM436,908.7h1V942.9h-1zM437,912.7h1V949h-1zM438,889.8h1V946.5h-1zM439,912.3h1V947.9h-1zM440,916h1V942.5h-1zM441,909.6h1V940.6h-1zM442,916.6h1V942.6h-1zM443,905.4h1V955.4h-1zM444,910.7h1V939.8h-1zM445,912.5h1V947.6h-1zM446,905.9h1V944.1h-1zM447,907.9h1V945.5h-1zM448,906.8h1V939.4h-1zM449,907h1V946.1h-1zM450,906.3h1V947.8h-1zM451,904.9h1V940.3h-1zM452,904.4h1V939.7h-1zM453,903.2h1V941.5h-1zM454,902.4h1V939.2h-1zM455,910h1V938.6h-1zM456,903.8h1V946.2h-1zM457,906.5h1V935.4h-1zM458,908h1V938.4h-1zM459,908h1V939.8h-1zM460,907.6h1V944h-1zM461,905.1h1V934.7h-1zM462,903.9h1V939.5h-1zM463,908.1h1V940.1h-1zM464,909.6h1V944.1h-1zM465,908h1V944.2h-1zM466,911h1V938.9h-1zM467,900.9h1V943.3h-1zM468,885.8h1V938.8h-1zM469,899.7h1V938.4h-1zM470,908.4h1V934.8h-1zM471,903.6h1V936.9h-1zM472,908.6h1V944.9h-1zM473,907h1V945h-1zM474,907.5h1V950.9h-1zM475,899.1h1V944.8h-1zM476,906.6h1V943.2h-1zM477,899.8h1V948.1h-1zM478,899.7h1V934.4h-1zM479,897.7h1V940.2h-1zM480,900.6h1V933.4h-1zM481,901.5h1V941.9h-1zM482,905.6h1V952.8h-1zM483,899h1V942.8h-1zM484,904.8h1V940.8h-1zM485,909.3h1V945h-1zM486,901.6h1V943.5h-1zM487,902.4h1V942.3h-1zM488,907h1V937.2h-1zM489,899h1V936.8h-1zM490,903.5h1V945.2h-1zM491,909.7h1V938.6h-1zM492,906.1h1V944.7h-1zM493,904.3h1V949.3h-1zM494,902.3h1V946.6h-1zM495,903.5h1V950.1h-1zM496,901.3h1V940.4h-1zM497,906.9h1V947.9h-1zM498,907.4h1V938.8h-1zM499,912.2h1V945.2h-1zM500,896.8h1V941.3h-1zM501,903.2h1V948.4h-1zM502,911.5h1V941.3h-1zM503,885.2h1V953.2h-1zM504,904.8h1V944.7h-1zM505,902.2h1V937.6h-1zM506,892h1V945.1h-1zM507,905.9h1V943.7h-1zM508,899.7h1V945.9h-1zM509,900.3h1V940.4h-1zM510,890h1V947.2h-1zM511,889.3h1V944.8h-1zM512,897.6h1V950.3h-1zM513,899.8h1V946.3h-1zM514,898.8h1V953.6h-1zM515,898h1V935.1h-1zM516,897.8h1V940.1h-1zM517,901.2h1V935.5h-1zM518,900.5h1V938h-1zM519,897.1h1V936.6h-1zM520,894.5h1V933.1h-1zM521,894.9h1V956.6h-1zM522,901.5h1V939.1h-1zM523,899h1V935.2h-1zM524,880.4h1V936h-1zM525,896.7h1V941.5h-1zM526,886.7h1V934.4h-1zM527,904.7h1V939.5h-1zM528,896.7h1V941.1h-1zM529,902.7h1V931.3h-1zM530,893.4h1V936.6h-1zM531,898.8h1V932.6h-1zM532,882.5h1V929.3h-1zM533,893.9h1V939.3h-1zM534,894.8h1V929.1h-1zM535,898.8h1V931.3h-1zM536,897h1V930.1h-1zM537,886.3h1V930h-1zM538,888.9h1V947.9h-1zM539,892h1V939.3h-1zM540,893.6h1V939.4h-1zM541,893.4h1V930.4h-1zM542,894.4h1V939.6h-1zM543,899.6h1V953h-1zM544,897.2h1V938.8h-1zM545,898.7h1V935.4h-1zM546,893.3h1V935.3h-1zM547,892.6h1V944.9h-1zM548,893.5h1V937.9h-1zM549,888.4h1V939.4h-1zM550,900.5h1V937.6h-1zM551,889.4h1V937h-1zM552,896.4h1V933.1h-1zM553,895.3h1V934.2h-1zM554,899.7h1V933h-1zM555,896.2h1V937h-1zM556,900.1h1V934.5h-1zM557,896.3h1V941.5h-1zM558,888.7h1V934.8h-1zM559,897.1h1V937.6h-1zM560,888h1V935.6h-1zM561,898.3h1V935.9h-1zM562,896h1V936.4h-1zM563,896h1V939h-1zM564,885.5h1V936.8h-1zM565,885h1V924.2h-1zM566,892.4h1V931.5h-1zM567,894.8h1V926.5h-1zM568,896.6h1V927.5h-1zM569,883.9h1V936.2h-1zM570,883.2h1V928.4h-1zM571,896h1V932.3h-1zM572,879.6h1V933.8h-1zM573,889.9h1V926.2h-1zM574,882.7h1V929.8h-1zM575,883.4h1V927.5h-1zM576,881.8h1V927.9h-1zM577,890.1h1V927.9h-1zM578,894.1h1V922.9h-1zM579,884.9h1V924.2h-1zM580,875.1h1V924.3h-1zM581,878.3h1V928.9h-1zM582,885.1h1V925.5h-1zM583,884.3h1V928.4h-1zM584,884.2h1V928h-1zM585,888.2h1V921.4h-1zM586,880.2h1V926.1h-1zM587,887h1V917.3h-1zM588,877.7h1V920.6h-1zM589,881.4h1V912.7h-1zM590,879.8h1V918.2h-1zM591,881.2h1V925.9h-1zM592,865.3h1V911.6h-1zM593,875.3h1V924.5h-1zM594,879.3h1V927h-1zM595,875.8h1V922.6h-1zM596,886.1h1V921.5h-1zM597,876.5h1V912.6h-1zM598,878.8h1V916.1h-1zM599,872.9h1V915.7h-1zM600,885.6h1V913.6h-1zM601,882.6h1V927h-1zM602,880.8h1V916h-1zM603,883.7h1V913.3h-1zM604,871.7h1V909.6h-1zM605,881.1h1V918.1h-1zM606,880.5h1V909.4h-1zM607,878.1h1V911.9h-1zM608,886.1h1V913.3h-1zM609,879.2h1V910.3h-1zM610,877.6h1V916.6h-1zM611,882.8h1V911.7h-1zM612,874.3h1V913h-1zM613,876.9h1V924h-1zM614,872.7h1V915.5h-1zM615,874.3h1V908.6h-1zM616,865h1V906.3h-1zM617,872.3h1V909.5h-1zM618,875.3h1V918h-1zM619,869.9h1V908.3h-1zM620,865.8h1V908.4h-1zM621,868.5h1V906.9h-1zM622,869.5h1V909.3h-1zM623,870.3h1V911.6h-1zM624,866h1V901.8h-1zM625,864.6h1V911.5h-1zM626,871.9h1V910.6h-1zM627,850.1h1V899.1h-1zM628,875h1V898.6h-1zM629,865.3h1V909.4h-1zM630,874.1h1V904.4h-1zM631,869.1h1V898.6h-1zM632,863.5h1V906.6h-1zM633,860.8h1V901.3h-1zM634,869h1V903.6h-1zM635,869.3h1V904.1h-1zM636,866.2h1V899.3h-1zM637,865.3h1V903.1h-1zM638,862h1V909.6h-1zM639,864.4h1V903.9h-1zM640,871.2h1V907.3h-1zM641,863.7h1V904.2h-1zM642,862.4h1V904.2h-1zM643,872.4h1V909.8h-1zM644,852.6h1V904.6h-1zM645,874.2h1V898h-1zM646,863.5h1V908.7h-1zM647,874.7h1V899.9h-1zM648,871.8h1V908.9h-1zM649,875.7h1V912.2h-1zM650,870.8h1V910.4h-1zM651,872h1V912.3h-1zM652,873.6h1V913.5h-1zM653,875h1V909.3h-1zM654,876h1V913.5h-1zM655,880.5h1V914.2h-1zM656,873.7h1V916.8h-1zM657,877.4h1V912.8h-1zM658,871.8h1V919.1h-1zM659,884.6h1V913.2h-1zM660,882.7h1V912.5h-1zM661,884.3h1V930.8h-1zM662,882.2h1V933.8h-1zM663,864.6h1V918h-1zM664,879.8h1V914.8h-1zM665,881h1V921.9h-1zM666,875.8h1V927.3h-1zM667,877.9h1V920.7h-1zM668,879.1h1V914.6h-1zM669,877.7h1V923h-1zM670,865.2h1V922.5h-1zM671,884.4h1V919.1h-1zM672,884.1h1V914h-1zM673,883.7h1V920.6h-1zM674,875.7h1V912.8h-1zM675,878.4h1V911.7h-1zM676,884.7h1V913.3h-1zM677,886.8h1V919h-1zM678,878.5h1V916.7h-1zM679,874.2h1V915h-1zM680,886.2h1V912.9h-1zM681,882.7h1V914.7h-1zM682,877.5h1V912.4h-1zM683,877.8h1V916.1h-1zM684,875.2h1V920.6h-1zM685,877.2h1V918.3h-1zM686,878.9h1V912.9h-1zM687,861.3h1V921.2h-1zM688,877.3h1V912.1h-1zM689,882.4h1V913.7h-1zM690,869.9h1V918.8h-1zM691,879.2h1V915.2h-1zM692,871.7h1V909.7h-1zM693,861.1h1V920.2h-1zM694,875.4h1V919.3h-1zM695,873.4h1V909.2h-1zM696,872.1h1V912.9h-1zM697,872h1V910.5h-1zM698,880h1V916.6h-1zM699,872.8h1V918.7h-1zM700,881.5h1V908.3h-1zM701,868.7h1V911.5h-1zM702,881.6h1V912.2h-1zM703,872.9h1V912h-1zM704,876.8h1V912.3h-1zM705,871h1V917.4h-1zM706,880h1V909.6h-1zM707,869.7h1V909.8h-1zM708,881.2h1V923.1h-1zM709,869.1h1V926.9h-1zM710,877h1V916.6h-1zM711,874.2h1V914.5h-1zM712,872.7h1V919.3h-1zM713,872.4h1V918.6h-1zM714,876.5h1V931.9h-1zM715,882.2h1V911.4h-1zM716,882.8h1V918.6h-1zM717,873.2h1V923.8h-1zM718,876.2h1V920.8h-1zM719,885.3h1V931h-1zM720,878.4h1V912.3h-1zM721,878.2h1V927.8h-1zM722,884.5h1V911.8h-1zM723,875.7h1V914h-1zM724,878.3h1V926.2h-1zM725,883.7h1V922.7h-1zM726,877.7h1V926.9h-1zM727,874.3h1V929.8h-1zM728,856.1h1V917.6h-1zM729,869.3h1V918.6h-1zM730,864h1V921h-1zM731,874.5h1V907.4h-1zM732,860.2h1V907.5h-1zM733,878.4h1V914.6h-1zM734,876.2h1V908.5h-1zM735,876.6h1V916.2h-1zM736,869.8h1V915h-1zM737,876.4h1V906.2h-1zM738,867.5h1V905.9h-1zM739,871.1h1V909.8h-1zM740,864h1V917.3h-1zM741,876h1V906.3h-1zM742,871.5h1V920.9h-1zM743,875.2h1V902.2h-1zM744,867.2h1V901.4h-1zM745,868.9h1V909.1h-1zM746,870.2h1V902.6h-1zM747,867.9h1V896.5h-1zM748,864.2h1V894.8h-1zM749,866.8h1V902.7h-1zM750,865.4h1V901.5h-1zM751,848.9h1V893.4h-1zM752,863.6h1V894.5h-1zM753,861.4h1V903.7h-1zM754,857.9h1V891.2h-1zM755,862h1V889.8h-1zM756,862.9h1V909.4h-1zM757,856.3h1V890.7h-1zM758,858.5h1V892.7h-1zM759,857.7h1V893h-1zM760,858.4h1V899.4h-1zM761,863.7h1V891.7h-1zM762,863.4h1V901.1h-1zM763,868.7h1V904.6h-1zM764,868.1h1V898.4h-1zM765,857.1h1V904.2h-1zM766,863h1V896.2h-1zM767,860.3h1V898.7h-1zM768,863.2h1V898.3h-1zM769,870.3h1V904.7h-1zM770,860.4h1V896.4h-1zM771,870.8h1V903.4h-1zM772,861.1h1V906.3h-1zM773,867.1h1V898h-1zM774,862h1V902.9h-1zM775,868.6h1V903.2h-1zM776,865h1V908.7h-1zM777,863.1h1V917.5h-1zM778,862.3h1V910.6h-1zM779,864.1h1V908.8h-1zM780,869.7h1V901h-1zM781,864.8h1V910.1h-1zM782,872.2h1V902.5h-1zM783,871.1h1V910.5h-1zM784,872.8h1V906.1h-1zM785,865.5h1V902h-1zM786,865.9h1V908.4h-1zM787,867.3h1V911.2h-1zM788,867.5h1V910.4h-1zM789,865.1h1V904.9h-1zM790,859.3h1V913.4h-1zM791,865h1V902.3h-1zM792,874.8h1V914.3h-1zM793,870.7h1V909.2h-1zM794,865.1h1V906.6h-1zM795,870.3h1V911h-1zM796,865h1V903.2h-1zM797,869.9h1V905.3h-1zM798,875.1h1V920.5h-1zM799,853.4h1V925.8h-1zM800,871.7h1V904.9h-1zM801,872.9h1V906.2h-1zM802,875.5h1V904.2h-1zM803,861.8h1V910.3h-1zM804,873.3h1V924.5h-1zM805,872.8h1V906.3h-1zM806,853.9h1V902.3h-1zM807,860.6h1V909h-1zM808,872.4h1V915.1h-1zM809,868.6h1V913.5h-1zM810,874.6h1V911h-1zM811,864.6h1V909.9h-1zM812,871.5h1V909.1h-1zM813,863.7h1V910.6h-1zM814,870.5h1V913.8h-1zM815,850.3h1V913.6h-1zM816,865.7h1V908.4h-1zM817,871.3h1V915.7h-1zM818,863.4h1V922.3h-1zM819,865.7h1V914.1h-1zM820,870.9h1V907h-1zM821,875.9h1V915.4h-1zM822,878.4h1V909.1h-1zM823,876.3h1V916h-1zM824,869.4h1V918.1h-1zM825,867.7h1V913.8h-1zM826,873.2h1V920h-1zM827,877.7h1V912.9h-1zM828,865.1h1V917.5h-1zM829,865.6h1V925.9h-1zM830,859.3h1V914.4h-1zM831,876.2h1V920.2h-1zM832,865.6h1V912.9h-1zM833,873.7h1V910.6h-1zM834,875.5h1V914.3h-1zM835,873.1h1V916.2h-1zM836,866.6h1V915.1h-1zM837,874.7h1V908.7h-1zM838,866.8h1V924.4h-1zM839,868.3h1V911.3h-1zM840,875.1h1V918h-1zM841,875.8h1V918.5h-1zM842,868.2h1V918.9h-1zM843,880h1V915.4h-1zM844,862.3h1V910.8h-1zM845,876.9h1V908.9h-1zM846,876.4h1V922.3h-1zM847,865.7h1V909.2h-1zM848,878.1h1V907.2h-1zM849,866.4h1V915h-1zM850,870.7h1V908.3h-1zM851,856.2h1V911.5h-1zM852,871.7h1V915.5h-1zM853,867.4h1V920.1h-1zM854,874.6h1V905.9h-1zM855,862.6h1V913.2h-1zM856,864.7h1V911h-1zM857,862.4h1V913.1h-1zM858,871.3h1V910.3h-1zM859,870.8h1V902.3h-1zM860,860.8h1V903.1h-1zM861,864.7h1V902.5h-1zM862,864h1V915.5h-1zM863,859.4h1V902.7h-1zM864,867.9h1V907.9h-1zM865,863.2h1V915.2h-1zM866,863.6h1V913.3h-1zM867,870.9h1V907h-1zM868,861.2h1V902.2h-1zM869,864.7h1V904.1h-1zM870,859.4h1V906.8h-1zM871,866.2h1V909.9h-1zM872,865h1V904.2h-1zM873,865.6h1V912.9h-1zM874,875.7h1V909.6h-1zM875,867.1h1V911.2h-1zM876,864.4h1V911.4h-1z" fill="#ff0000" shape-rendering="crispEdges"/><rect x="80" y="847" width="805" height="1" fill="#000" shape-rendering="crispEdges"/><rect x="81" y="848" width="804" height="1" fill="#8c8c8c" shape-rendering="crispEdges"/><rect x="80" y="847" width="1" height="138" fill="#000" shape-rendering="crispEdges"/><rect x="81" y="848" width="1" height="136" fill="#8c8c8c" shape-rendering="crispEdges"/><rect x="77" y="857" width="1" height="119" fill="#000" shape-rendering="crispEdges"/><rect x="69" y="857" width="8" height="1" fill="#000" shape-rendering="crispEdges"/><text x="65" y="861.5" font-size="13" font-style="italic" fill="#000" text-anchor="end" letter-spacing="0.5">0.015</text><rect x="72" y="877" width="5" height="1" fill="#000" shape-rendering="crispEdges"/><rect x="69" y="896" width="8" height="1" fill="#000" shape-rendering="crispEdges"/><text x="65" y="900.5" font-size="13" font-style="italic" fill="#000" text-anchor="end" letter-spacing="0.5">0.01</text><rect x="72" y="916" width="5" height="1" fill="#000" shape-rendering="crispEdges"/><rect x="69" y="935" width="8" height="1" fill="#000" shape-rendering="crispEdges"/><text x="65" y="939.5" font-size="13" font-style="italic" fill="#000" text-anchor="end" letter-spacing="0.5">0.005</text><rect x="72" y="955" width="5" height="1" fill="#000" shape-rendering="crispEdges"/><rect x="69" y="975" width="8" height="1" fill="#000" shape-rendering="crispEdges"/><text x="65" y="979.5" font-size="13" font-style="italic" fill="#000" text-anchor="end" letter-spacing="0.5">0</text><rect x="889" y="857" width="1" height="119" fill="#000" shape-rendering="crispEdges"/><rect x="890" y="975" width="8" height="1" fill="#000" shape-rendering="crispEdges"/><text x="901" y="979.5" font-size="13" font-style="italic" fill="#000" text-anchor="start" letter-spacing="0.5">0</text><rect x="890" y="962" width="5" height="1" fill="#000" shape-rendering="crispEdges"/><rect x="890" y="949" width="8" height="1" fill="#000" shape-rendering="crispEdges"/><text x="901" y="953.5" font-size="13" font-style="italic" fill="#000" text-anchor="start" letter-spacing="0.5">0.02</text><rect x="890" y="936" width="5" height="1" fill="#000" shape-rendering="crispEdges"/><rect x="890" y="923" width="8" height="1" fill="#000" shape-rendering="crispEdges"/><text x="901" y="927.5" font-size="13" font-style="italic" fill="#000" text-anchor="start" letter-spacing="0.5">0.04</text><rect x="890" y="910" width="5" height="1" fill="#000" shape-rendering="crispEdges"/><rect x="890" y="897" width="8" height="1" fill="#000" shape-rendering="crispEdges"/><text x="901" y="901.5" font-size="13" font-style="italic" fill="#000" text-anchor="start" letter-spacing="0.5">0.06</text><rect x="890" y="884" width="5" height="1" fill="#000" shape-rendering="crispEdges"/><rect x="890" y="871" width="8" height="1" fill="#000" shape-rendering="crispEdges"/><text x="901" y="875.5" font-size="13" font-style="italic" fill="#000" text-anchor="start" letter-spacing="0.5">0.08</text><rect x="890" y="858" width="5" height="1" fill="#000" shape-rendering="crispEdges"/><rect x="90" y="988" width="787" height="1" fill="#000" shape-rendering="crispEdges"/><rect x="122" y="989" width="1" height="8" fill="#000" shape-rendering="crispEdges"/><text x="122.5" y="1008" font-size="11" fill="#000" text-anchor="middle">01:00:00</text><rect x="187" y="989" width="1" height="5" fill="#000" shape-rendering="crispEdges"/><rect x="253" y="989" width="1" height="8" fill="#000" shape-rendering="crispEdges"/><text x="253.5" y="1008" font-size="11" fill="#000" text-anchor="middle">05:00:00</text><rect x="318" y="989" width="1" height="5" fill="#000" shape-rendering="crispEdges"/><rect x="384" y="989" width="1" height="8" fill="#000" shape-rendering="crispEdges"/><text x="384.5" y="1008" font-size="11" fill="#000" text-anchor="middle">09:00:00</text><rect x="449" y="989" width="1" height="5" fill="#000" shape-rendering="crispEdges"/><rect x="515" y="989" width="1" height="8" fill="#000" shape-rendering="crispEdges"/><text x="515.5" y="1008" font-size="11" fill="#000" text-anchor="middle">13:00:00</text><rect x="581" y="989" width="1" height="5" fill="#000" shape-rendering="crispEdges"/><rect x="646" y="989" width="1" height="8" fill="#000" shape-rendering="crispEdges"/><text x="646.5" y="1008" font-size="11" fill="#000" text-anchor="middle">17:00:00</text><rect x="712" y="989" width="1" height="5" fill="#000" shape-rendering="crispEdges"/><rect x="777" y="989" width="1" height="8" fill="#000" shape-rendering="crispEdges"/><text x="777.5" y="1008" font-size="11" fill="#000" text-anchor="middle">21:00:00</text><rect x="843" y="989" width="1" height="5" fill="#000" shape-rendering="crispEdges"/><text transform="translate(22.5,915.5) rotate(-90)" font-size="14" font-style="italic" text-anchor="middle" fill="#000" textLength="83" lengthAdjust="spacingAndGlyphs">Current (mA)</text><text transform="translate(935.5,916.5) rotate(90)" font-size="14" font-style="italic" text-anchor="middle" fill="#000" textLength="108" lengthAdjust="spacingAndGlyphs">Inj Rate(mA/sec)</text><text transform="translate(952,915.5) rotate(90)" font-size="14" font-style="italic" text-anchor="middle" fill="#000" textLength="74" lengthAdjust="spacingAndGlyphs">Charge(nC)</text><g shape-rendering="crispEdges"><rect x="975" y="49" width="114" height="24" fill="#00ff00"/><rect x="976" y="50" width="112" height="1" fill="#00a000" shape-rendering="crispEdges"/><rect x="976" y="50" width="1" height="22" fill="#00a000" shape-rendering="crispEdges"/><rect x="975" y="72" width="114" height="1" fill="#00a000" shape-rendering="crispEdges"/><rect x="1088" y="49" width="1" height="24" fill="#00a000" shape-rendering="crispEdges"/><rect x="975" y="73" width="113" height="23" fill="#fff"/><rect x="975" y="73" width="113" height="2" fill="#999" shape-rendering="crispEdges"/><rect x="975" y="73" width="2" height="23" fill="#999" shape-rendering="crispEdges"/><rect x="976" y="95" width="112" height="2" fill="#e4e4e4" shape-rendering="crispEdges"/><rect x="1086" y="74" width="2" height="23" fill="#e4e4e4" shape-rendering="crispEdges"/><rect x="974" y="99" width="20" height="20" fill="#ff0000"/><rect x="974" y="99" width="20" height="2" fill="#ff8080" shape-rendering="crispEdges"/><rect x="974" y="99" width="2" height="20" fill="#ff8080" shape-rendering="crispEdges"/><rect x="975" y="117" width="19" height="2" fill="#a00000" shape-rendering="crispEdges"/><rect x="992" y="100" width="2" height="19" fill="#a00000" shape-rendering="crispEdges"/><rect x="974" y="123" width="20" height="20" fill="#006400"/><rect x="974" y="123" width="20" height="2" fill="#60a060" shape-rendering="crispEdges"/><rect x="974" y="123" width="2" height="20" fill="#60a060" shape-rendering="crispEdges"/><rect x="975" y="141" width="19" height="2" fill="#003000" shape-rendering="crispEdges"/><rect x="992" y="124" width="2" height="19" fill="#003000" shape-rendering="crispEdges"/><rect x="974" y="147" width="20" height="20" fill="#0000ff"/><rect x="974" y="147" width="20" height="2" fill="#8080ff" shape-rendering="crispEdges"/><rect x="974" y="147" width="2" height="20" fill="#8080ff" shape-rendering="crispEdges"/><rect x="975" y="165" width="19" height="2" fill="#0000a0" shape-rendering="crispEdges"/><rect x="992" y="148" width="2" height="19" fill="#0000a0" shape-rendering="crispEdges"/><rect x="974" y="171" width="20" height="20" fill="#87ceeb"/><rect x="974" y="171" width="20" height="2" fill="#c0f0ff" shape-rendering="crispEdges"/><rect x="974" y="171" width="2" height="20" fill="#c0f0ff" shape-rendering="crispEdges"/><rect x="975" y="189" width="19" height="2" fill="#5090a8" shape-rendering="crispEdges"/><rect x="992" y="172" width="2" height="19" fill="#5090a8" shape-rendering="crispEdges"/></g><text x="1031.5" y="65" font-size="16" font-style="italic" fill="#000" text-anchor="middle" stroke="#000" stroke-width="0.45">OPEN</text><text x="1032" y="90" font-size="16" font-style="italic" fill="#000" text-anchor="middle" stroke="#000" stroke-width="0.45">12.500Hz</text><text x="1042.5" y="113.5" font-size="16" font-style="italic" fill="#000" text-anchor="middle" stroke="#000" stroke-width="0.45" letter-spacing="0.3">1199.13mA</text><text x="1042.5" y="137.5" font-size="16" font-style="italic" fill="#000" text-anchor="middle" stroke="#000" stroke-width="0.45" letter-spacing="0.3">0.176mA/s</text><text x="1042.5" y="161.5" font-size="16" font-style="italic" fill="#000" text-anchor="middle" stroke="#000" stroke-width="0.45" letter-spacing="0.3">0.099nC</text><text x="1042.5" y="185.5" font-size="16" font-style="italic" fill="#000" text-anchor="middle" stroke="#000" stroke-width="0.45" letter-spacing="0.3">0.044nC</text><g shape-rendering="crispEdges"><rect x="975" y="247" width="114" height="24" fill="#00ff00"/><rect x="976" y="248" width="112" height="1" fill="#00a000" shape-rendering="crispEdges"/><rect x="976" y="248" width="1" height="22" fill="#00a000" shape-rendering="crispEdges"/><rect x="975" y="270" width="114" height="1" fill="#00a000" shape-rendering="crispEdges"/><rect x="1088" y="247" width="1" height="24" fill="#00a000" shape-rendering="crispEdges"/><rect x="975" y="271" width="113" height="23" fill="#fff"/><rect x="975" y="271" width="113" height="2" fill="#999" shape-rendering="crispEdges"/><rect x="975" y="271" width="2" height="23" fill="#999" shape-rendering="crispEdges"/><rect x="976" y="293" width="112" height="2" fill="#e4e4e4" shape-rendering="crispEdges"/><rect x="1086" y="272" width="2" height="23" fill="#e4e4e4" shape-rendering="crispEdges"/><rect x="974" y="297" width="20" height="20" fill="#ff0000"/><rect x="974" y="297" width="20" height="2" fill="#ff8080" shape-rendering="crispEdges"/><rect x="974" y="297" width="2" height="20" fill="#ff8080" shape-rendering="crispEdges"/><rect x="975" y="315" width="19" height="2" fill="#a00000" shape-rendering="crispEdges"/><rect x="992" y="298" width="2" height="19" fill="#a00000" shape-rendering="crispEdges"/><rect x="974" y="321" width="20" height="20" fill="#006400"/><rect x="974" y="321" width="20" height="2" fill="#60a060" shape-rendering="crispEdges"/><rect x="974" y="321" width="2" height="20" fill="#60a060" shape-rendering="crispEdges"/><rect x="975" y="339" width="19" height="2" fill="#003000" shape-rendering="crispEdges"/><rect x="992" y="322" width="2" height="19" fill="#003000" shape-rendering="crispEdges"/><rect x="974" y="345" width="20" height="20" fill="#0000ff"/><rect x="974" y="345" width="20" height="2" fill="#8080ff" shape-rendering="crispEdges"/><rect x="974" y="345" width="2" height="20" fill="#8080ff" shape-rendering="crispEdges"/><rect x="975" y="363" width="19" height="2" fill="#0000a0" shape-rendering="crispEdges"/><rect x="992" y="346" width="2" height="19" fill="#0000a0" shape-rendering="crispEdges"/><rect x="974" y="369" width="20" height="20" fill="#87ceeb"/><rect x="974" y="369" width="20" height="2" fill="#c0f0ff" shape-rendering="crispEdges"/><rect x="974" y="369" width="2" height="20" fill="#c0f0ff" shape-rendering="crispEdges"/><rect x="975" y="387" width="19" height="2" fill="#5090a8" shape-rendering="crispEdges"/><rect x="992" y="370" width="2" height="19" fill="#5090a8" shape-rendering="crispEdges"/></g><text x="1031.5" y="263" font-size="16" font-style="italic" fill="#000" text-anchor="middle" stroke="#000" stroke-width="0.45">OPEN</text><text x="1032" y="288" font-size="16" font-style="italic" fill="#000" text-anchor="middle" stroke="#000" stroke-width="0.45">23.000Hz</text><text x="1042.5" y="311.5" font-size="16" font-style="italic" fill="#000" text-anchor="middle" stroke="#000" stroke-width="0.45" letter-spacing="0.3">1596.42mA</text><text x="1042.5" y="335.5" font-size="16" font-style="italic" fill="#000" text-anchor="middle" stroke="#000" stroke-width="0.45" letter-spacing="0.3">0.880mA/s</text><text x="1042.5" y="359.5" font-size="16" font-style="italic" fill="#000" text-anchor="middle" stroke="#000" stroke-width="0.45" letter-spacing="0.3">0.087nC</text><text x="1042.5" y="383.5" font-size="16" font-style="italic" fill="#000" text-anchor="middle" stroke="#000" stroke-width="0.45" letter-spacing="0.3">0.111nC</text><g shape-rendering="crispEdges"><rect x="975" y="445" width="114" height="24" fill="#00ff00"/><rect x="976" y="446" width="112" height="1" fill="#00a000" shape-rendering="crispEdges"/><rect x="976" y="446" width="1" height="22" fill="#00a000" shape-rendering="crispEdges"/><rect x="975" y="468" width="114" height="1" fill="#00a000" shape-rendering="crispEdges"/><rect x="1088" y="445" width="1" height="24" fill="#00a000" shape-rendering="crispEdges"/><rect x="975" y="469" width="113" height="23" fill="#fff"/><rect x="975" y="469" width="113" height="2" fill="#999" shape-rendering="crispEdges"/><rect x="975" y="469" width="2" height="23" fill="#999" shape-rendering="crispEdges"/><rect x="976" y="491" width="112" height="2" fill="#e4e4e4" shape-rendering="crispEdges"/><rect x="1086" y="470" width="2" height="23" fill="#e4e4e4" shape-rendering="crispEdges"/><rect x="974" y="495" width="20" height="20" fill="#ff0000"/><rect x="974" y="495" width="20" height="2" fill="#ff8080" shape-rendering="crispEdges"/><rect x="974" y="495" width="2" height="20" fill="#ff8080" shape-rendering="crispEdges"/><rect x="975" y="513" width="19" height="2" fill="#a00000" shape-rendering="crispEdges"/><rect x="992" y="496" width="2" height="19" fill="#a00000" shape-rendering="crispEdges"/><rect x="974" y="519" width="20" height="20" fill="#0000ff"/><rect x="974" y="519" width="20" height="2" fill="#8080ff" shape-rendering="crispEdges"/><rect x="974" y="519" width="2" height="20" fill="#8080ff" shape-rendering="crispEdges"/><rect x="975" y="537" width="19" height="2" fill="#0000a0" shape-rendering="crispEdges"/><rect x="992" y="520" width="2" height="19" fill="#0000a0" shape-rendering="crispEdges"/><rect x="974" y="543" width="20" height="20" fill="#87ceeb"/><rect x="974" y="543" width="20" height="2" fill="#c0f0ff" shape-rendering="crispEdges"/><rect x="974" y="543" width="2" height="20" fill="#c0f0ff" shape-rendering="crispEdges"/><rect x="975" y="561" width="19" height="2" fill="#5090a8" shape-rendering="crispEdges"/><rect x="992" y="544" width="2" height="19" fill="#5090a8" shape-rendering="crispEdges"/></g><text x="1031.5" y="461" font-size="16" font-style="italic" fill="#000" text-anchor="middle" stroke="#000" stroke-width="0.45">OPEN</text><text x="1032" y="486" font-size="16" font-style="italic" fill="#000" text-anchor="middle" stroke="#000" stroke-width="0.45">23.000Hz</text><text x="1042.5" y="509.5" font-size="16" font-style="italic" fill="#000" text-anchor="middle" stroke="#000" stroke-width="0.45" letter-spacing="0.3">14.13mA</text><text x="1042.5" y="533.5" font-size="16" font-style="italic" fill="#000" text-anchor="middle" stroke="#000" stroke-width="0.45" letter-spacing="0.3">3.042nC</text><text x="1042.5" y="557.5" font-size="16" font-style="italic" fill="#000" text-anchor="middle" stroke="#000" stroke-width="0.45" letter-spacing="0.3">0.066nC</text><g shape-rendering="crispEdges"><rect x="975" y="643" width="114" height="24" fill="#d9d9d9"/><rect x="975" y="643" width="114" height="1" fill="#f4f4f4" shape-rendering="crispEdges"/><rect x="975" y="643" width="1" height="24" fill="#f4f4f4" shape-rendering="crispEdges"/><rect x="976" y="644" width="112" height="1" fill="#a0a0a0" shape-rendering="crispEdges"/><rect x="976" y="644" width="1" height="22" fill="#a0a0a0" shape-rendering="crispEdges"/><rect x="976" y="665" width="113" height="2" fill="#a0a0a0" shape-rendering="crispEdges"/><rect x="1087" y="644" width="2" height="23" fill="#a0a0a0" shape-rendering="crispEdges"/><rect x="975" y="667" width="113" height="23" fill="#fff"/><rect x="975" y="667" width="113" height="2" fill="#999" shape-rendering="crispEdges"/><rect x="975" y="667" width="2" height="23" fill="#999" shape-rendering="crispEdges"/><rect x="976" y="689" width="112" height="2" fill="#e4e4e4" shape-rendering="crispEdges"/><rect x="1086" y="668" width="2" height="23" fill="#e4e4e4" shape-rendering="crispEdges"/><rect x="974" y="693" width="20" height="20" fill="#ff0000"/><rect x="974" y="693" width="20" height="2" fill="#ff8080" shape-rendering="crispEdges"/><rect x="974" y="693" width="2" height="20" fill="#ff8080" shape-rendering="crispEdges"/><rect x="975" y="711" width="19" height="2" fill="#a00000" shape-rendering="crispEdges"/><rect x="992" y="694" width="2" height="19" fill="#a00000" shape-rendering="crispEdges"/><rect x="974" y="717" width="20" height="20" fill="#006400"/><rect x="974" y="717" width="20" height="2" fill="#60a060" shape-rendering="crispEdges"/><rect x="974" y="717" width="2" height="20" fill="#60a060" shape-rendering="crispEdges"/><rect x="975" y="735" width="19" height="2" fill="#003000" shape-rendering="crispEdges"/><rect x="992" y="718" width="2" height="19" fill="#003000" shape-rendering="crispEdges"/><rect x="974" y="741" width="20" height="20" fill="#0000ff"/><rect x="974" y="741" width="20" height="2" fill="#8080ff" shape-rendering="crispEdges"/><rect x="974" y="741" width="2" height="20" fill="#8080ff" shape-rendering="crispEdges"/><rect x="975" y="759" width="19" height="2" fill="#0000a0" shape-rendering="crispEdges"/><rect x="992" y="742" width="2" height="19" fill="#0000a0" shape-rendering="crispEdges"/></g><text x="1031.5" y="659" font-size="16" font-style="italic" fill="#000" text-anchor="middle" stroke="#000" stroke-width="0.45">CLOSE</text><text x="1032" y="684" font-size="16" font-style="italic" fill="#000" text-anchor="middle" stroke="#000" stroke-width="0.45">0.000Hz</text><text x="1042.5" y="707.5" font-size="16" font-style="italic" fill="#000" text-anchor="middle" stroke="#000" stroke-width="0.45" letter-spacing="0.3">-0.02mA</text><text x="1042.5" y="731.5" font-size="16" font-style="italic" fill="#000" text-anchor="middle" stroke="#000" stroke-width="0.45" letter-spacing="0.3">----mA/s</text><text x="1042.5" y="755.5" font-size="16" font-style="italic" fill="#000" text-anchor="middle" stroke="#000" stroke-width="0.45" letter-spacing="0.3">----nC</text><g shape-rendering="crispEdges"><rect x="975" y="841" width="114" height="24" fill="#d9d9d9"/><rect x="975" y="841" width="114" height="1" fill="#f4f4f4" shape-rendering="crispEdges"/><rect x="975" y="841" width="1" height="24" fill="#f4f4f4" shape-rendering="crispEdges"/><rect x="976" y="842" width="112" height="1" fill="#a0a0a0" shape-rendering="crispEdges"/><rect x="976" y="842" width="1" height="22" fill="#a0a0a0" shape-rendering="crispEdges"/><rect x="976" y="863" width="113" height="2" fill="#a0a0a0" shape-rendering="crispEdges"/><rect x="1087" y="842" width="2" height="23" fill="#a0a0a0" shape-rendering="crispEdges"/><rect x="975" y="865" width="113" height="23" fill="#fff"/><rect x="975" y="865" width="113" height="2" fill="#999" shape-rendering="crispEdges"/><rect x="975" y="865" width="2" height="23" fill="#999" shape-rendering="crispEdges"/><rect x="976" y="887" width="112" height="2" fill="#e4e4e4" shape-rendering="crispEdges"/><rect x="1086" y="866" width="2" height="23" fill="#e4e4e4" shape-rendering="crispEdges"/><rect x="974" y="891" width="20" height="20" fill="#ff0000"/><rect x="974" y="891" width="20" height="2" fill="#ff8080" shape-rendering="crispEdges"/><rect x="974" y="891" width="2" height="20" fill="#ff8080" shape-rendering="crispEdges"/><rect x="975" y="909" width="19" height="2" fill="#a00000" shape-rendering="crispEdges"/><rect x="992" y="892" width="2" height="19" fill="#a00000" shape-rendering="crispEdges"/><rect x="974" y="915" width="20" height="20" fill="#006400"/><rect x="974" y="915" width="20" height="2" fill="#60a060" shape-rendering="crispEdges"/><rect x="974" y="915" width="2" height="20" fill="#60a060" shape-rendering="crispEdges"/><rect x="975" y="933" width="19" height="2" fill="#003000" shape-rendering="crispEdges"/><rect x="992" y="916" width="2" height="19" fill="#003000" shape-rendering="crispEdges"/><rect x="974" y="939" width="20" height="20" fill="#0000ff"/><rect x="974" y="939" width="20" height="2" fill="#8080ff" shape-rendering="crispEdges"/><rect x="974" y="939" width="2" height="20" fill="#8080ff" shape-rendering="crispEdges"/><rect x="975" y="957" width="19" height="2" fill="#0000a0" shape-rendering="crispEdges"/><rect x="992" y="940" width="2" height="19" fill="#0000a0" shape-rendering="crispEdges"/></g><text x="1031.5" y="857" font-size="16" font-style="italic" fill="#000" text-anchor="middle" stroke="#000" stroke-width="0.45">CLOSE</text><text x="1032" y="882" font-size="16" font-style="italic" fill="#000" text-anchor="middle" stroke="#000" stroke-width="0.45">0.000Hz</text><text x="1042.5" y="905.5" font-size="16" font-style="italic" fill="#000" text-anchor="middle" stroke="#000" stroke-width="0.45" letter-spacing="0.3">0.01mA</text><text x="1042.5" y="929.5" font-size="16" font-style="italic" fill="#000" text-anchor="middle" stroke="#000" stroke-width="0.45" letter-spacing="0.3">----mA/s</text><text x="1042.5" y="953.5" font-size="16" font-style="italic" fill="#000" text-anchor="middle" stroke="#000" stroke-width="0.45" letter-spacing="0.3">----nC</text></svg></body></html>
